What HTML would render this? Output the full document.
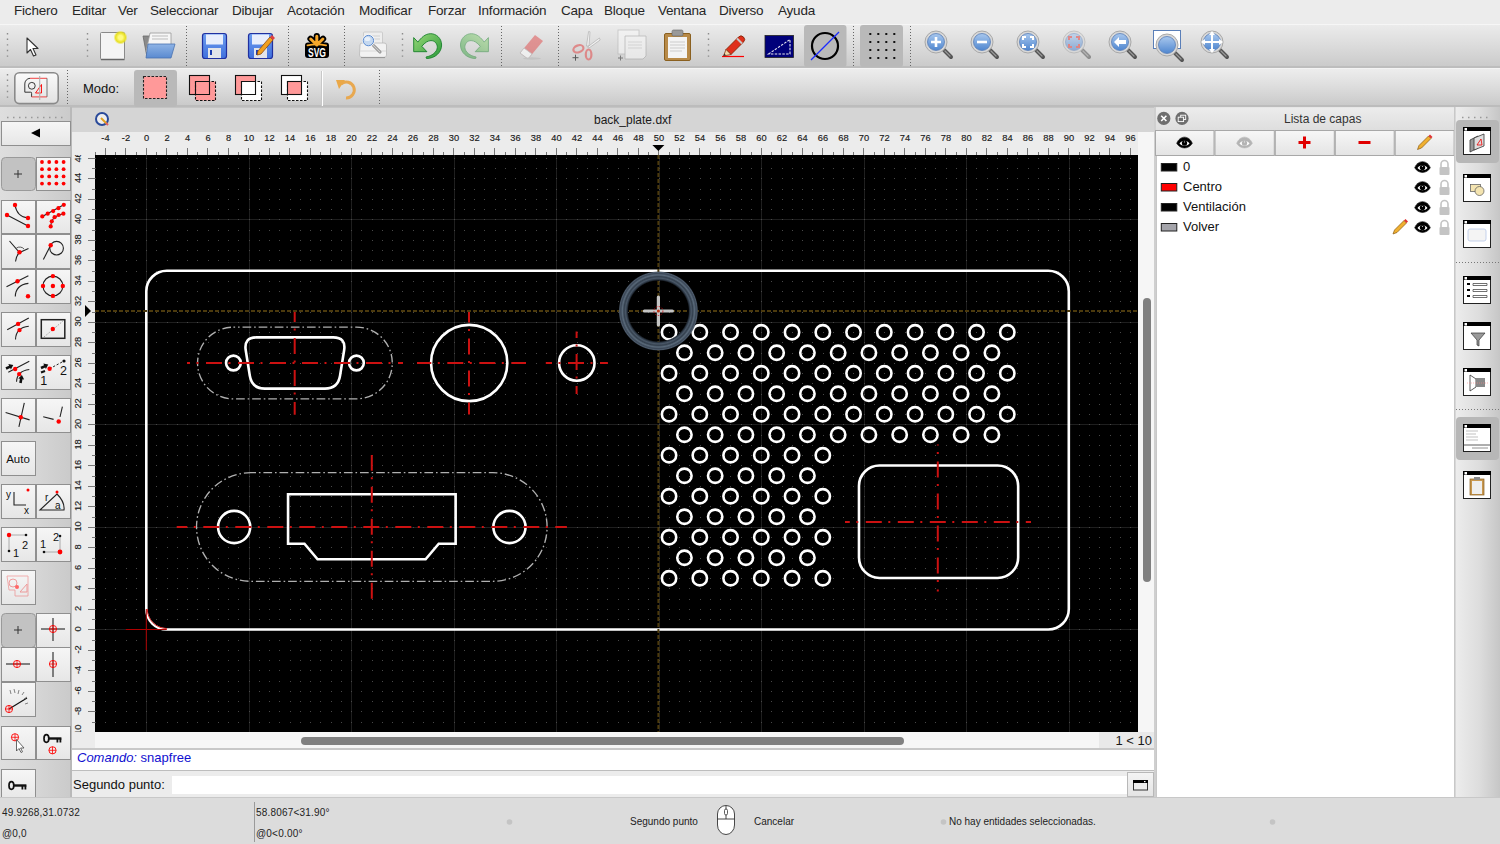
<!DOCTYPE html>
<html><head><meta charset="utf-8"><style>
*{margin:0;padding:0;box-sizing:border-box}
html,body{width:1500px;height:844px;overflow:hidden;background:#e6e6e6;font-family:"Liberation Sans", sans-serif;}
.a{position:absolute}
.t{position:absolute;white-space:nowrap;line-height:1}
svg{position:absolute;overflow:visible}
</style></head>
<body>
<div class="a" style="left:0px;top:0px;width:1500px;height:24px;background:#ececec"></div>
<div class="t" style="left:14px;top:3.8px;font-size:13.5px;color:#262626;letter-spacing:-0.2px">Fichero</div>
<div class="t" style="left:72px;top:3.8px;font-size:13.5px;color:#262626;letter-spacing:-0.2px">Editar</div>
<div class="t" style="left:118px;top:3.8px;font-size:13.5px;color:#262626;letter-spacing:-0.2px">Ver</div>
<div class="t" style="left:150px;top:3.8px;font-size:13.5px;color:#262626;letter-spacing:-0.2px">Seleccionar</div>
<div class="t" style="left:232px;top:3.8px;font-size:13.5px;color:#262626;letter-spacing:-0.2px">Dibujar</div>
<div class="t" style="left:287px;top:3.8px;font-size:13.5px;color:#262626;letter-spacing:-0.2px">Acotación</div>
<div class="t" style="left:359px;top:3.8px;font-size:13.5px;color:#262626;letter-spacing:-0.2px">Modificar</div>
<div class="t" style="left:428px;top:3.8px;font-size:13.5px;color:#262626;letter-spacing:-0.2px">Forzar</div>
<div class="t" style="left:478px;top:3.8px;font-size:13.5px;color:#262626;letter-spacing:-0.2px">Información</div>
<div class="t" style="left:561px;top:3.8px;font-size:13.5px;color:#262626;letter-spacing:-0.2px">Capa</div>
<div class="t" style="left:604px;top:3.8px;font-size:13.5px;color:#262626;letter-spacing:-0.2px">Bloque</div>
<div class="t" style="left:658px;top:3.8px;font-size:13.5px;color:#262626;letter-spacing:-0.2px">Ventana</div>
<div class="t" style="left:719px;top:3.8px;font-size:13.5px;color:#262626;letter-spacing:-0.2px">Diverso</div>
<div class="t" style="left:778px;top:3.8px;font-size:13.5px;color:#262626;letter-spacing:-0.2px">Ayuda</div>
<div class="a" style="left:0px;top:24px;width:1500px;height:44px;background:linear-gradient(#ebebeb,#e2e2e2 30%,#cbcbcb);border-top:1px solid #f6f6f6;border-bottom:2px solid #bdbdbd"></div>
<div class="a" style="left:0px;top:68px;width:1500px;height:39px;background:linear-gradient(#ededed,#e0e0e0 40%,#cacaca);border-top:1px solid #f4f4f4;border-bottom:2px solid #bcbcbc"></div>
<svg class="a" style="left:0px;top:0px;" width="1500" height="68" viewBox="0 0 1500 68"><defs><linearGradient id="lensg" x1="0" y1="0" x2="0" y2="1"><stop offset="0" stop-color="#a9c8ee"/><stop offset="1" stop-color="#4f86cf"/></linearGradient><linearGradient id="flop" x1="0" y1="0" x2="0" y2="1"><stop offset="0" stop-color="#6f9ff0"/><stop offset="1" stop-color="#3f6fdc"/></linearGradient><linearGradient id="fold" x1="0" y1="0" x2="0" y2="1"><stop offset="0" stop-color="#8fb4e6"/><stop offset="1" stop-color="#5a8ad0"/></linearGradient><radialGradient id="glow"><stop offset="0.3" stop-color="#fffb80"/><stop offset="0.7" stop-color="#e8e020"/><stop offset="1" stop-color="#e8e020" stop-opacity="0"/></radialGradient></defs><path d="M7.5 33V58" stroke="#8c8c8c" stroke-width="1.4" stroke-dasharray="1.4 4.2"/><path d="M87.5 33V58" stroke="#8c8c8c" stroke-width="1.4" stroke-dasharray="1.4 4.2"/><path d="M186.5 26V66" stroke="#666" stroke-width="1" stroke-dasharray="1 2"/><path d="M288.5 26V66" stroke="#666" stroke-width="1" stroke-dasharray="1 2"/><path d="M344.5 26V66" stroke="#666" stroke-width="1" stroke-dasharray="1 2"/><path d="M501.5 26V66" stroke="#666" stroke-width="1" stroke-dasharray="1 2"/><path d="M558.5 26V66" stroke="#666" stroke-width="1" stroke-dasharray="1 2"/><path d="M853.5 26V66" stroke="#666" stroke-width="1" stroke-dasharray="1 2"/><path d="M910.5 26V66" stroke="#666" stroke-width="1" stroke-dasharray="1 2"/><path d="M402.5 33V58" stroke="#8c8c8c" stroke-width="1.4" stroke-dasharray="1.4 4.2"/><path d="M708.5 33V58" stroke="#8c8c8c" stroke-width="1.4" stroke-dasharray="1.4 4.2"/><path d="M27 38L27 53L30.5 49.5L33.5 56L36 55L33 48.5L38 48.5Z" fill="#fff" stroke="#333" stroke-width="1.1" stroke-linejoin="round"/><rect x="100.5" y="32.5" width="24" height="27" rx="1" fill="#f4f4f4" stroke="#8a8a8a"/><path d="M101 59.5H124.5" stroke="#666" stroke-width="1.5"/><circle cx="120.5" cy="37.5" r="7" fill="url(#glow)"/><path d="M143 36H152L154 38V57H147Z" fill="#8a8a8a" stroke="#6a6a6a" stroke-width="0.8"/><path d="M150 33H171V52H146Z" fill="#f6f6f6" stroke="#999" stroke-width="0.8"/><path d="M152 36H168M152 39H168" stroke="#bbb" stroke-width="1"/><path d="M148 44H175L171 58H146Z" fill="url(#fold)" stroke="#4a72b0" stroke-width="0.8"/><rect x="202.5" y="33.5" width="24" height="25" rx="2.5" fill="url(#flop)" stroke="#2030a0" stroke-width="1.2"/><rect x="206" y="34.5" width="17" height="10" fill="#e8eefc"/><rect x="208" y="48" width="13" height="10" fill="#e2e4ea"/><rect x="210" y="50" width="2" height="5" fill="#1f3fb0"/><rect x="248.5" y="33.5" width="24" height="25" rx="2.5" fill="url(#flop)" stroke="#2030a0" stroke-width="1.2"/><rect x="252" y="34.5" width="17" height="10" fill="#e8eefc"/><rect x="254" y="48" width="13" height="10" fill="#e2e4ea"/><rect x="256" y="50" width="2" height="5" fill="#1f3fb0"/><path d="M258 51L270 37L273 40L261 54L257 55Z" fill="#f0a020" stroke="#8a4a10" stroke-width="0.8"/><path d="M270 37L272 35L275 38L273 40Z" fill="#e04040"/><g stroke="#000" stroke-linecap="round" fill="none"><path d="M316.8 45V36M316.8 45L310.5 38.8M316.8 45L323.1 38.8" stroke-width="6.2"/></g><rect x="305" y="42.5" width="24" height="15.5" rx="3" fill="#000"/><g stroke="#f7a82a" stroke-linecap="round" fill="none"><path d="M316.8 45V36.2M316.8 45L310.7 39M316.8 45L322.9 39" stroke-width="3"/><path d="M307.5 45.3Q316.8 43.5 326.1 45.3" stroke-width="1.8"/></g><text x="308" y="56.6" textLength="18" lengthAdjust="spacingAndGlyphs" font-family='"Liberation Sans", sans-serif' font-weight="bold" font-size="13" fill="#fff">SVG</text><rect x="363.5" y="32" width="19" height="14" rx="1" fill="#eeeeee" stroke="#c4c4c4" stroke-width="0.8"/><path d="M371 36H380M371 39H380" stroke="#d0d0d0" stroke-width="1"/><path d="M360 45Q360 43 362 43H384Q386.5 43 386.5 45V55Q386.5 57.5 384 57.5H362Q359.5 57.5 359.5 55Z" fill="#f2f2f2" stroke="#b8b8b8" stroke-width="0.8"/><path d="M360 51H386" stroke="#d8d8d8" stroke-width="1"/><path d="M361 57.5H385" stroke="#999" stroke-width="1.2"/><path d="M373.5 45.5L380 52" stroke="#888" stroke-width="3" stroke-linecap="round"/><path d="M373.5 45.5L380 52" stroke="#ccc" stroke-width="1.2" stroke-linecap="round"/><circle cx="368.4" cy="40.6" r="6.3" fill="#fafafa"/><circle cx="368.4" cy="40.6" r="5.2" fill="#c4d8f0" stroke="#5a8ad0" stroke-width="1"/><ellipse cx="367.5" cy="39" rx="3" ry="2" fill="#e8f0fa"/><defs><linearGradient id="ug" x1="0" y1="0" x2="1" y2="1"><stop offset="0" stop-color="#98d878"/><stop offset="1" stop-color="#2a9a3a"/></linearGradient></defs><path d="M413.7 37.6V51.7H426.9L421.8 46.3C425 42.5 428 40.6 431 40.6C435 40.6 437.5 44 437.3 47.5C437 52 432 56 426 57L426.5 58.5C435 58.5 441.6 52.5 441.6 45C441.6 38 436 33.7 430.8 33.7C425 33.7 421 38 417.9 42.1Z" fill="url(#ug)" stroke="#17802a" stroke-width="0.9" stroke-linejoin="round"/><g opacity="0.5" transform="translate(902.1 0) scale(-1 1)"><path d="M413.7 37.6V51.7H426.9L421.8 46.3C425 42.5 428 40.6 431 40.6C435 40.6 437.5 44 437.3 47.5C437 52 432 56 426 57L426.5 58.5C435 58.5 441.6 52.5 441.6 45C441.6 38 436 33.7 430.8 33.7C425 33.7 421 38 417.9 42.1Z" fill="url(#ug)" stroke="#17802a" stroke-width="0.9" stroke-linejoin="round"/></g><g opacity="0.6"><path d="M520 53L535 35L543 41L528 59Z" fill="#e06060"/><path d="M520 53L524 48L532 54L528 59Z" fill="#fff" stroke="#aaa" stroke-width="0.8"/><ellipse cx="532" cy="58.5" rx="9" ry="1.2" fill="#bbb"/></g><g opacity="0.75"><path d="M586.5 46L588.6 31.5L590 31.8L589 46ZM587.5 47L599.4 38L600.2 40L589 48Z" fill="#f8f8f8" stroke="#a0a0a0" stroke-width="0.7"/><ellipse cx="578.4" cy="48.8" rx="5.2" ry="3.4" transform="rotate(-20 578.4 48.8)" fill="none" stroke="#e07070" stroke-width="2.2"/><ellipse cx="588.6" cy="54.5" rx="2.8" ry="5" fill="none" stroke="#e07070" stroke-width="2.2"/><path d="M572.5 57.7H578.5M575.5 54.7V60.7" stroke="#333" stroke-width="1"/></g><g opacity="0.55"><rect x="618" y="30" width="21" height="24" fill="#fafafa" stroke="#aaa" stroke-width="0.8"/><path d="M625 36H646V56L643 59H625Z" fill="#fafafa" stroke="#999" stroke-width="0.8"/><path d="M628 42H642M628 45H642M628 48H642" stroke="#ccc"/><path d="M618 58H623M620.5 55.5V60.5" stroke="#333" stroke-width="1"/></g><rect x="664.5" y="33.5" width="26" height="27" rx="1.5" fill="#b88a48" stroke="#8a6020"/><rect x="668" y="37" width="19" height="21" fill="#f4f4f4"/><path d="M670 42H685M670 45H685M670 48H685M670 51H682" stroke="#ccc"/><rect x="672" y="30" width="11" height="6" rx="1.5" fill="#999" stroke="#666" stroke-width="0.6"/><path d="M722 56.5H744" stroke="#f00" stroke-width="1.2"/><path d="M726 49.5L738.5 37Q741 34.5 743.5 37Q746 39.5 743.5 42L731 54.5Z" fill="#e0301c" stroke="#7a2000" stroke-width="0.8" stroke-linejoin="round"/><path d="M737 38.5L742 43.5" stroke="#c8c8c8" stroke-width="2"/><path d="M726 49.5L723.5 56L731 54.5Z" fill="#f0d8a8" stroke="#7a2000" stroke-width="0.7" stroke-linejoin="round"/><path d="M723.5 56L724.3 53.6L726 55.2Z" fill="#333"/><rect x="765" y="35.5" width="28.5" height="22" fill="#00007a" stroke="#222" stroke-width="0.8"/><path d="M768.5 54L790 39.5V54Z" fill="none" stroke="#e8e8f0" stroke-width="1.1" stroke-dasharray="2.5 1.3"/><rect x="804" y="25" width="42.5" height="42" rx="3" fill="#b9b9b9"/><circle cx="825" cy="46" r="13" fill="none" stroke="#000" stroke-width="2.2"/><path d="M811 60L839 32" stroke="#1a2aff" stroke-width="1.2"/><rect x="860" y="25" width="43" height="42" rx="3" fill="#b9b9b9"/><g fill="#111"><rect x="869.3" y="33" width="2" height="2"/><rect x="877.3" y="33" width="2" height="2"/><rect x="885.3" y="33" width="2" height="2"/><rect x="893.3" y="33" width="2" height="2"/><rect x="869.3" y="41" width="2" height="2"/><rect x="877.3" y="41" width="2" height="2"/><rect x="885.3" y="41" width="2" height="2"/><rect x="893.3" y="41" width="2" height="2"/><rect x="869.3" y="49" width="2" height="2"/><rect x="877.3" y="49" width="2" height="2"/><rect x="885.3" y="49" width="2" height="2"/><rect x="893.3" y="49" width="2" height="2"/><rect x="869.3" y="57" width="2" height="2"/><rect x="877.3" y="57" width="2" height="2"/><rect x="885.3" y="57" width="2" height="2"/><rect x="893.3" y="57" width="2" height="2"/></g><g><path d="M944 50L951 57" stroke="#555" stroke-width="4" stroke-linecap="round"/><path d="M945 51L950 56" stroke="#999" stroke-width="1.2" stroke-linecap="round"/><circle cx="936" cy="42" r="11" fill="#d8d8d8" stroke="#a8a8a8" stroke-width="1"/><circle cx="936" cy="42" r="8.5" fill="url(#lensg)" stroke="#5a7fb8" stroke-width="0.8"/><path d="M931 42H941M936 37V47" stroke="#fff" stroke-width="2.6"/></g><g><path d="M990 50L997 57" stroke="#555" stroke-width="4" stroke-linecap="round"/><path d="M991 51L996 56" stroke="#999" stroke-width="1.2" stroke-linecap="round"/><circle cx="982" cy="42" r="11" fill="#d8d8d8" stroke="#a8a8a8" stroke-width="1"/><circle cx="982" cy="42" r="8.5" fill="url(#lensg)" stroke="#5a7fb8" stroke-width="0.8"/><path d="M977 42H987" stroke="#fff" stroke-width="2.6"/></g><g><path d="M1036 50L1043 57" stroke="#555" stroke-width="4" stroke-linecap="round"/><path d="M1037 51L1042 56" stroke="#999" stroke-width="1.2" stroke-linecap="round"/><circle cx="1028" cy="42" r="11" fill="#d8d8d8" stroke="#a8a8a8" stroke-width="1"/><circle cx="1028" cy="42" r="8.5" fill="url(#lensg)" stroke="#5a7fb8" stroke-width="0.8"/><path d="M1023 40V37H1026M1030 37H1033V40M1033 44V47H1030M1026 47H1023V44" stroke="#fff" stroke-width="2" fill="none"/></g><g opacity="0.55"><path d="M1082 50L1089 57" stroke="#555" stroke-width="4" stroke-linecap="round"/><path d="M1083 51L1088 56" stroke="#999" stroke-width="1.2" stroke-linecap="round"/><circle cx="1074" cy="42" r="11" fill="#d8d8d8" stroke="#a8a8a8" stroke-width="1"/><circle cx="1074" cy="42" r="8.5" fill="url(#lensg)" stroke="#5a7fb8" stroke-width="0.8"/><path d="M1069 40V37H1072M1076 37H1079V40M1079 44V47H1076M1072 47H1069V44" stroke="#e04040" stroke-width="2" fill="none"/></g><g><path d="M1128 50L1135 57" stroke="#555" stroke-width="4" stroke-linecap="round"/><path d="M1129 51L1134 56" stroke="#999" stroke-width="1.2" stroke-linecap="round"/><circle cx="1120" cy="42" r="11" fill="#d8d8d8" stroke="#a8a8a8" stroke-width="1"/><circle cx="1120" cy="42" r="8.5" fill="url(#lensg)" stroke="#5a7fb8" stroke-width="0.8"/><path d="M1114 42L1119 37V40H1126V44H1119V47Z" fill="#fff"/></g><rect x="1153.5" y="30.5" width="27" height="18" fill="#fff" stroke="#5a7fb8"/><g><path d="M1175 53L1182 60" stroke="#555" stroke-width="4" stroke-linecap="round"/><path d="M1176 54L1181 59" stroke="#999" stroke-width="1.2" stroke-linecap="round"/><circle cx="1167" cy="45" r="11" fill="#d8d8d8" stroke="#a8a8a8" stroke-width="1"/><circle cx="1167" cy="45" r="8.5" fill="url(#lensg)" stroke="#5a7fb8" stroke-width="0.8"/></g><g><path d="M1220 50L1227 57" stroke="#555" stroke-width="4" stroke-linecap="round"/><path d="M1221 51L1226 56" stroke="#999" stroke-width="1.2" stroke-linecap="round"/><circle cx="1212" cy="42" r="11" fill="#d8d8d8" stroke="#a8a8a8" stroke-width="1"/><circle cx="1212" cy="42" r="8.5" fill="url(#lensg)" stroke="#5a7fb8" stroke-width="0.8"/><path d="M1212 32V52M1202 42H1222" stroke="#fff" stroke-width="2"/><path d="M1212 31L1209 35H1215ZM1212 53L1209 49H1215ZM1201 42L1205 39V45ZM1223 42L1219 39V45Z" fill="#fff"/></g></svg>
<svg class="a" style="left:0px;top:0px;" width="1500" height="110" viewBox="0 0 1500 110"><path d="M7.5 74V102" stroke="#8c8c8c" stroke-width="1.4" stroke-dasharray="1.4 4.2"/><path d="M67.5 70V106" stroke="#666" stroke-width="1" stroke-dasharray="1 2"/><path d="M322.5 71V106" stroke="#fff" stroke-width="1"/><path d="M321.5 71V106" stroke="#c8c8c8" stroke-width="1"/><path d="M379.5 70V106" stroke="#666" stroke-width="1" stroke-dasharray="1 2"/><defs><linearGradient id="tgb" x1="0" y1="0" x2="0" y2="1"><stop offset="0" stop-color="#fafafa"/><stop offset="1" stop-color="#e2e2e2"/></linearGradient></defs><rect x="14.8" y="72.8" width="43.4" height="30.8" rx="4.5" fill="url(#tgb)" stroke="#8a8a8a" stroke-width="1.6"/><path d="M30 78.3A5.5 5.5 0 0 0 24.8 84V92.2H30.5A1 1 0 0 1 31.6 93.3V96.9" fill="none" stroke="#222" stroke-width="0.9"/><path d="M30 78.3H47M31.6 96.9H47" stroke="#f03030" stroke-width="0.9"/><path d="M47 78.3V96.9" stroke="#666" stroke-width="0.9"/><circle cx="31.8" cy="85.8" r="3.4" fill="none" stroke="#222" stroke-width="0.9"/><path d="M35.5 93L41.5 84.5V93Z" fill="none" stroke="#f00" stroke-width="0.9"/><path d="M39.7 76V100" stroke="#b0b0b0" stroke-width="1.1"/><text x="83" y="93" font-family='"Liberation Sans", sans-serif' font-size="13" fill="#111">Modo:</text><rect x="134" y="70" width="43" height="37" rx="3" fill="#b9b9b9"/><rect x="143.5" y="76.5" width="23" height="22" fill="#f99" stroke="#222" stroke-width="1.1" stroke-dasharray="2.5 1.5"/><rect x="189.5" y="75.5" width="20" height="19" fill="#f99" stroke="#111" stroke-width="1.1"/><rect x="195.5" y="81.5" width="20" height="19" fill="#f99" stroke="#111" stroke-width="1.1" stroke-dasharray="2.5 1.5"/><path d="M195.5 81.5H209.5V94.5H195.5Z" fill="none" stroke="#111" stroke-width="1.1"/><rect x="235.5" y="75.5" width="20" height="19" fill="#f99" stroke="#111" stroke-width="1.1"/><rect x="241.5" y="81.5" width="20" height="19" fill="#fff" stroke="#111" stroke-width="1.1" stroke-dasharray="2.5 1.5"/><path d="M241.5 81.5H255.5V94.5H241.5Z" fill="#fff" stroke="#111" stroke-width="1.1"/><rect x="281.5" y="75.5" width="20" height="19" fill="#fff" stroke="#111" stroke-width="1.1"/><rect x="287.5" y="81.5" width="20" height="19" fill="#fff" stroke="#111" stroke-width="1.1" stroke-dasharray="2.5 1.5"/><rect x="287.5" y="81.5" width="14" height="13" fill="#f99" stroke="#111" stroke-width="1.1"/><path d="M341 84A8 8 0 1 1 346 98" fill="none" stroke="#e8a850" stroke-width="3"/><path d="M336 80L345 80L339 89Z" fill="#eaa848"/></svg>
<div class="a" style="left:0px;top:107px;width:72px;height:690px;background:linear-gradient(90deg,#dedede 0%,#d6d6d6 50%,#cacaca 100%)"></div>
<div class="a" style="left:70px;top:107px;width:2px;height:690px;background:#b9b9b9"></div>
<svg class="a" style="left:0px;top:0px;" width="75" height="800" viewBox="0 0 75 800"><defs><linearGradient id="btng" x1="0" y1="0" x2="0" y2="1"><stop offset="0" stop-color="#f6f6f6"/><stop offset="1" stop-color="#e6e6e6"/></linearGradient></defs><path d="M7 117.5H64" stroke="#999" stroke-width="1.5" stroke-dasharray="1.5 4.5"/><rect x="1.5" y="121.5" width="69" height="24" fill="url(#btng)" stroke="#8f8f8f"/><path d="M31 133L40 128.5V137.5Z" fill="#000"/><rect x="1.5" y="157.5" width="34" height="33" rx="4" fill="#c2c2c2" stroke="#9a9a9a"/><path d="M14 174H22M18 170V178" stroke="#333" stroke-width="1"/><rect x="36.5" y="157.5" width="34" height="33" fill="url(#btng)" stroke="#8f8f8f"/><circle cx="42.0" cy="162.0" r="1.9" fill="#f00"/><circle cx="49.2" cy="162.0" r="1.9" fill="#f00"/><circle cx="56.4" cy="162.0" r="1.9" fill="#f00"/><circle cx="63.6" cy="162.0" r="1.9" fill="#f00"/><circle cx="42.0" cy="169.2" r="1.9" fill="#f00"/><circle cx="49.2" cy="169.2" r="1.9" fill="#f00"/><circle cx="56.4" cy="169.2" r="1.9" fill="#f00"/><circle cx="63.6" cy="169.2" r="1.9" fill="#f00"/><circle cx="42.0" cy="176.4" r="1.9" fill="#f00"/><circle cx="49.2" cy="176.4" r="1.9" fill="#f00"/><circle cx="56.4" cy="176.4" r="1.9" fill="#f00"/><circle cx="63.6" cy="176.4" r="1.9" fill="#f00"/><circle cx="42.0" cy="183.6" r="1.9" fill="#f00"/><circle cx="49.2" cy="183.6" r="1.9" fill="#f00"/><circle cx="56.4" cy="183.6" r="1.9" fill="#f00"/><circle cx="63.6" cy="183.6" r="1.9" fill="#f00"/><rect x="1.5" y="200.5" width="34" height="33" fill="url(#btng)" stroke="#8f8f8f"/><path d="M15 205Q17 217 28 218M7 215L28 226" stroke="#222" stroke-width="1.1" fill="none"/><circle cx="15" cy="205" r="2.2" fill="#f00"/><circle cx="28" cy="218" r="2.2" fill="#f00"/><circle cx="7" cy="215" r="2.2" fill="#f00"/><circle cx="28" cy="226" r="2.2" fill="#f00"/><rect x="36.5" y="200.5" width="34" height="33" fill="url(#btng)" stroke="#8f8f8f"/><path d="M42.3 216.4L63.8 204.8M50.7 226.4Q51 218 58.7 215L63.4 213.7" stroke="#222" stroke-width="1.1" fill="none"/><circle cx="42.3" cy="216.4" r="2.1" fill="#f00"/><circle cx="47.7" cy="213.7" r="2.1" fill="#f00"/><circle cx="53.2" cy="211.1" r="2.1" fill="#f00"/><circle cx="58.4" cy="208.2" r="2.1" fill="#f00"/><circle cx="63.8" cy="204.8" r="2.1" fill="#f00"/><circle cx="50.7" cy="226.4" r="2.1" fill="#f00"/><circle cx="51.8" cy="221.3" r="2.1" fill="#f00"/><circle cx="54.6" cy="217.2" r="2.1" fill="#f00"/><circle cx="58.7" cy="215" r="2.1" fill="#f00"/><circle cx="63.4" cy="213.7" r="2.1" fill="#f00"/><rect x="1.5" y="234.5" width="34" height="34" fill="url(#btng)" stroke="#8f8f8f"/><path d="M9.5 241L19.5 252.5L28.5 248.5M19.5 252.5Q16 256 15.5 261.5" stroke="#222" stroke-width="1.1" fill="none"/><path d="M16.5 248A5 4 0 0 1 24 249" stroke="#333" stroke-width="0.8" fill="none"/><circle cx="19.5" cy="252.3" r="2.2" fill="#f00"/><rect x="36.5" y="234.5" width="34" height="34" fill="url(#btng)" stroke="#8f8f8f"/><circle cx="56.6" cy="248.2" r="6.8" stroke="#222" stroke-width="1.1" fill="none"/><path d="M43.4 259.4L50.7 245.2" stroke="#222" stroke-width="1.1" fill="none"/><circle cx="50.7" cy="245.2" r="2.2" fill="#f00"/><rect x="1.5" y="269.5" width="34" height="34" fill="url(#btng)" stroke="#8f8f8f"/><path d="M6.5 286.7L28.4 275.8M15.3 296.6Q15.5 285 28.4 283.4" stroke="#222" stroke-width="1.1" fill="none"/><circle cx="17.5" cy="281.2" r="2.2" fill="#f00"/><circle cx="28" cy="296.2" r="2.2" fill="#f00"/><rect x="36.5" y="269.5" width="34" height="34" fill="url(#btng)" stroke="#8f8f8f"/><circle cx="52.9" cy="286" r="9.9" stroke="#222" stroke-width="1.1" fill="none"/><circle cx="52.9" cy="286" r="2.2" fill="#f00"/><circle cx="52.9" cy="276.1" r="2.2" fill="#f00"/><circle cx="52.9" cy="295.9" r="2.2" fill="#f00"/><circle cx="43" cy="286" r="2.2" fill="#f00"/><circle cx="62.8" cy="286" r="2.2" fill="#f00"/><rect x="1.5" y="312.5" width="34" height="34" fill="url(#btng)" stroke="#8f8f8f"/><path d="M7.2 329.8L28.8 318.1M15.5 339.4Q16 327.5 28.8 326.3" stroke="#222" stroke-width="1.1" fill="none"/><circle cx="18.1" cy="323.9" r="2.2" fill="#f00"/><circle cx="19.5" cy="330.1" r="2.2" fill="#f00"/><rect x="36.5" y="312.5" width="34" height="34" fill="url(#btng)" stroke="#8f8f8f"/><rect x="41.3" y="319.7" width="23.5" height="18.6" stroke="#222" stroke-width="1.5" fill="none"/><path d="M44 337L63 321" stroke="#888" stroke-width="0.8" stroke-dasharray="1.5 1.5"/><circle cx="52.8" cy="329" r="2.2" fill="#f00"/><rect x="1.5" y="355.5" width="34" height="34" fill="url(#btng)" stroke="#8f8f8f"/><path d="M8.3 372.2L29.3 361.3M16.5 381.8Q17 371 29.3 369.5" stroke="#222" stroke-width="1.1" fill="none"/><path d="M0 -1.3H4V-3L8 0L4 3V1.3H0Z" fill="#111" transform="translate(6 368.5) rotate(-25)"/><path d="M0 -1.3H4V-3L8 0L4 3V1.3H0Z" fill="#111" transform="translate(20.5 383) rotate(-80)"/><circle cx="15.2" cy="369" r="2.2" fill="#f00"/><circle cx="19.2" cy="374.1" r="2.2" fill="#f00"/><rect x="36.5" y="355.5" width="34" height="34" fill="url(#btng)" stroke="#8f8f8f"/><path d="M49.6 368.7L64 361" stroke="#222" stroke-width="1" stroke-dasharray="2.2 1.8" fill="none"/><path d="M0 -1.3H4V-3L8 0L4 3V1.3H0Z" fill="#111" transform="translate(41 368) rotate(-25)"/><path d="M41 372.5L45 371" stroke="#111" stroke-width="2.2"/><circle cx="64" cy="361" r="1.6" fill="#111"/><circle cx="49.6" cy="368.7" r="2.2" fill="#f00"/><text x="40.3" y="385" font-family='"Liberation Sans", sans-serif' font-size="12.5" fill="#111">1</text><text x="60" y="375" font-family='"Liberation Sans", sans-serif' font-size="12.5" fill="#111">2</text><rect x="1.5" y="398.5" width="34" height="34" fill="url(#btng)" stroke="#8f8f8f"/><path d="M5.6 412.5L29.6 419.9M24.3 402.9L18.9 426.9" stroke="#222" stroke-width="1.1" fill="none"/><circle cx="20.8" cy="417.3" r="2.2" fill="#f00"/><rect x="36.5" y="398.5" width="34" height="34" fill="url(#btng)" stroke="#8f8f8f"/><path d="M43.2 416.7L53.6 419.4M62.4 406.6L60 417" stroke="#222" stroke-width="1.1" fill="none"/><circle cx="58.7" cy="421.5" r="2.2" fill="#f00"/><rect x="1.5" y="441.5" width="34" height="34" fill="url(#btng)" stroke="#8f8f8f"/><text x="18" y="463" text-anchor="middle" font-family='"Liberation Sans", sans-serif' font-size="11.5" fill="#111">Auto</text><rect x="1.5" y="484.5" width="34" height="34" fill="url(#btng)" stroke="#8f8f8f"/><path d="M14 492V505H26" stroke="#222" stroke-width="1.1" fill="none"/><circle cx="28" cy="490" r="1.5" fill="#f00"/><text x="6" y="498" font-family='"Liberation Sans", sans-serif' font-size="10" fill="#111">y</text><text x="24" y="514" font-family='"Liberation Sans", sans-serif' font-size="10" fill="#111">x</text><rect x="36.5" y="484.5" width="34" height="34" fill="url(#btng)" stroke="#8f8f8f"/><path d="M40 510L57 494Q65 502 64 510Z" stroke="#222" stroke-width="1.1" fill="none"/><circle cx="57" cy="492" r="1.5" fill="#f00"/><text x="45" y="501" font-family='"Liberation Sans", sans-serif' font-size="10" fill="#111">r</text><text x="55" y="509" font-family='"Liberation Sans", sans-serif' font-size="10" fill="#111">a</text><rect x="1.5" y="527.5" width="34" height="34" fill="url(#btng)" stroke="#8f8f8f"/><path d="M9 535H26M9 535V551" stroke="#999" stroke-width="0.8"/><circle cx="9" cy="535" r="2.2" fill="#f00"/><circle cx="26" cy="535" r="1.3" fill="#111"/><circle cx="9" cy="551" r="1.3" fill="#111"/><text x="13" y="557" font-family='"Liberation Sans", sans-serif' font-size="11" fill="#111">1</text><text x="22" y="549" font-family='"Liberation Sans", sans-serif' font-size="11" fill="#111">2</text><rect x="36.5" y="527.5" width="34" height="34" fill="url(#btng)" stroke="#8f8f8f"/><path d="M44 552H60M60 536V552" stroke="#999" stroke-width="0.8"/><circle cx="60" cy="552" r="2.4" fill="#f00"/><circle cx="60" cy="536" r="1.3" fill="#111"/><circle cx="44" cy="552" r="1.3" fill="#111"/><text x="40" y="548" font-family='"Liberation Sans", sans-serif' font-size="11" fill="#111">1</text><text x="53" y="541" font-family='"Liberation Sans", sans-serif' font-size="11" fill="#111">2</text><rect x="1.5" y="570.5" width="34" height="34" fill="url(#btng)" stroke="#8f8f8f"/><g opacity="0.35"><path d="M7 576H28V596H15V590H9Z" fill="none" stroke="#e00" stroke-width="0.8"/><circle cx="13" cy="583" r="4" fill="none" stroke="#e00"/><path d="M20 592L27 584V592Z" fill="none" stroke="#e00"/></g><circle cx="17" cy="587" r="2" fill="#f66"/><rect x="1.5" y="613.5" width="34" height="34" rx="4" fill="#c2c2c2" stroke="#9a9a9a"/><path d="M14 630H22M18 626V634" stroke="#333" stroke-width="1"/><rect x="36.5" y="613.5" width="34" height="34" fill="url(#btng)" stroke="#8f8f8f"/><path d="M41 629H65M53 618V641" stroke="#111" stroke-width="1"/><circle cx="53" cy="629" r="3.6" fill="#fff" fill-opacity="0.01" stroke="#f00" stroke-width="0.9"/><path d="M49.4 629H56.6M53 625.4V632.6" stroke="#f00" stroke-width="0.8"/><rect x="1.5" y="647.5" width="34" height="34" fill="url(#btng)" stroke="#8f8f8f"/><path d="M6 664H30" stroke="#111" stroke-width="1"/><circle cx="17" cy="664" r="3.6" fill="#fff" fill-opacity="0.01" stroke="#f00" stroke-width="0.9"/><path d="M13.4 664H20.6M17 660.4V667.6" stroke="#f00" stroke-width="0.8"/><rect x="36.5" y="647.5" width="34" height="34" fill="url(#btng)" stroke="#8f8f8f"/><path d="M53 652V677" stroke="#111" stroke-width="1"/><circle cx="53" cy="664" r="3.6" fill="#fff" fill-opacity="0.01" stroke="#f00" stroke-width="0.9"/><path d="M49.4 664H56.6M53 660.4V667.6" stroke="#f00" stroke-width="0.8"/><rect x="1.5" y="682.5" width="34" height="34" fill="url(#btng)" stroke="#8f8f8f"/><path d="M9 709L27 698" stroke="#111" stroke-width="1.2"/><path d="M10 690L11 694M14 689L15 693M19 690L18 694M24 692L22 695M27 697L24 699M28 703L25 704" stroke="#666" stroke-width="0.8"/><circle cx="9" cy="709" r="3.6" fill="#fff" fill-opacity="0.01" stroke="#f00" stroke-width="0.9"/><path d="M5.4 709H12.6M9 705.4V712.6" stroke="#f00" stroke-width="0.8"/><rect x="1.5" y="726.5" width="34" height="33" fill="url(#btng)" stroke="#8f8f8f"/><circle cx="15" cy="737.3" r="3.6" fill="none" stroke="#f00" stroke-width="0.9"/><path d="M11.4 737.3H18.6M15 733.6999999999999V740.9" stroke="#f00" stroke-width="0.8"/><path d="M16.5 739.5V751L19 748.5L21 752.5L22.5 751.8L20.6 748H24Z" fill="#fff" stroke="#444" stroke-width="0.8" stroke-linejoin="round"/><rect x="36.5" y="726.5" width="34" height="33" fill="url(#btng)" stroke="#8f8f8f"/><ellipse cx="46.4" cy="738.5" rx="2.4" ry="3.8" fill="none" stroke="#111" stroke-width="1.7"/><path d="M48.8 738.5H61.4" stroke="#111" stroke-width="2.4"/><path d="M57.4 738.5V742.5M60.4 738.5V742.5" stroke="#111" stroke-width="1.8"/><circle cx="52.5" cy="750.3" r="3.6" fill="none" stroke="#f00" stroke-width="0.9"/><path d="M48.9 750.3H56.1M52.5 746.6999999999999V753.9" stroke="#f00" stroke-width="0.8"/><rect x="1.5" y="769.5" width="34" height="33" fill="url(#btng)" stroke="#8f8f8f"/><ellipse cx="11.4" cy="785.5" rx="2.4" ry="3.8" fill="none" stroke="#111" stroke-width="1.7"/><path d="M13.8 785.5H26.4" stroke="#111" stroke-width="2.4"/><path d="M22.4 785.5V789.5M25.4 785.5V789.5" stroke="#111" stroke-width="1.8"/></svg>
<div class="a" style="left:72px;top:107px;width:1082px;height:1px;background:#c4c4c4"></div>
<div class="a" style="left:72px;top:108px;width:1082px;height:24px;background:#d5d5d5"></div>
<div class="t" style="left:594px;top:114px;font-size:12px;color:#1a1a1a;">back_plate.dxf</div>
<svg class="a" style="left:94px;top:111px;" width="16" height="16" viewBox="0 0 16 16"><circle cx="8" cy="8" r="6" fill="#eee" stroke="#2a4a9a" stroke-width="2"/><path d="M7 7L13 13" stroke="#e0a020" stroke-width="2"/><path d="M12 12L14 14" stroke="#e06060" stroke-width="2"/></svg>
<div class="a" style="left:72px;top:132px;width:1082px;height:23px;background:#ececec"></div>
<div class="a" style="left:72px;top:155px;width:23px;height:593px;background:#ececec"></div>
<svg class="a" style="left:72px;top:132px;overflow:hidden" width="1082" height="23" viewBox="0 0 1082 23"><path d="M23.5 20V23M33.5 16V23M43.5 20V23M53.5 16V23M64.5 20V23M74.5 16V23M84.5 20V23M94.5 16V23M105.5 20V23M115.5 16V23M125.5 20V23M135.5 16V23M146.5 20V23M156.5 16V23M166.5 20V23M176.5 16V23M187.5 20V23M197.5 16V23M207.5 20V23M217.5 16V23M228.5 20V23M238.5 16V23M248.5 20V23M258.5 16V23M269.5 20V23M279.5 16V23M289.5 20V23M299.5 16V23M310.5 20V23M320.5 16V23M330.5 20V23M340.5 16V23M351.5 20V23M361.5 16V23M371.5 20V23M381.5 16V23M392.5 20V23M402.5 16V23M412.5 20V23M422.5 16V23M433.5 20V23M443.5 16V23M453.5 20V23M463.5 16V23M474.5 20V23M484.5 16V23M494.5 20V23M504.5 16V23M515.5 20V23M525.5 16V23M535.5 20V23M545.5 16V23M556.5 20V23M566.5 16V23M576.5 20V23M586.5 16V23M597.5 20V23M607.5 16V23M617.5 20V23M627.5 16V23M638.5 20V23M648.5 16V23M658.5 20V23M668.5 16V23M679.5 20V23M689.5 16V23M699.5 20V23M709.5 16V23M720.5 20V23M730.5 16V23M740.5 20V23M750.5 16V23M761.5 20V23M771.5 16V23M781.5 20V23M791.5 16V23M802.5 20V23M812.5 16V23M822.5 20V23M832.5 16V23M843.5 20V23M853.5 16V23M863.5 20V23M873.5 16V23M884.5 20V23M894.5 16V23M904.5 20V23M914.5 16V23M925.5 20V23M935.5 16V23M945.5 20V23M955.5 16V23M966.5 20V23M976.5 16V23M986.5 20V23M996.5 16V23M1007.5 20V23M1017.5 16V23M1027.5 20V23M1037.5 16V23M1048.5 20V23M1058.5 16V23" stroke="#777" stroke-width="1"/>
<g font-family='"Liberation Sans", sans-serif' font-size="9.3" fill="#1a1a1a" stroke="#1a1a1a" stroke-width="0.15"><text x="33.5" y="9" text-anchor="middle">-4</text><text x="54.0" y="9" text-anchor="middle">-2</text><text x="74.5" y="9" text-anchor="middle">0</text><text x="95.0" y="9" text-anchor="middle">2</text><text x="115.5" y="9" text-anchor="middle">4</text><text x="136.0" y="9" text-anchor="middle">6</text><text x="156.5" y="9" text-anchor="middle">8</text><text x="177.0" y="9" text-anchor="middle">10</text><text x="197.5" y="9" text-anchor="middle">12</text><text x="218.0" y="9" text-anchor="middle">14</text><text x="238.5" y="9" text-anchor="middle">16</text><text x="259.0" y="9" text-anchor="middle">18</text><text x="279.5" y="9" text-anchor="middle">20</text><text x="300.0" y="9" text-anchor="middle">22</text><text x="320.5" y="9" text-anchor="middle">24</text><text x="341.0" y="9" text-anchor="middle">26</text><text x="361.5" y="9" text-anchor="middle">28</text><text x="382.0" y="9" text-anchor="middle">30</text><text x="402.5" y="9" text-anchor="middle">32</text><text x="423.0" y="9" text-anchor="middle">34</text><text x="443.5" y="9" text-anchor="middle">36</text><text x="464.0" y="9" text-anchor="middle">38</text><text x="484.5" y="9" text-anchor="middle">40</text><text x="505.0" y="9" text-anchor="middle">42</text><text x="525.5" y="9" text-anchor="middle">44</text><text x="546.0" y="9" text-anchor="middle">46</text><text x="566.5" y="9" text-anchor="middle">48</text><text x="587.0" y="9" text-anchor="middle">50</text><text x="607.5" y="9" text-anchor="middle">52</text><text x="628.0" y="9" text-anchor="middle">54</text><text x="648.5" y="9" text-anchor="middle">56</text><text x="669.0" y="9" text-anchor="middle">58</text><text x="689.5" y="9" text-anchor="middle">60</text><text x="710.0" y="9" text-anchor="middle">62</text><text x="730.5" y="9" text-anchor="middle">64</text><text x="751.0" y="9" text-anchor="middle">66</text><text x="771.5" y="9" text-anchor="middle">68</text><text x="792.0" y="9" text-anchor="middle">70</text><text x="812.5" y="9" text-anchor="middle">72</text><text x="833.0" y="9" text-anchor="middle">74</text><text x="853.5" y="9" text-anchor="middle">76</text><text x="874.0" y="9" text-anchor="middle">78</text><text x="894.5" y="9" text-anchor="middle">80</text><text x="915.0" y="9" text-anchor="middle">82</text><text x="935.5" y="9" text-anchor="middle">84</text><text x="956.0" y="9" text-anchor="middle">86</text><text x="976.5" y="9" text-anchor="middle">88</text><text x="997.0" y="9" text-anchor="middle">90</text><text x="1017.5" y="9" text-anchor="middle">92</text><text x="1038.0" y="9" text-anchor="middle">94</text><text x="1058.5" y="9" text-anchor="middle">96</text></g>
<path d="M580.4 13H592.4L586.4 19Z" fill="#000"/></svg>
<svg class="a" style="left:72px;top:155px;overflow:hidden" width="23" height="577" viewBox="0 0 23 577"><path d="M20 567.5H23M16 556.5H23M20 546.5H23M16 536.5H23M20 526.5H23M16 515.5H23M20 505.5H23M16 495.5H23M20 485.5H23M16 474.5H23M20 464.5H23M16 454.5H23M20 444.5H23M16 433.5H23M20 423.5H23M16 413.5H23M20 403.5H23M16 392.5H23M20 382.5H23M16 372.5H23M20 362.5H23M16 351.5H23M20 341.5H23M16 331.5H23M20 321.5H23M16 310.5H23M20 300.5H23M16 290.5H23M20 280.5H23M16 269.5H23M20 259.5H23M16 249.5H23M20 239.5H23M16 228.5H23M20 218.5H23M16 208.5H23M20 198.5H23M16 187.5H23M20 177.5H23M16 167.5H23M20 157.5H23M16 146.5H23M20 136.5H23M16 126.5H23M20 116.5H23M16 105.5H23M20 95.5H23M16 85.5H23M20 75.5H23M16 64.5H23M20 54.5H23M16 44.5H23M20 34.5H23M16 23.5H23M20 13.5H23M16 3.5H23" stroke="#777" stroke-width="1"/>
<g font-family='"Liberation Sans", sans-serif' font-size="9.3" fill="#1a1a1a" stroke="#1a1a1a" stroke-width="0.15"><text transform="translate(8.8 576.4) rotate(-90)" x="0" y="0" text-anchor="middle">-10</text><text transform="translate(8.8 555.9) rotate(-90)" x="0" y="0" text-anchor="middle">-8</text><text transform="translate(8.8 535.4) rotate(-90)" x="0" y="0" text-anchor="middle">-6</text><text transform="translate(8.8 514.9) rotate(-90)" x="0" y="0" text-anchor="middle">-4</text><text transform="translate(8.8 494.4) rotate(-90)" x="0" y="0" text-anchor="middle">-2</text><text transform="translate(8.8 473.9) rotate(-90)" x="0" y="0" text-anchor="middle">0</text><text transform="translate(8.8 453.4) rotate(-90)" x="0" y="0" text-anchor="middle">2</text><text transform="translate(8.8 432.9) rotate(-90)" x="0" y="0" text-anchor="middle">4</text><text transform="translate(8.8 412.4) rotate(-90)" x="0" y="0" text-anchor="middle">6</text><text transform="translate(8.8 391.9) rotate(-90)" x="0" y="0" text-anchor="middle">8</text><text transform="translate(8.8 371.4) rotate(-90)" x="0" y="0" text-anchor="middle">10</text><text transform="translate(8.8 350.9) rotate(-90)" x="0" y="0" text-anchor="middle">12</text><text transform="translate(8.8 330.4) rotate(-90)" x="0" y="0" text-anchor="middle">14</text><text transform="translate(8.8 309.9) rotate(-90)" x="0" y="0" text-anchor="middle">16</text><text transform="translate(8.8 289.4) rotate(-90)" x="0" y="0" text-anchor="middle">18</text><text transform="translate(8.8 268.9) rotate(-90)" x="0" y="0" text-anchor="middle">20</text><text transform="translate(8.8 248.4) rotate(-90)" x="0" y="0" text-anchor="middle">22</text><text transform="translate(8.8 227.9) rotate(-90)" x="0" y="0" text-anchor="middle">24</text><text transform="translate(8.8 207.4) rotate(-90)" x="0" y="0" text-anchor="middle">26</text><text transform="translate(8.8 186.9) rotate(-90)" x="0" y="0" text-anchor="middle">28</text><text transform="translate(8.8 166.4) rotate(-90)" x="0" y="0" text-anchor="middle">30</text><text transform="translate(8.8 145.9) rotate(-90)" x="0" y="0" text-anchor="middle">32</text><text transform="translate(8.8 125.4) rotate(-90)" x="0" y="0" text-anchor="middle">34</text><text transform="translate(8.8 104.9) rotate(-90)" x="0" y="0" text-anchor="middle">36</text><text transform="translate(8.8 84.4) rotate(-90)" x="0" y="0" text-anchor="middle">38</text><text transform="translate(8.8 63.9) rotate(-90)" x="0" y="0" text-anchor="middle">40</text><text transform="translate(8.8 43.4) rotate(-90)" x="0" y="0" text-anchor="middle">42</text><text transform="translate(8.8 22.9) rotate(-90)" x="0" y="0" text-anchor="middle">44</text><text transform="translate(8.8 2.4) rotate(-90)" x="0" y="0" text-anchor="middle">46</text></g>
<path d="M13 150.0V162.0L19 156.0Z" fill="#000"/></svg>
<svg class="a" style="left:95px;top:155px;overflow:hidden" width="1043" height="577" viewBox="0 0 1043 577"><rect x="0" y="0" width="1043" height="577" fill="#000"/>
<path d="M51.5 0V577M154.5 0V577M256.5 0V577M359.5 0V577M461.5 0V577M564.5 0V577M666.5 0V577M769.5 0V577M871.5 0V577M974.5 0V577M0 474.5H1043M0 372.5H1043M0 269.5H1043M0 167.5H1043M0 64.5H1043" stroke="#1f1f1f" stroke-width="1" fill="none"/>
<path d="M0 567h1v1h-1zM0 556h1v1h-1zM0 546h1v1h-1zM0 536h1v1h-1zM0 526h1v1h-1zM0 515h1v1h-1zM0 505h1v1h-1zM0 495h1v1h-1zM0 485h1v1h-1zM0 474h1v1h-1zM0 464h1v1h-1zM0 454h1v1h-1zM0 444h1v1h-1zM0 433h1v1h-1zM0 423h1v1h-1zM0 413h1v1h-1zM0 403h1v1h-1zM0 392h1v1h-1zM0 382h1v1h-1zM0 372h1v1h-1zM0 362h1v1h-1zM0 351h1v1h-1zM0 341h1v1h-1zM0 331h1v1h-1zM0 321h1v1h-1zM0 310h1v1h-1zM0 300h1v1h-1zM0 290h1v1h-1zM0 280h1v1h-1zM0 269h1v1h-1zM0 259h1v1h-1zM0 249h1v1h-1zM0 239h1v1h-1zM0 228h1v1h-1zM0 218h1v1h-1zM0 208h1v1h-1zM0 198h1v1h-1zM0 187h1v1h-1zM0 177h1v1h-1zM0 167h1v1h-1zM0 157h1v1h-1zM0 146h1v1h-1zM0 136h1v1h-1zM0 126h1v1h-1zM0 116h1v1h-1zM0 105h1v1h-1zM0 95h1v1h-1zM0 85h1v1h-1zM0 75h1v1h-1zM0 64h1v1h-1zM0 54h1v1h-1zM0 44h1v1h-1zM0 34h1v1h-1zM0 23h1v1h-1zM0 13h1v1h-1zM0 3h1v1h-1zM10 567h1v1h-1zM10 556h1v1h-1zM10 546h1v1h-1zM10 536h1v1h-1zM10 526h1v1h-1zM10 515h1v1h-1zM10 505h1v1h-1zM10 495h1v1h-1zM10 485h1v1h-1zM10 474h1v1h-1zM10 464h1v1h-1zM10 454h1v1h-1zM10 444h1v1h-1zM10 433h1v1h-1zM10 423h1v1h-1zM10 413h1v1h-1zM10 403h1v1h-1zM10 392h1v1h-1zM10 382h1v1h-1zM10 372h1v1h-1zM10 362h1v1h-1zM10 351h1v1h-1zM10 341h1v1h-1zM10 331h1v1h-1zM10 321h1v1h-1zM10 310h1v1h-1zM10 300h1v1h-1zM10 290h1v1h-1zM10 280h1v1h-1zM10 269h1v1h-1zM10 259h1v1h-1zM10 249h1v1h-1zM10 239h1v1h-1zM10 228h1v1h-1zM10 218h1v1h-1zM10 208h1v1h-1zM10 198h1v1h-1zM10 187h1v1h-1zM10 177h1v1h-1zM10 167h1v1h-1zM10 157h1v1h-1zM10 146h1v1h-1zM10 136h1v1h-1zM10 126h1v1h-1zM10 116h1v1h-1zM10 105h1v1h-1zM10 95h1v1h-1zM10 85h1v1h-1zM10 75h1v1h-1zM10 64h1v1h-1zM10 54h1v1h-1zM10 44h1v1h-1zM10 34h1v1h-1zM10 23h1v1h-1zM10 13h1v1h-1zM10 3h1v1h-1zM20 567h1v1h-1zM20 556h1v1h-1zM20 546h1v1h-1zM20 536h1v1h-1zM20 526h1v1h-1zM20 515h1v1h-1zM20 505h1v1h-1zM20 495h1v1h-1zM20 485h1v1h-1zM20 474h1v1h-1zM20 464h1v1h-1zM20 454h1v1h-1zM20 444h1v1h-1zM20 433h1v1h-1zM20 423h1v1h-1zM20 413h1v1h-1zM20 403h1v1h-1zM20 392h1v1h-1zM20 382h1v1h-1zM20 372h1v1h-1zM20 362h1v1h-1zM20 351h1v1h-1zM20 341h1v1h-1zM20 331h1v1h-1zM20 321h1v1h-1zM20 310h1v1h-1zM20 300h1v1h-1zM20 290h1v1h-1zM20 280h1v1h-1zM20 269h1v1h-1zM20 259h1v1h-1zM20 249h1v1h-1zM20 239h1v1h-1zM20 228h1v1h-1zM20 218h1v1h-1zM20 208h1v1h-1zM20 198h1v1h-1zM20 187h1v1h-1zM20 177h1v1h-1zM20 167h1v1h-1zM20 157h1v1h-1zM20 146h1v1h-1zM20 136h1v1h-1zM20 126h1v1h-1zM20 116h1v1h-1zM20 105h1v1h-1zM20 95h1v1h-1zM20 85h1v1h-1zM20 75h1v1h-1zM20 64h1v1h-1zM20 54h1v1h-1zM20 44h1v1h-1zM20 34h1v1h-1zM20 23h1v1h-1zM20 13h1v1h-1zM20 3h1v1h-1zM31 567h1v1h-1zM31 556h1v1h-1zM31 546h1v1h-1zM31 536h1v1h-1zM31 526h1v1h-1zM31 515h1v1h-1zM31 505h1v1h-1zM31 495h1v1h-1zM31 485h1v1h-1zM31 474h1v1h-1zM31 464h1v1h-1zM31 454h1v1h-1zM31 444h1v1h-1zM31 433h1v1h-1zM31 423h1v1h-1zM31 413h1v1h-1zM31 403h1v1h-1zM31 392h1v1h-1zM31 382h1v1h-1zM31 372h1v1h-1zM31 362h1v1h-1zM31 351h1v1h-1zM31 341h1v1h-1zM31 331h1v1h-1zM31 321h1v1h-1zM31 310h1v1h-1zM31 300h1v1h-1zM31 290h1v1h-1zM31 280h1v1h-1zM31 269h1v1h-1zM31 259h1v1h-1zM31 249h1v1h-1zM31 239h1v1h-1zM31 228h1v1h-1zM31 218h1v1h-1zM31 208h1v1h-1zM31 198h1v1h-1zM31 187h1v1h-1zM31 177h1v1h-1zM31 167h1v1h-1zM31 157h1v1h-1zM31 146h1v1h-1zM31 136h1v1h-1zM31 126h1v1h-1zM31 116h1v1h-1zM31 105h1v1h-1zM31 95h1v1h-1zM31 85h1v1h-1zM31 75h1v1h-1zM31 64h1v1h-1zM31 54h1v1h-1zM31 44h1v1h-1zM31 34h1v1h-1zM31 23h1v1h-1zM31 13h1v1h-1zM31 3h1v1h-1zM41 567h1v1h-1zM41 556h1v1h-1zM41 546h1v1h-1zM41 536h1v1h-1zM41 526h1v1h-1zM41 515h1v1h-1zM41 505h1v1h-1zM41 495h1v1h-1zM41 485h1v1h-1zM41 474h1v1h-1zM41 464h1v1h-1zM41 454h1v1h-1zM41 444h1v1h-1zM41 433h1v1h-1zM41 423h1v1h-1zM41 413h1v1h-1zM41 403h1v1h-1zM41 392h1v1h-1zM41 382h1v1h-1zM41 372h1v1h-1zM41 362h1v1h-1zM41 351h1v1h-1zM41 341h1v1h-1zM41 331h1v1h-1zM41 321h1v1h-1zM41 310h1v1h-1zM41 300h1v1h-1zM41 290h1v1h-1zM41 280h1v1h-1zM41 269h1v1h-1zM41 259h1v1h-1zM41 249h1v1h-1zM41 239h1v1h-1zM41 228h1v1h-1zM41 218h1v1h-1zM41 208h1v1h-1zM41 198h1v1h-1zM41 187h1v1h-1zM41 177h1v1h-1zM41 167h1v1h-1zM41 157h1v1h-1zM41 146h1v1h-1zM41 136h1v1h-1zM41 126h1v1h-1zM41 116h1v1h-1zM41 105h1v1h-1zM41 95h1v1h-1zM41 85h1v1h-1zM41 75h1v1h-1zM41 64h1v1h-1zM41 54h1v1h-1zM41 44h1v1h-1zM41 34h1v1h-1zM41 23h1v1h-1zM41 13h1v1h-1zM41 3h1v1h-1zM51 567h1v1h-1zM51 556h1v1h-1zM51 546h1v1h-1zM51 536h1v1h-1zM51 526h1v1h-1zM51 515h1v1h-1zM51 505h1v1h-1zM51 495h1v1h-1zM51 485h1v1h-1zM51 474h1v1h-1zM51 464h1v1h-1zM51 454h1v1h-1zM51 444h1v1h-1zM51 433h1v1h-1zM51 423h1v1h-1zM51 413h1v1h-1zM51 403h1v1h-1zM51 392h1v1h-1zM51 382h1v1h-1zM51 372h1v1h-1zM51 362h1v1h-1zM51 351h1v1h-1zM51 341h1v1h-1zM51 331h1v1h-1zM51 321h1v1h-1zM51 310h1v1h-1zM51 300h1v1h-1zM51 290h1v1h-1zM51 280h1v1h-1zM51 269h1v1h-1zM51 259h1v1h-1zM51 249h1v1h-1zM51 239h1v1h-1zM51 228h1v1h-1zM51 218h1v1h-1zM51 208h1v1h-1zM51 198h1v1h-1zM51 187h1v1h-1zM51 177h1v1h-1zM51 167h1v1h-1zM51 157h1v1h-1zM51 146h1v1h-1zM51 136h1v1h-1zM51 126h1v1h-1zM51 116h1v1h-1zM51 105h1v1h-1zM51 95h1v1h-1zM51 85h1v1h-1zM51 75h1v1h-1zM51 64h1v1h-1zM51 54h1v1h-1zM51 44h1v1h-1zM51 34h1v1h-1zM51 23h1v1h-1zM51 13h1v1h-1zM51 3h1v1h-1zM61 567h1v1h-1zM61 556h1v1h-1zM61 546h1v1h-1zM61 536h1v1h-1zM61 526h1v1h-1zM61 515h1v1h-1zM61 505h1v1h-1zM61 495h1v1h-1zM61 485h1v1h-1zM61 474h1v1h-1zM61 464h1v1h-1zM61 454h1v1h-1zM61 444h1v1h-1zM61 433h1v1h-1zM61 423h1v1h-1zM61 413h1v1h-1zM61 403h1v1h-1zM61 392h1v1h-1zM61 382h1v1h-1zM61 372h1v1h-1zM61 362h1v1h-1zM61 351h1v1h-1zM61 341h1v1h-1zM61 331h1v1h-1zM61 321h1v1h-1zM61 310h1v1h-1zM61 300h1v1h-1zM61 290h1v1h-1zM61 280h1v1h-1zM61 269h1v1h-1zM61 259h1v1h-1zM61 249h1v1h-1zM61 239h1v1h-1zM61 228h1v1h-1zM61 218h1v1h-1zM61 208h1v1h-1zM61 198h1v1h-1zM61 187h1v1h-1zM61 177h1v1h-1zM61 167h1v1h-1zM61 157h1v1h-1zM61 146h1v1h-1zM61 136h1v1h-1zM61 126h1v1h-1zM61 116h1v1h-1zM61 105h1v1h-1zM61 95h1v1h-1zM61 85h1v1h-1zM61 75h1v1h-1zM61 64h1v1h-1zM61 54h1v1h-1zM61 44h1v1h-1zM61 34h1v1h-1zM61 23h1v1h-1zM61 13h1v1h-1zM61 3h1v1h-1zM72 567h1v1h-1zM72 556h1v1h-1zM72 546h1v1h-1zM72 536h1v1h-1zM72 526h1v1h-1zM72 515h1v1h-1zM72 505h1v1h-1zM72 495h1v1h-1zM72 485h1v1h-1zM72 474h1v1h-1zM72 464h1v1h-1zM72 454h1v1h-1zM72 444h1v1h-1zM72 433h1v1h-1zM72 423h1v1h-1zM72 413h1v1h-1zM72 403h1v1h-1zM72 392h1v1h-1zM72 382h1v1h-1zM72 372h1v1h-1zM72 362h1v1h-1zM72 351h1v1h-1zM72 341h1v1h-1zM72 331h1v1h-1zM72 321h1v1h-1zM72 310h1v1h-1zM72 300h1v1h-1zM72 290h1v1h-1zM72 280h1v1h-1zM72 269h1v1h-1zM72 259h1v1h-1zM72 249h1v1h-1zM72 239h1v1h-1zM72 228h1v1h-1zM72 218h1v1h-1zM72 208h1v1h-1zM72 198h1v1h-1zM72 187h1v1h-1zM72 177h1v1h-1zM72 167h1v1h-1zM72 157h1v1h-1zM72 146h1v1h-1zM72 136h1v1h-1zM72 126h1v1h-1zM72 116h1v1h-1zM72 105h1v1h-1zM72 95h1v1h-1zM72 85h1v1h-1zM72 75h1v1h-1zM72 64h1v1h-1zM72 54h1v1h-1zM72 44h1v1h-1zM72 34h1v1h-1zM72 23h1v1h-1zM72 13h1v1h-1zM72 3h1v1h-1zM82 567h1v1h-1zM82 556h1v1h-1zM82 546h1v1h-1zM82 536h1v1h-1zM82 526h1v1h-1zM82 515h1v1h-1zM82 505h1v1h-1zM82 495h1v1h-1zM82 485h1v1h-1zM82 474h1v1h-1zM82 464h1v1h-1zM82 454h1v1h-1zM82 444h1v1h-1zM82 433h1v1h-1zM82 423h1v1h-1zM82 413h1v1h-1zM82 403h1v1h-1zM82 392h1v1h-1zM82 382h1v1h-1zM82 372h1v1h-1zM82 362h1v1h-1zM82 351h1v1h-1zM82 341h1v1h-1zM82 331h1v1h-1zM82 321h1v1h-1zM82 310h1v1h-1zM82 300h1v1h-1zM82 290h1v1h-1zM82 280h1v1h-1zM82 269h1v1h-1zM82 259h1v1h-1zM82 249h1v1h-1zM82 239h1v1h-1zM82 228h1v1h-1zM82 218h1v1h-1zM82 208h1v1h-1zM82 198h1v1h-1zM82 187h1v1h-1zM82 177h1v1h-1zM82 167h1v1h-1zM82 157h1v1h-1zM82 146h1v1h-1zM82 136h1v1h-1zM82 126h1v1h-1zM82 116h1v1h-1zM82 105h1v1h-1zM82 95h1v1h-1zM82 85h1v1h-1zM82 75h1v1h-1zM82 64h1v1h-1zM82 54h1v1h-1zM82 44h1v1h-1zM82 34h1v1h-1zM82 23h1v1h-1zM82 13h1v1h-1zM82 3h1v1h-1zM92 567h1v1h-1zM92 556h1v1h-1zM92 546h1v1h-1zM92 536h1v1h-1zM92 526h1v1h-1zM92 515h1v1h-1zM92 505h1v1h-1zM92 495h1v1h-1zM92 485h1v1h-1zM92 474h1v1h-1zM92 464h1v1h-1zM92 454h1v1h-1zM92 444h1v1h-1zM92 433h1v1h-1zM92 423h1v1h-1zM92 413h1v1h-1zM92 403h1v1h-1zM92 392h1v1h-1zM92 382h1v1h-1zM92 372h1v1h-1zM92 362h1v1h-1zM92 351h1v1h-1zM92 341h1v1h-1zM92 331h1v1h-1zM92 321h1v1h-1zM92 310h1v1h-1zM92 300h1v1h-1zM92 290h1v1h-1zM92 280h1v1h-1zM92 269h1v1h-1zM92 259h1v1h-1zM92 249h1v1h-1zM92 239h1v1h-1zM92 228h1v1h-1zM92 218h1v1h-1zM92 208h1v1h-1zM92 198h1v1h-1zM92 187h1v1h-1zM92 177h1v1h-1zM92 167h1v1h-1zM92 157h1v1h-1zM92 146h1v1h-1zM92 136h1v1h-1zM92 126h1v1h-1zM92 116h1v1h-1zM92 105h1v1h-1zM92 95h1v1h-1zM92 85h1v1h-1zM92 75h1v1h-1zM92 64h1v1h-1zM92 54h1v1h-1zM92 44h1v1h-1zM92 34h1v1h-1zM92 23h1v1h-1zM92 13h1v1h-1zM92 3h1v1h-1zM102 567h1v1h-1zM102 556h1v1h-1zM102 546h1v1h-1zM102 536h1v1h-1zM102 526h1v1h-1zM102 515h1v1h-1zM102 505h1v1h-1zM102 495h1v1h-1zM102 485h1v1h-1zM102 474h1v1h-1zM102 464h1v1h-1zM102 454h1v1h-1zM102 444h1v1h-1zM102 433h1v1h-1zM102 423h1v1h-1zM102 413h1v1h-1zM102 403h1v1h-1zM102 392h1v1h-1zM102 382h1v1h-1zM102 372h1v1h-1zM102 362h1v1h-1zM102 351h1v1h-1zM102 341h1v1h-1zM102 331h1v1h-1zM102 321h1v1h-1zM102 310h1v1h-1zM102 300h1v1h-1zM102 290h1v1h-1zM102 280h1v1h-1zM102 269h1v1h-1zM102 259h1v1h-1zM102 249h1v1h-1zM102 239h1v1h-1zM102 228h1v1h-1zM102 218h1v1h-1zM102 208h1v1h-1zM102 198h1v1h-1zM102 187h1v1h-1zM102 177h1v1h-1zM102 167h1v1h-1zM102 157h1v1h-1zM102 146h1v1h-1zM102 136h1v1h-1zM102 126h1v1h-1zM102 116h1v1h-1zM102 105h1v1h-1zM102 95h1v1h-1zM102 85h1v1h-1zM102 75h1v1h-1zM102 64h1v1h-1zM102 54h1v1h-1zM102 44h1v1h-1zM102 34h1v1h-1zM102 23h1v1h-1zM102 13h1v1h-1zM102 3h1v1h-1zM113 567h1v1h-1zM113 556h1v1h-1zM113 546h1v1h-1zM113 536h1v1h-1zM113 526h1v1h-1zM113 515h1v1h-1zM113 505h1v1h-1zM113 495h1v1h-1zM113 485h1v1h-1zM113 474h1v1h-1zM113 464h1v1h-1zM113 454h1v1h-1zM113 444h1v1h-1zM113 433h1v1h-1zM113 423h1v1h-1zM113 413h1v1h-1zM113 403h1v1h-1zM113 392h1v1h-1zM113 382h1v1h-1zM113 372h1v1h-1zM113 362h1v1h-1zM113 351h1v1h-1zM113 341h1v1h-1zM113 331h1v1h-1zM113 321h1v1h-1zM113 310h1v1h-1zM113 300h1v1h-1zM113 290h1v1h-1zM113 280h1v1h-1zM113 269h1v1h-1zM113 259h1v1h-1zM113 249h1v1h-1zM113 239h1v1h-1zM113 228h1v1h-1zM113 218h1v1h-1zM113 208h1v1h-1zM113 198h1v1h-1zM113 187h1v1h-1zM113 177h1v1h-1zM113 167h1v1h-1zM113 157h1v1h-1zM113 146h1v1h-1zM113 136h1v1h-1zM113 126h1v1h-1zM113 116h1v1h-1zM113 105h1v1h-1zM113 95h1v1h-1zM113 85h1v1h-1zM113 75h1v1h-1zM113 64h1v1h-1zM113 54h1v1h-1zM113 44h1v1h-1zM113 34h1v1h-1zM113 23h1v1h-1zM113 13h1v1h-1zM113 3h1v1h-1zM123 567h1v1h-1zM123 556h1v1h-1zM123 546h1v1h-1zM123 536h1v1h-1zM123 526h1v1h-1zM123 515h1v1h-1zM123 505h1v1h-1zM123 495h1v1h-1zM123 485h1v1h-1zM123 474h1v1h-1zM123 464h1v1h-1zM123 454h1v1h-1zM123 444h1v1h-1zM123 433h1v1h-1zM123 423h1v1h-1zM123 413h1v1h-1zM123 403h1v1h-1zM123 392h1v1h-1zM123 382h1v1h-1zM123 372h1v1h-1zM123 362h1v1h-1zM123 351h1v1h-1zM123 341h1v1h-1zM123 331h1v1h-1zM123 321h1v1h-1zM123 310h1v1h-1zM123 300h1v1h-1zM123 290h1v1h-1zM123 280h1v1h-1zM123 269h1v1h-1zM123 259h1v1h-1zM123 249h1v1h-1zM123 239h1v1h-1zM123 228h1v1h-1zM123 218h1v1h-1zM123 208h1v1h-1zM123 198h1v1h-1zM123 187h1v1h-1zM123 177h1v1h-1zM123 167h1v1h-1zM123 157h1v1h-1zM123 146h1v1h-1zM123 136h1v1h-1zM123 126h1v1h-1zM123 116h1v1h-1zM123 105h1v1h-1zM123 95h1v1h-1zM123 85h1v1h-1zM123 75h1v1h-1zM123 64h1v1h-1zM123 54h1v1h-1zM123 44h1v1h-1zM123 34h1v1h-1zM123 23h1v1h-1zM123 13h1v1h-1zM123 3h1v1h-1zM133 567h1v1h-1zM133 556h1v1h-1zM133 546h1v1h-1zM133 536h1v1h-1zM133 526h1v1h-1zM133 515h1v1h-1zM133 505h1v1h-1zM133 495h1v1h-1zM133 485h1v1h-1zM133 474h1v1h-1zM133 464h1v1h-1zM133 454h1v1h-1zM133 444h1v1h-1zM133 433h1v1h-1zM133 423h1v1h-1zM133 413h1v1h-1zM133 403h1v1h-1zM133 392h1v1h-1zM133 382h1v1h-1zM133 372h1v1h-1zM133 362h1v1h-1zM133 351h1v1h-1zM133 341h1v1h-1zM133 331h1v1h-1zM133 321h1v1h-1zM133 310h1v1h-1zM133 300h1v1h-1zM133 290h1v1h-1zM133 280h1v1h-1zM133 269h1v1h-1zM133 259h1v1h-1zM133 249h1v1h-1zM133 239h1v1h-1zM133 228h1v1h-1zM133 218h1v1h-1zM133 208h1v1h-1zM133 198h1v1h-1zM133 187h1v1h-1zM133 177h1v1h-1zM133 167h1v1h-1zM133 157h1v1h-1zM133 146h1v1h-1zM133 136h1v1h-1zM133 126h1v1h-1zM133 116h1v1h-1zM133 105h1v1h-1zM133 95h1v1h-1zM133 85h1v1h-1zM133 75h1v1h-1zM133 64h1v1h-1zM133 54h1v1h-1zM133 44h1v1h-1zM133 34h1v1h-1zM133 23h1v1h-1zM133 13h1v1h-1zM133 3h1v1h-1zM143 567h1v1h-1zM143 556h1v1h-1zM143 546h1v1h-1zM143 536h1v1h-1zM143 526h1v1h-1zM143 515h1v1h-1zM143 505h1v1h-1zM143 495h1v1h-1zM143 485h1v1h-1zM143 474h1v1h-1zM143 464h1v1h-1zM143 454h1v1h-1zM143 444h1v1h-1zM143 433h1v1h-1zM143 423h1v1h-1zM143 413h1v1h-1zM143 403h1v1h-1zM143 392h1v1h-1zM143 382h1v1h-1zM143 372h1v1h-1zM143 362h1v1h-1zM143 351h1v1h-1zM143 341h1v1h-1zM143 331h1v1h-1zM143 321h1v1h-1zM143 310h1v1h-1zM143 300h1v1h-1zM143 290h1v1h-1zM143 280h1v1h-1zM143 269h1v1h-1zM143 259h1v1h-1zM143 249h1v1h-1zM143 239h1v1h-1zM143 228h1v1h-1zM143 218h1v1h-1zM143 208h1v1h-1zM143 198h1v1h-1zM143 187h1v1h-1zM143 177h1v1h-1zM143 167h1v1h-1zM143 157h1v1h-1zM143 146h1v1h-1zM143 136h1v1h-1zM143 126h1v1h-1zM143 116h1v1h-1zM143 105h1v1h-1zM143 95h1v1h-1zM143 85h1v1h-1zM143 75h1v1h-1zM143 64h1v1h-1zM143 54h1v1h-1zM143 44h1v1h-1zM143 34h1v1h-1zM143 23h1v1h-1zM143 13h1v1h-1zM143 3h1v1h-1zM154 567h1v1h-1zM154 556h1v1h-1zM154 546h1v1h-1zM154 536h1v1h-1zM154 526h1v1h-1zM154 515h1v1h-1zM154 505h1v1h-1zM154 495h1v1h-1zM154 485h1v1h-1zM154 474h1v1h-1zM154 464h1v1h-1zM154 454h1v1h-1zM154 444h1v1h-1zM154 433h1v1h-1zM154 423h1v1h-1zM154 413h1v1h-1zM154 403h1v1h-1zM154 392h1v1h-1zM154 382h1v1h-1zM154 372h1v1h-1zM154 362h1v1h-1zM154 351h1v1h-1zM154 341h1v1h-1zM154 331h1v1h-1zM154 321h1v1h-1zM154 310h1v1h-1zM154 300h1v1h-1zM154 290h1v1h-1zM154 280h1v1h-1zM154 269h1v1h-1zM154 259h1v1h-1zM154 249h1v1h-1zM154 239h1v1h-1zM154 228h1v1h-1zM154 218h1v1h-1zM154 208h1v1h-1zM154 198h1v1h-1zM154 187h1v1h-1zM154 177h1v1h-1zM154 167h1v1h-1zM154 157h1v1h-1zM154 146h1v1h-1zM154 136h1v1h-1zM154 126h1v1h-1zM154 116h1v1h-1zM154 105h1v1h-1zM154 95h1v1h-1zM154 85h1v1h-1zM154 75h1v1h-1zM154 64h1v1h-1zM154 54h1v1h-1zM154 44h1v1h-1zM154 34h1v1h-1zM154 23h1v1h-1zM154 13h1v1h-1zM154 3h1v1h-1zM164 567h1v1h-1zM164 556h1v1h-1zM164 546h1v1h-1zM164 536h1v1h-1zM164 526h1v1h-1zM164 515h1v1h-1zM164 505h1v1h-1zM164 495h1v1h-1zM164 485h1v1h-1zM164 474h1v1h-1zM164 464h1v1h-1zM164 454h1v1h-1zM164 444h1v1h-1zM164 433h1v1h-1zM164 423h1v1h-1zM164 413h1v1h-1zM164 403h1v1h-1zM164 392h1v1h-1zM164 382h1v1h-1zM164 372h1v1h-1zM164 362h1v1h-1zM164 351h1v1h-1zM164 341h1v1h-1zM164 331h1v1h-1zM164 321h1v1h-1zM164 310h1v1h-1zM164 300h1v1h-1zM164 290h1v1h-1zM164 280h1v1h-1zM164 269h1v1h-1zM164 259h1v1h-1zM164 249h1v1h-1zM164 239h1v1h-1zM164 228h1v1h-1zM164 218h1v1h-1zM164 208h1v1h-1zM164 198h1v1h-1zM164 187h1v1h-1zM164 177h1v1h-1zM164 167h1v1h-1zM164 157h1v1h-1zM164 146h1v1h-1zM164 136h1v1h-1zM164 126h1v1h-1zM164 116h1v1h-1zM164 105h1v1h-1zM164 95h1v1h-1zM164 85h1v1h-1zM164 75h1v1h-1zM164 64h1v1h-1zM164 54h1v1h-1zM164 44h1v1h-1zM164 34h1v1h-1zM164 23h1v1h-1zM164 13h1v1h-1zM164 3h1v1h-1zM174 567h1v1h-1zM174 556h1v1h-1zM174 546h1v1h-1zM174 536h1v1h-1zM174 526h1v1h-1zM174 515h1v1h-1zM174 505h1v1h-1zM174 495h1v1h-1zM174 485h1v1h-1zM174 474h1v1h-1zM174 464h1v1h-1zM174 454h1v1h-1zM174 444h1v1h-1zM174 433h1v1h-1zM174 423h1v1h-1zM174 413h1v1h-1zM174 403h1v1h-1zM174 392h1v1h-1zM174 382h1v1h-1zM174 372h1v1h-1zM174 362h1v1h-1zM174 351h1v1h-1zM174 341h1v1h-1zM174 331h1v1h-1zM174 321h1v1h-1zM174 310h1v1h-1zM174 300h1v1h-1zM174 290h1v1h-1zM174 280h1v1h-1zM174 269h1v1h-1zM174 259h1v1h-1zM174 249h1v1h-1zM174 239h1v1h-1zM174 228h1v1h-1zM174 218h1v1h-1zM174 208h1v1h-1zM174 198h1v1h-1zM174 187h1v1h-1zM174 177h1v1h-1zM174 167h1v1h-1zM174 157h1v1h-1zM174 146h1v1h-1zM174 136h1v1h-1zM174 126h1v1h-1zM174 116h1v1h-1zM174 105h1v1h-1zM174 95h1v1h-1zM174 85h1v1h-1zM174 75h1v1h-1zM174 64h1v1h-1zM174 54h1v1h-1zM174 44h1v1h-1zM174 34h1v1h-1zM174 23h1v1h-1zM174 13h1v1h-1zM174 3h1v1h-1zM184 567h1v1h-1zM184 556h1v1h-1zM184 546h1v1h-1zM184 536h1v1h-1zM184 526h1v1h-1zM184 515h1v1h-1zM184 505h1v1h-1zM184 495h1v1h-1zM184 485h1v1h-1zM184 474h1v1h-1zM184 464h1v1h-1zM184 454h1v1h-1zM184 444h1v1h-1zM184 433h1v1h-1zM184 423h1v1h-1zM184 413h1v1h-1zM184 403h1v1h-1zM184 392h1v1h-1zM184 382h1v1h-1zM184 372h1v1h-1zM184 362h1v1h-1zM184 351h1v1h-1zM184 341h1v1h-1zM184 331h1v1h-1zM184 321h1v1h-1zM184 310h1v1h-1zM184 300h1v1h-1zM184 290h1v1h-1zM184 280h1v1h-1zM184 269h1v1h-1zM184 259h1v1h-1zM184 249h1v1h-1zM184 239h1v1h-1zM184 228h1v1h-1zM184 218h1v1h-1zM184 208h1v1h-1zM184 198h1v1h-1zM184 187h1v1h-1zM184 177h1v1h-1zM184 167h1v1h-1zM184 157h1v1h-1zM184 146h1v1h-1zM184 136h1v1h-1zM184 126h1v1h-1zM184 116h1v1h-1zM184 105h1v1h-1zM184 95h1v1h-1zM184 85h1v1h-1zM184 75h1v1h-1zM184 64h1v1h-1zM184 54h1v1h-1zM184 44h1v1h-1zM184 34h1v1h-1zM184 23h1v1h-1zM184 13h1v1h-1zM184 3h1v1h-1zM195 567h1v1h-1zM195 556h1v1h-1zM195 546h1v1h-1zM195 536h1v1h-1zM195 526h1v1h-1zM195 515h1v1h-1zM195 505h1v1h-1zM195 495h1v1h-1zM195 485h1v1h-1zM195 474h1v1h-1zM195 464h1v1h-1zM195 454h1v1h-1zM195 444h1v1h-1zM195 433h1v1h-1zM195 423h1v1h-1zM195 413h1v1h-1zM195 403h1v1h-1zM195 392h1v1h-1zM195 382h1v1h-1zM195 372h1v1h-1zM195 362h1v1h-1zM195 351h1v1h-1zM195 341h1v1h-1zM195 331h1v1h-1zM195 321h1v1h-1zM195 310h1v1h-1zM195 300h1v1h-1zM195 290h1v1h-1zM195 280h1v1h-1zM195 269h1v1h-1zM195 259h1v1h-1zM195 249h1v1h-1zM195 239h1v1h-1zM195 228h1v1h-1zM195 218h1v1h-1zM195 208h1v1h-1zM195 198h1v1h-1zM195 187h1v1h-1zM195 177h1v1h-1zM195 167h1v1h-1zM195 157h1v1h-1zM195 146h1v1h-1zM195 136h1v1h-1zM195 126h1v1h-1zM195 116h1v1h-1zM195 105h1v1h-1zM195 95h1v1h-1zM195 85h1v1h-1zM195 75h1v1h-1zM195 64h1v1h-1zM195 54h1v1h-1zM195 44h1v1h-1zM195 34h1v1h-1zM195 23h1v1h-1zM195 13h1v1h-1zM195 3h1v1h-1zM205 567h1v1h-1zM205 556h1v1h-1zM205 546h1v1h-1zM205 536h1v1h-1zM205 526h1v1h-1zM205 515h1v1h-1zM205 505h1v1h-1zM205 495h1v1h-1zM205 485h1v1h-1zM205 474h1v1h-1zM205 464h1v1h-1zM205 454h1v1h-1zM205 444h1v1h-1zM205 433h1v1h-1zM205 423h1v1h-1zM205 413h1v1h-1zM205 403h1v1h-1zM205 392h1v1h-1zM205 382h1v1h-1zM205 372h1v1h-1zM205 362h1v1h-1zM205 351h1v1h-1zM205 341h1v1h-1zM205 331h1v1h-1zM205 321h1v1h-1zM205 310h1v1h-1zM205 300h1v1h-1zM205 290h1v1h-1zM205 280h1v1h-1zM205 269h1v1h-1zM205 259h1v1h-1zM205 249h1v1h-1zM205 239h1v1h-1zM205 228h1v1h-1zM205 218h1v1h-1zM205 208h1v1h-1zM205 198h1v1h-1zM205 187h1v1h-1zM205 177h1v1h-1zM205 167h1v1h-1zM205 157h1v1h-1zM205 146h1v1h-1zM205 136h1v1h-1zM205 126h1v1h-1zM205 116h1v1h-1zM205 105h1v1h-1zM205 95h1v1h-1zM205 85h1v1h-1zM205 75h1v1h-1zM205 64h1v1h-1zM205 54h1v1h-1zM205 44h1v1h-1zM205 34h1v1h-1zM205 23h1v1h-1zM205 13h1v1h-1zM205 3h1v1h-1zM215 567h1v1h-1zM215 556h1v1h-1zM215 546h1v1h-1zM215 536h1v1h-1zM215 526h1v1h-1zM215 515h1v1h-1zM215 505h1v1h-1zM215 495h1v1h-1zM215 485h1v1h-1zM215 474h1v1h-1zM215 464h1v1h-1zM215 454h1v1h-1zM215 444h1v1h-1zM215 433h1v1h-1zM215 423h1v1h-1zM215 413h1v1h-1zM215 403h1v1h-1zM215 392h1v1h-1zM215 382h1v1h-1zM215 372h1v1h-1zM215 362h1v1h-1zM215 351h1v1h-1zM215 341h1v1h-1zM215 331h1v1h-1zM215 321h1v1h-1zM215 310h1v1h-1zM215 300h1v1h-1zM215 290h1v1h-1zM215 280h1v1h-1zM215 269h1v1h-1zM215 259h1v1h-1zM215 249h1v1h-1zM215 239h1v1h-1zM215 228h1v1h-1zM215 218h1v1h-1zM215 208h1v1h-1zM215 198h1v1h-1zM215 187h1v1h-1zM215 177h1v1h-1zM215 167h1v1h-1zM215 157h1v1h-1zM215 146h1v1h-1zM215 136h1v1h-1zM215 126h1v1h-1zM215 116h1v1h-1zM215 105h1v1h-1zM215 95h1v1h-1zM215 85h1v1h-1zM215 75h1v1h-1zM215 64h1v1h-1zM215 54h1v1h-1zM215 44h1v1h-1zM215 34h1v1h-1zM215 23h1v1h-1zM215 13h1v1h-1zM215 3h1v1h-1zM225 567h1v1h-1zM225 556h1v1h-1zM225 546h1v1h-1zM225 536h1v1h-1zM225 526h1v1h-1zM225 515h1v1h-1zM225 505h1v1h-1zM225 495h1v1h-1zM225 485h1v1h-1zM225 474h1v1h-1zM225 464h1v1h-1zM225 454h1v1h-1zM225 444h1v1h-1zM225 433h1v1h-1zM225 423h1v1h-1zM225 413h1v1h-1zM225 403h1v1h-1zM225 392h1v1h-1zM225 382h1v1h-1zM225 372h1v1h-1zM225 362h1v1h-1zM225 351h1v1h-1zM225 341h1v1h-1zM225 331h1v1h-1zM225 321h1v1h-1zM225 310h1v1h-1zM225 300h1v1h-1zM225 290h1v1h-1zM225 280h1v1h-1zM225 269h1v1h-1zM225 259h1v1h-1zM225 249h1v1h-1zM225 239h1v1h-1zM225 228h1v1h-1zM225 218h1v1h-1zM225 208h1v1h-1zM225 198h1v1h-1zM225 187h1v1h-1zM225 177h1v1h-1zM225 167h1v1h-1zM225 157h1v1h-1zM225 146h1v1h-1zM225 136h1v1h-1zM225 126h1v1h-1zM225 116h1v1h-1zM225 105h1v1h-1zM225 95h1v1h-1zM225 85h1v1h-1zM225 75h1v1h-1zM225 64h1v1h-1zM225 54h1v1h-1zM225 44h1v1h-1zM225 34h1v1h-1zM225 23h1v1h-1zM225 13h1v1h-1zM225 3h1v1h-1zM236 567h1v1h-1zM236 556h1v1h-1zM236 546h1v1h-1zM236 536h1v1h-1zM236 526h1v1h-1zM236 515h1v1h-1zM236 505h1v1h-1zM236 495h1v1h-1zM236 485h1v1h-1zM236 474h1v1h-1zM236 464h1v1h-1zM236 454h1v1h-1zM236 444h1v1h-1zM236 433h1v1h-1zM236 423h1v1h-1zM236 413h1v1h-1zM236 403h1v1h-1zM236 392h1v1h-1zM236 382h1v1h-1zM236 372h1v1h-1zM236 362h1v1h-1zM236 351h1v1h-1zM236 341h1v1h-1zM236 331h1v1h-1zM236 321h1v1h-1zM236 310h1v1h-1zM236 300h1v1h-1zM236 290h1v1h-1zM236 280h1v1h-1zM236 269h1v1h-1zM236 259h1v1h-1zM236 249h1v1h-1zM236 239h1v1h-1zM236 228h1v1h-1zM236 218h1v1h-1zM236 208h1v1h-1zM236 198h1v1h-1zM236 187h1v1h-1zM236 177h1v1h-1zM236 167h1v1h-1zM236 157h1v1h-1zM236 146h1v1h-1zM236 136h1v1h-1zM236 126h1v1h-1zM236 116h1v1h-1zM236 105h1v1h-1zM236 95h1v1h-1zM236 85h1v1h-1zM236 75h1v1h-1zM236 64h1v1h-1zM236 54h1v1h-1zM236 44h1v1h-1zM236 34h1v1h-1zM236 23h1v1h-1zM236 13h1v1h-1zM236 3h1v1h-1zM246 567h1v1h-1zM246 556h1v1h-1zM246 546h1v1h-1zM246 536h1v1h-1zM246 526h1v1h-1zM246 515h1v1h-1zM246 505h1v1h-1zM246 495h1v1h-1zM246 485h1v1h-1zM246 474h1v1h-1zM246 464h1v1h-1zM246 454h1v1h-1zM246 444h1v1h-1zM246 433h1v1h-1zM246 423h1v1h-1zM246 413h1v1h-1zM246 403h1v1h-1zM246 392h1v1h-1zM246 382h1v1h-1zM246 372h1v1h-1zM246 362h1v1h-1zM246 351h1v1h-1zM246 341h1v1h-1zM246 331h1v1h-1zM246 321h1v1h-1zM246 310h1v1h-1zM246 300h1v1h-1zM246 290h1v1h-1zM246 280h1v1h-1zM246 269h1v1h-1zM246 259h1v1h-1zM246 249h1v1h-1zM246 239h1v1h-1zM246 228h1v1h-1zM246 218h1v1h-1zM246 208h1v1h-1zM246 198h1v1h-1zM246 187h1v1h-1zM246 177h1v1h-1zM246 167h1v1h-1zM246 157h1v1h-1zM246 146h1v1h-1zM246 136h1v1h-1zM246 126h1v1h-1zM246 116h1v1h-1zM246 105h1v1h-1zM246 95h1v1h-1zM246 85h1v1h-1zM246 75h1v1h-1zM246 64h1v1h-1zM246 54h1v1h-1zM246 44h1v1h-1zM246 34h1v1h-1zM246 23h1v1h-1zM246 13h1v1h-1zM246 3h1v1h-1zM256 567h1v1h-1zM256 556h1v1h-1zM256 546h1v1h-1zM256 536h1v1h-1zM256 526h1v1h-1zM256 515h1v1h-1zM256 505h1v1h-1zM256 495h1v1h-1zM256 485h1v1h-1zM256 474h1v1h-1zM256 464h1v1h-1zM256 454h1v1h-1zM256 444h1v1h-1zM256 433h1v1h-1zM256 423h1v1h-1zM256 413h1v1h-1zM256 403h1v1h-1zM256 392h1v1h-1zM256 382h1v1h-1zM256 372h1v1h-1zM256 362h1v1h-1zM256 351h1v1h-1zM256 341h1v1h-1zM256 331h1v1h-1zM256 321h1v1h-1zM256 310h1v1h-1zM256 300h1v1h-1zM256 290h1v1h-1zM256 280h1v1h-1zM256 269h1v1h-1zM256 259h1v1h-1zM256 249h1v1h-1zM256 239h1v1h-1zM256 228h1v1h-1zM256 218h1v1h-1zM256 208h1v1h-1zM256 198h1v1h-1zM256 187h1v1h-1zM256 177h1v1h-1zM256 167h1v1h-1zM256 157h1v1h-1zM256 146h1v1h-1zM256 136h1v1h-1zM256 126h1v1h-1zM256 116h1v1h-1zM256 105h1v1h-1zM256 95h1v1h-1zM256 85h1v1h-1zM256 75h1v1h-1zM256 64h1v1h-1zM256 54h1v1h-1zM256 44h1v1h-1zM256 34h1v1h-1zM256 23h1v1h-1zM256 13h1v1h-1zM256 3h1v1h-1zM266 567h1v1h-1zM266 556h1v1h-1zM266 546h1v1h-1zM266 536h1v1h-1zM266 526h1v1h-1zM266 515h1v1h-1zM266 505h1v1h-1zM266 495h1v1h-1zM266 485h1v1h-1zM266 474h1v1h-1zM266 464h1v1h-1zM266 454h1v1h-1zM266 444h1v1h-1zM266 433h1v1h-1zM266 423h1v1h-1zM266 413h1v1h-1zM266 403h1v1h-1zM266 392h1v1h-1zM266 382h1v1h-1zM266 372h1v1h-1zM266 362h1v1h-1zM266 351h1v1h-1zM266 341h1v1h-1zM266 331h1v1h-1zM266 321h1v1h-1zM266 310h1v1h-1zM266 300h1v1h-1zM266 290h1v1h-1zM266 280h1v1h-1zM266 269h1v1h-1zM266 259h1v1h-1zM266 249h1v1h-1zM266 239h1v1h-1zM266 228h1v1h-1zM266 218h1v1h-1zM266 208h1v1h-1zM266 198h1v1h-1zM266 187h1v1h-1zM266 177h1v1h-1zM266 167h1v1h-1zM266 157h1v1h-1zM266 146h1v1h-1zM266 136h1v1h-1zM266 126h1v1h-1zM266 116h1v1h-1zM266 105h1v1h-1zM266 95h1v1h-1zM266 85h1v1h-1zM266 75h1v1h-1zM266 64h1v1h-1zM266 54h1v1h-1zM266 44h1v1h-1zM266 34h1v1h-1zM266 23h1v1h-1zM266 13h1v1h-1zM266 3h1v1h-1zM277 567h1v1h-1zM277 556h1v1h-1zM277 546h1v1h-1zM277 536h1v1h-1zM277 526h1v1h-1zM277 515h1v1h-1zM277 505h1v1h-1zM277 495h1v1h-1zM277 485h1v1h-1zM277 474h1v1h-1zM277 464h1v1h-1zM277 454h1v1h-1zM277 444h1v1h-1zM277 433h1v1h-1zM277 423h1v1h-1zM277 413h1v1h-1zM277 403h1v1h-1zM277 392h1v1h-1zM277 382h1v1h-1zM277 372h1v1h-1zM277 362h1v1h-1zM277 351h1v1h-1zM277 341h1v1h-1zM277 331h1v1h-1zM277 321h1v1h-1zM277 310h1v1h-1zM277 300h1v1h-1zM277 290h1v1h-1zM277 280h1v1h-1zM277 269h1v1h-1zM277 259h1v1h-1zM277 249h1v1h-1zM277 239h1v1h-1zM277 228h1v1h-1zM277 218h1v1h-1zM277 208h1v1h-1zM277 198h1v1h-1zM277 187h1v1h-1zM277 177h1v1h-1zM277 167h1v1h-1zM277 157h1v1h-1zM277 146h1v1h-1zM277 136h1v1h-1zM277 126h1v1h-1zM277 116h1v1h-1zM277 105h1v1h-1zM277 95h1v1h-1zM277 85h1v1h-1zM277 75h1v1h-1zM277 64h1v1h-1zM277 54h1v1h-1zM277 44h1v1h-1zM277 34h1v1h-1zM277 23h1v1h-1zM277 13h1v1h-1zM277 3h1v1h-1zM287 567h1v1h-1zM287 556h1v1h-1zM287 546h1v1h-1zM287 536h1v1h-1zM287 526h1v1h-1zM287 515h1v1h-1zM287 505h1v1h-1zM287 495h1v1h-1zM287 485h1v1h-1zM287 474h1v1h-1zM287 464h1v1h-1zM287 454h1v1h-1zM287 444h1v1h-1zM287 433h1v1h-1zM287 423h1v1h-1zM287 413h1v1h-1zM287 403h1v1h-1zM287 392h1v1h-1zM287 382h1v1h-1zM287 372h1v1h-1zM287 362h1v1h-1zM287 351h1v1h-1zM287 341h1v1h-1zM287 331h1v1h-1zM287 321h1v1h-1zM287 310h1v1h-1zM287 300h1v1h-1zM287 290h1v1h-1zM287 280h1v1h-1zM287 269h1v1h-1zM287 259h1v1h-1zM287 249h1v1h-1zM287 239h1v1h-1zM287 228h1v1h-1zM287 218h1v1h-1zM287 208h1v1h-1zM287 198h1v1h-1zM287 187h1v1h-1zM287 177h1v1h-1zM287 167h1v1h-1zM287 157h1v1h-1zM287 146h1v1h-1zM287 136h1v1h-1zM287 126h1v1h-1zM287 116h1v1h-1zM287 105h1v1h-1zM287 95h1v1h-1zM287 85h1v1h-1zM287 75h1v1h-1zM287 64h1v1h-1zM287 54h1v1h-1zM287 44h1v1h-1zM287 34h1v1h-1zM287 23h1v1h-1zM287 13h1v1h-1zM287 3h1v1h-1zM297 567h1v1h-1zM297 556h1v1h-1zM297 546h1v1h-1zM297 536h1v1h-1zM297 526h1v1h-1zM297 515h1v1h-1zM297 505h1v1h-1zM297 495h1v1h-1zM297 485h1v1h-1zM297 474h1v1h-1zM297 464h1v1h-1zM297 454h1v1h-1zM297 444h1v1h-1zM297 433h1v1h-1zM297 423h1v1h-1zM297 413h1v1h-1zM297 403h1v1h-1zM297 392h1v1h-1zM297 382h1v1h-1zM297 372h1v1h-1zM297 362h1v1h-1zM297 351h1v1h-1zM297 341h1v1h-1zM297 331h1v1h-1zM297 321h1v1h-1zM297 310h1v1h-1zM297 300h1v1h-1zM297 290h1v1h-1zM297 280h1v1h-1zM297 269h1v1h-1zM297 259h1v1h-1zM297 249h1v1h-1zM297 239h1v1h-1zM297 228h1v1h-1zM297 218h1v1h-1zM297 208h1v1h-1zM297 198h1v1h-1zM297 187h1v1h-1zM297 177h1v1h-1zM297 167h1v1h-1zM297 157h1v1h-1zM297 146h1v1h-1zM297 136h1v1h-1zM297 126h1v1h-1zM297 116h1v1h-1zM297 105h1v1h-1zM297 95h1v1h-1zM297 85h1v1h-1zM297 75h1v1h-1zM297 64h1v1h-1zM297 54h1v1h-1zM297 44h1v1h-1zM297 34h1v1h-1zM297 23h1v1h-1zM297 13h1v1h-1zM297 3h1v1h-1zM307 567h1v1h-1zM307 556h1v1h-1zM307 546h1v1h-1zM307 536h1v1h-1zM307 526h1v1h-1zM307 515h1v1h-1zM307 505h1v1h-1zM307 495h1v1h-1zM307 485h1v1h-1zM307 474h1v1h-1zM307 464h1v1h-1zM307 454h1v1h-1zM307 444h1v1h-1zM307 433h1v1h-1zM307 423h1v1h-1zM307 413h1v1h-1zM307 403h1v1h-1zM307 392h1v1h-1zM307 382h1v1h-1zM307 372h1v1h-1zM307 362h1v1h-1zM307 351h1v1h-1zM307 341h1v1h-1zM307 331h1v1h-1zM307 321h1v1h-1zM307 310h1v1h-1zM307 300h1v1h-1zM307 290h1v1h-1zM307 280h1v1h-1zM307 269h1v1h-1zM307 259h1v1h-1zM307 249h1v1h-1zM307 239h1v1h-1zM307 228h1v1h-1zM307 218h1v1h-1zM307 208h1v1h-1zM307 198h1v1h-1zM307 187h1v1h-1zM307 177h1v1h-1zM307 167h1v1h-1zM307 157h1v1h-1zM307 146h1v1h-1zM307 136h1v1h-1zM307 126h1v1h-1zM307 116h1v1h-1zM307 105h1v1h-1zM307 95h1v1h-1zM307 85h1v1h-1zM307 75h1v1h-1zM307 64h1v1h-1zM307 54h1v1h-1zM307 44h1v1h-1zM307 34h1v1h-1zM307 23h1v1h-1zM307 13h1v1h-1zM307 3h1v1h-1zM318 567h1v1h-1zM318 556h1v1h-1zM318 546h1v1h-1zM318 536h1v1h-1zM318 526h1v1h-1zM318 515h1v1h-1zM318 505h1v1h-1zM318 495h1v1h-1zM318 485h1v1h-1zM318 474h1v1h-1zM318 464h1v1h-1zM318 454h1v1h-1zM318 444h1v1h-1zM318 433h1v1h-1zM318 423h1v1h-1zM318 413h1v1h-1zM318 403h1v1h-1zM318 392h1v1h-1zM318 382h1v1h-1zM318 372h1v1h-1zM318 362h1v1h-1zM318 351h1v1h-1zM318 341h1v1h-1zM318 331h1v1h-1zM318 321h1v1h-1zM318 310h1v1h-1zM318 300h1v1h-1zM318 290h1v1h-1zM318 280h1v1h-1zM318 269h1v1h-1zM318 259h1v1h-1zM318 249h1v1h-1zM318 239h1v1h-1zM318 228h1v1h-1zM318 218h1v1h-1zM318 208h1v1h-1zM318 198h1v1h-1zM318 187h1v1h-1zM318 177h1v1h-1zM318 167h1v1h-1zM318 157h1v1h-1zM318 146h1v1h-1zM318 136h1v1h-1zM318 126h1v1h-1zM318 116h1v1h-1zM318 105h1v1h-1zM318 95h1v1h-1zM318 85h1v1h-1zM318 75h1v1h-1zM318 64h1v1h-1zM318 54h1v1h-1zM318 44h1v1h-1zM318 34h1v1h-1zM318 23h1v1h-1zM318 13h1v1h-1zM318 3h1v1h-1zM328 567h1v1h-1zM328 556h1v1h-1zM328 546h1v1h-1zM328 536h1v1h-1zM328 526h1v1h-1zM328 515h1v1h-1zM328 505h1v1h-1zM328 495h1v1h-1zM328 485h1v1h-1zM328 474h1v1h-1zM328 464h1v1h-1zM328 454h1v1h-1zM328 444h1v1h-1zM328 433h1v1h-1zM328 423h1v1h-1zM328 413h1v1h-1zM328 403h1v1h-1zM328 392h1v1h-1zM328 382h1v1h-1zM328 372h1v1h-1zM328 362h1v1h-1zM328 351h1v1h-1zM328 341h1v1h-1zM328 331h1v1h-1zM328 321h1v1h-1zM328 310h1v1h-1zM328 300h1v1h-1zM328 290h1v1h-1zM328 280h1v1h-1zM328 269h1v1h-1zM328 259h1v1h-1zM328 249h1v1h-1zM328 239h1v1h-1zM328 228h1v1h-1zM328 218h1v1h-1zM328 208h1v1h-1zM328 198h1v1h-1zM328 187h1v1h-1zM328 177h1v1h-1zM328 167h1v1h-1zM328 157h1v1h-1zM328 146h1v1h-1zM328 136h1v1h-1zM328 126h1v1h-1zM328 116h1v1h-1zM328 105h1v1h-1zM328 95h1v1h-1zM328 85h1v1h-1zM328 75h1v1h-1zM328 64h1v1h-1zM328 54h1v1h-1zM328 44h1v1h-1zM328 34h1v1h-1zM328 23h1v1h-1zM328 13h1v1h-1zM328 3h1v1h-1zM338 567h1v1h-1zM338 556h1v1h-1zM338 546h1v1h-1zM338 536h1v1h-1zM338 526h1v1h-1zM338 515h1v1h-1zM338 505h1v1h-1zM338 495h1v1h-1zM338 485h1v1h-1zM338 474h1v1h-1zM338 464h1v1h-1zM338 454h1v1h-1zM338 444h1v1h-1zM338 433h1v1h-1zM338 423h1v1h-1zM338 413h1v1h-1zM338 403h1v1h-1zM338 392h1v1h-1zM338 382h1v1h-1zM338 372h1v1h-1zM338 362h1v1h-1zM338 351h1v1h-1zM338 341h1v1h-1zM338 331h1v1h-1zM338 321h1v1h-1zM338 310h1v1h-1zM338 300h1v1h-1zM338 290h1v1h-1zM338 280h1v1h-1zM338 269h1v1h-1zM338 259h1v1h-1zM338 249h1v1h-1zM338 239h1v1h-1zM338 228h1v1h-1zM338 218h1v1h-1zM338 208h1v1h-1zM338 198h1v1h-1zM338 187h1v1h-1zM338 177h1v1h-1zM338 167h1v1h-1zM338 157h1v1h-1zM338 146h1v1h-1zM338 136h1v1h-1zM338 126h1v1h-1zM338 116h1v1h-1zM338 105h1v1h-1zM338 95h1v1h-1zM338 85h1v1h-1zM338 75h1v1h-1zM338 64h1v1h-1zM338 54h1v1h-1zM338 44h1v1h-1zM338 34h1v1h-1zM338 23h1v1h-1zM338 13h1v1h-1zM338 3h1v1h-1zM348 567h1v1h-1zM348 556h1v1h-1zM348 546h1v1h-1zM348 536h1v1h-1zM348 526h1v1h-1zM348 515h1v1h-1zM348 505h1v1h-1zM348 495h1v1h-1zM348 485h1v1h-1zM348 474h1v1h-1zM348 464h1v1h-1zM348 454h1v1h-1zM348 444h1v1h-1zM348 433h1v1h-1zM348 423h1v1h-1zM348 413h1v1h-1zM348 403h1v1h-1zM348 392h1v1h-1zM348 382h1v1h-1zM348 372h1v1h-1zM348 362h1v1h-1zM348 351h1v1h-1zM348 341h1v1h-1zM348 331h1v1h-1zM348 321h1v1h-1zM348 310h1v1h-1zM348 300h1v1h-1zM348 290h1v1h-1zM348 280h1v1h-1zM348 269h1v1h-1zM348 259h1v1h-1zM348 249h1v1h-1zM348 239h1v1h-1zM348 228h1v1h-1zM348 218h1v1h-1zM348 208h1v1h-1zM348 198h1v1h-1zM348 187h1v1h-1zM348 177h1v1h-1zM348 167h1v1h-1zM348 157h1v1h-1zM348 146h1v1h-1zM348 136h1v1h-1zM348 126h1v1h-1zM348 116h1v1h-1zM348 105h1v1h-1zM348 95h1v1h-1zM348 85h1v1h-1zM348 75h1v1h-1zM348 64h1v1h-1zM348 54h1v1h-1zM348 44h1v1h-1zM348 34h1v1h-1zM348 23h1v1h-1zM348 13h1v1h-1zM348 3h1v1h-1zM359 567h1v1h-1zM359 556h1v1h-1zM359 546h1v1h-1zM359 536h1v1h-1zM359 526h1v1h-1zM359 515h1v1h-1zM359 505h1v1h-1zM359 495h1v1h-1zM359 485h1v1h-1zM359 474h1v1h-1zM359 464h1v1h-1zM359 454h1v1h-1zM359 444h1v1h-1zM359 433h1v1h-1zM359 423h1v1h-1zM359 413h1v1h-1zM359 403h1v1h-1zM359 392h1v1h-1zM359 382h1v1h-1zM359 372h1v1h-1zM359 362h1v1h-1zM359 351h1v1h-1zM359 341h1v1h-1zM359 331h1v1h-1zM359 321h1v1h-1zM359 310h1v1h-1zM359 300h1v1h-1zM359 290h1v1h-1zM359 280h1v1h-1zM359 269h1v1h-1zM359 259h1v1h-1zM359 249h1v1h-1zM359 239h1v1h-1zM359 228h1v1h-1zM359 218h1v1h-1zM359 208h1v1h-1zM359 198h1v1h-1zM359 187h1v1h-1zM359 177h1v1h-1zM359 167h1v1h-1zM359 157h1v1h-1zM359 146h1v1h-1zM359 136h1v1h-1zM359 126h1v1h-1zM359 116h1v1h-1zM359 105h1v1h-1zM359 95h1v1h-1zM359 85h1v1h-1zM359 75h1v1h-1zM359 64h1v1h-1zM359 54h1v1h-1zM359 44h1v1h-1zM359 34h1v1h-1zM359 23h1v1h-1zM359 13h1v1h-1zM359 3h1v1h-1zM369 567h1v1h-1zM369 556h1v1h-1zM369 546h1v1h-1zM369 536h1v1h-1zM369 526h1v1h-1zM369 515h1v1h-1zM369 505h1v1h-1zM369 495h1v1h-1zM369 485h1v1h-1zM369 474h1v1h-1zM369 464h1v1h-1zM369 454h1v1h-1zM369 444h1v1h-1zM369 433h1v1h-1zM369 423h1v1h-1zM369 413h1v1h-1zM369 403h1v1h-1zM369 392h1v1h-1zM369 382h1v1h-1zM369 372h1v1h-1zM369 362h1v1h-1zM369 351h1v1h-1zM369 341h1v1h-1zM369 331h1v1h-1zM369 321h1v1h-1zM369 310h1v1h-1zM369 300h1v1h-1zM369 290h1v1h-1zM369 280h1v1h-1zM369 269h1v1h-1zM369 259h1v1h-1zM369 249h1v1h-1zM369 239h1v1h-1zM369 228h1v1h-1zM369 218h1v1h-1zM369 208h1v1h-1zM369 198h1v1h-1zM369 187h1v1h-1zM369 177h1v1h-1zM369 167h1v1h-1zM369 157h1v1h-1zM369 146h1v1h-1zM369 136h1v1h-1zM369 126h1v1h-1zM369 116h1v1h-1zM369 105h1v1h-1zM369 95h1v1h-1zM369 85h1v1h-1zM369 75h1v1h-1zM369 64h1v1h-1zM369 54h1v1h-1zM369 44h1v1h-1zM369 34h1v1h-1zM369 23h1v1h-1zM369 13h1v1h-1zM369 3h1v1h-1zM379 567h1v1h-1zM379 556h1v1h-1zM379 546h1v1h-1zM379 536h1v1h-1zM379 526h1v1h-1zM379 515h1v1h-1zM379 505h1v1h-1zM379 495h1v1h-1zM379 485h1v1h-1zM379 474h1v1h-1zM379 464h1v1h-1zM379 454h1v1h-1zM379 444h1v1h-1zM379 433h1v1h-1zM379 423h1v1h-1zM379 413h1v1h-1zM379 403h1v1h-1zM379 392h1v1h-1zM379 382h1v1h-1zM379 372h1v1h-1zM379 362h1v1h-1zM379 351h1v1h-1zM379 341h1v1h-1zM379 331h1v1h-1zM379 321h1v1h-1zM379 310h1v1h-1zM379 300h1v1h-1zM379 290h1v1h-1zM379 280h1v1h-1zM379 269h1v1h-1zM379 259h1v1h-1zM379 249h1v1h-1zM379 239h1v1h-1zM379 228h1v1h-1zM379 218h1v1h-1zM379 208h1v1h-1zM379 198h1v1h-1zM379 187h1v1h-1zM379 177h1v1h-1zM379 167h1v1h-1zM379 157h1v1h-1zM379 146h1v1h-1zM379 136h1v1h-1zM379 126h1v1h-1zM379 116h1v1h-1zM379 105h1v1h-1zM379 95h1v1h-1zM379 85h1v1h-1zM379 75h1v1h-1zM379 64h1v1h-1zM379 54h1v1h-1zM379 44h1v1h-1zM379 34h1v1h-1zM379 23h1v1h-1zM379 13h1v1h-1zM379 3h1v1h-1zM389 567h1v1h-1zM389 556h1v1h-1zM389 546h1v1h-1zM389 536h1v1h-1zM389 526h1v1h-1zM389 515h1v1h-1zM389 505h1v1h-1zM389 495h1v1h-1zM389 485h1v1h-1zM389 474h1v1h-1zM389 464h1v1h-1zM389 454h1v1h-1zM389 444h1v1h-1zM389 433h1v1h-1zM389 423h1v1h-1zM389 413h1v1h-1zM389 403h1v1h-1zM389 392h1v1h-1zM389 382h1v1h-1zM389 372h1v1h-1zM389 362h1v1h-1zM389 351h1v1h-1zM389 341h1v1h-1zM389 331h1v1h-1zM389 321h1v1h-1zM389 310h1v1h-1zM389 300h1v1h-1zM389 290h1v1h-1zM389 280h1v1h-1zM389 269h1v1h-1zM389 259h1v1h-1zM389 249h1v1h-1zM389 239h1v1h-1zM389 228h1v1h-1zM389 218h1v1h-1zM389 208h1v1h-1zM389 198h1v1h-1zM389 187h1v1h-1zM389 177h1v1h-1zM389 167h1v1h-1zM389 157h1v1h-1zM389 146h1v1h-1zM389 136h1v1h-1zM389 126h1v1h-1zM389 116h1v1h-1zM389 105h1v1h-1zM389 95h1v1h-1zM389 85h1v1h-1zM389 75h1v1h-1zM389 64h1v1h-1zM389 54h1v1h-1zM389 44h1v1h-1zM389 34h1v1h-1zM389 23h1v1h-1zM389 13h1v1h-1zM389 3h1v1h-1zM400 567h1v1h-1zM400 556h1v1h-1zM400 546h1v1h-1zM400 536h1v1h-1zM400 526h1v1h-1zM400 515h1v1h-1zM400 505h1v1h-1zM400 495h1v1h-1zM400 485h1v1h-1zM400 474h1v1h-1zM400 464h1v1h-1zM400 454h1v1h-1zM400 444h1v1h-1zM400 433h1v1h-1zM400 423h1v1h-1zM400 413h1v1h-1zM400 403h1v1h-1zM400 392h1v1h-1zM400 382h1v1h-1zM400 372h1v1h-1zM400 362h1v1h-1zM400 351h1v1h-1zM400 341h1v1h-1zM400 331h1v1h-1zM400 321h1v1h-1zM400 310h1v1h-1zM400 300h1v1h-1zM400 290h1v1h-1zM400 280h1v1h-1zM400 269h1v1h-1zM400 259h1v1h-1zM400 249h1v1h-1zM400 239h1v1h-1zM400 228h1v1h-1zM400 218h1v1h-1zM400 208h1v1h-1zM400 198h1v1h-1zM400 187h1v1h-1zM400 177h1v1h-1zM400 167h1v1h-1zM400 157h1v1h-1zM400 146h1v1h-1zM400 136h1v1h-1zM400 126h1v1h-1zM400 116h1v1h-1zM400 105h1v1h-1zM400 95h1v1h-1zM400 85h1v1h-1zM400 75h1v1h-1zM400 64h1v1h-1zM400 54h1v1h-1zM400 44h1v1h-1zM400 34h1v1h-1zM400 23h1v1h-1zM400 13h1v1h-1zM400 3h1v1h-1zM410 567h1v1h-1zM410 556h1v1h-1zM410 546h1v1h-1zM410 536h1v1h-1zM410 526h1v1h-1zM410 515h1v1h-1zM410 505h1v1h-1zM410 495h1v1h-1zM410 485h1v1h-1zM410 474h1v1h-1zM410 464h1v1h-1zM410 454h1v1h-1zM410 444h1v1h-1zM410 433h1v1h-1zM410 423h1v1h-1zM410 413h1v1h-1zM410 403h1v1h-1zM410 392h1v1h-1zM410 382h1v1h-1zM410 372h1v1h-1zM410 362h1v1h-1zM410 351h1v1h-1zM410 341h1v1h-1zM410 331h1v1h-1zM410 321h1v1h-1zM410 310h1v1h-1zM410 300h1v1h-1zM410 290h1v1h-1zM410 280h1v1h-1zM410 269h1v1h-1zM410 259h1v1h-1zM410 249h1v1h-1zM410 239h1v1h-1zM410 228h1v1h-1zM410 218h1v1h-1zM410 208h1v1h-1zM410 198h1v1h-1zM410 187h1v1h-1zM410 177h1v1h-1zM410 167h1v1h-1zM410 157h1v1h-1zM410 146h1v1h-1zM410 136h1v1h-1zM410 126h1v1h-1zM410 116h1v1h-1zM410 105h1v1h-1zM410 95h1v1h-1zM410 85h1v1h-1zM410 75h1v1h-1zM410 64h1v1h-1zM410 54h1v1h-1zM410 44h1v1h-1zM410 34h1v1h-1zM410 23h1v1h-1zM410 13h1v1h-1zM410 3h1v1h-1zM420 567h1v1h-1zM420 556h1v1h-1zM420 546h1v1h-1zM420 536h1v1h-1zM420 526h1v1h-1zM420 515h1v1h-1zM420 505h1v1h-1zM420 495h1v1h-1zM420 485h1v1h-1zM420 474h1v1h-1zM420 464h1v1h-1zM420 454h1v1h-1zM420 444h1v1h-1zM420 433h1v1h-1zM420 423h1v1h-1zM420 413h1v1h-1zM420 403h1v1h-1zM420 392h1v1h-1zM420 382h1v1h-1zM420 372h1v1h-1zM420 362h1v1h-1zM420 351h1v1h-1zM420 341h1v1h-1zM420 331h1v1h-1zM420 321h1v1h-1zM420 310h1v1h-1zM420 300h1v1h-1zM420 290h1v1h-1zM420 280h1v1h-1zM420 269h1v1h-1zM420 259h1v1h-1zM420 249h1v1h-1zM420 239h1v1h-1zM420 228h1v1h-1zM420 218h1v1h-1zM420 208h1v1h-1zM420 198h1v1h-1zM420 187h1v1h-1zM420 177h1v1h-1zM420 167h1v1h-1zM420 157h1v1h-1zM420 146h1v1h-1zM420 136h1v1h-1zM420 126h1v1h-1zM420 116h1v1h-1zM420 105h1v1h-1zM420 95h1v1h-1zM420 85h1v1h-1zM420 75h1v1h-1zM420 64h1v1h-1zM420 54h1v1h-1zM420 44h1v1h-1zM420 34h1v1h-1zM420 23h1v1h-1zM420 13h1v1h-1zM420 3h1v1h-1zM430 567h1v1h-1zM430 556h1v1h-1zM430 546h1v1h-1zM430 536h1v1h-1zM430 526h1v1h-1zM430 515h1v1h-1zM430 505h1v1h-1zM430 495h1v1h-1zM430 485h1v1h-1zM430 474h1v1h-1zM430 464h1v1h-1zM430 454h1v1h-1zM430 444h1v1h-1zM430 433h1v1h-1zM430 423h1v1h-1zM430 413h1v1h-1zM430 403h1v1h-1zM430 392h1v1h-1zM430 382h1v1h-1zM430 372h1v1h-1zM430 362h1v1h-1zM430 351h1v1h-1zM430 341h1v1h-1zM430 331h1v1h-1zM430 321h1v1h-1zM430 310h1v1h-1zM430 300h1v1h-1zM430 290h1v1h-1zM430 280h1v1h-1zM430 269h1v1h-1zM430 259h1v1h-1zM430 249h1v1h-1zM430 239h1v1h-1zM430 228h1v1h-1zM430 218h1v1h-1zM430 208h1v1h-1zM430 198h1v1h-1zM430 187h1v1h-1zM430 177h1v1h-1zM430 167h1v1h-1zM430 157h1v1h-1zM430 146h1v1h-1zM430 136h1v1h-1zM430 126h1v1h-1zM430 116h1v1h-1zM430 105h1v1h-1zM430 95h1v1h-1zM430 85h1v1h-1zM430 75h1v1h-1zM430 64h1v1h-1zM430 54h1v1h-1zM430 44h1v1h-1zM430 34h1v1h-1zM430 23h1v1h-1zM430 13h1v1h-1zM430 3h1v1h-1zM441 567h1v1h-1zM441 556h1v1h-1zM441 546h1v1h-1zM441 536h1v1h-1zM441 526h1v1h-1zM441 515h1v1h-1zM441 505h1v1h-1zM441 495h1v1h-1zM441 485h1v1h-1zM441 474h1v1h-1zM441 464h1v1h-1zM441 454h1v1h-1zM441 444h1v1h-1zM441 433h1v1h-1zM441 423h1v1h-1zM441 413h1v1h-1zM441 403h1v1h-1zM441 392h1v1h-1zM441 382h1v1h-1zM441 372h1v1h-1zM441 362h1v1h-1zM441 351h1v1h-1zM441 341h1v1h-1zM441 331h1v1h-1zM441 321h1v1h-1zM441 310h1v1h-1zM441 300h1v1h-1zM441 290h1v1h-1zM441 280h1v1h-1zM441 269h1v1h-1zM441 259h1v1h-1zM441 249h1v1h-1zM441 239h1v1h-1zM441 228h1v1h-1zM441 218h1v1h-1zM441 208h1v1h-1zM441 198h1v1h-1zM441 187h1v1h-1zM441 177h1v1h-1zM441 167h1v1h-1zM441 157h1v1h-1zM441 146h1v1h-1zM441 136h1v1h-1zM441 126h1v1h-1zM441 116h1v1h-1zM441 105h1v1h-1zM441 95h1v1h-1zM441 85h1v1h-1zM441 75h1v1h-1zM441 64h1v1h-1zM441 54h1v1h-1zM441 44h1v1h-1zM441 34h1v1h-1zM441 23h1v1h-1zM441 13h1v1h-1zM441 3h1v1h-1zM451 567h1v1h-1zM451 556h1v1h-1zM451 546h1v1h-1zM451 536h1v1h-1zM451 526h1v1h-1zM451 515h1v1h-1zM451 505h1v1h-1zM451 495h1v1h-1zM451 485h1v1h-1zM451 474h1v1h-1zM451 464h1v1h-1zM451 454h1v1h-1zM451 444h1v1h-1zM451 433h1v1h-1zM451 423h1v1h-1zM451 413h1v1h-1zM451 403h1v1h-1zM451 392h1v1h-1zM451 382h1v1h-1zM451 372h1v1h-1zM451 362h1v1h-1zM451 351h1v1h-1zM451 341h1v1h-1zM451 331h1v1h-1zM451 321h1v1h-1zM451 310h1v1h-1zM451 300h1v1h-1zM451 290h1v1h-1zM451 280h1v1h-1zM451 269h1v1h-1zM451 259h1v1h-1zM451 249h1v1h-1zM451 239h1v1h-1zM451 228h1v1h-1zM451 218h1v1h-1zM451 208h1v1h-1zM451 198h1v1h-1zM451 187h1v1h-1zM451 177h1v1h-1zM451 167h1v1h-1zM451 157h1v1h-1zM451 146h1v1h-1zM451 136h1v1h-1zM451 126h1v1h-1zM451 116h1v1h-1zM451 105h1v1h-1zM451 95h1v1h-1zM451 85h1v1h-1zM451 75h1v1h-1zM451 64h1v1h-1zM451 54h1v1h-1zM451 44h1v1h-1zM451 34h1v1h-1zM451 23h1v1h-1zM451 13h1v1h-1zM451 3h1v1h-1zM461 567h1v1h-1zM461 556h1v1h-1zM461 546h1v1h-1zM461 536h1v1h-1zM461 526h1v1h-1zM461 515h1v1h-1zM461 505h1v1h-1zM461 495h1v1h-1zM461 485h1v1h-1zM461 474h1v1h-1zM461 464h1v1h-1zM461 454h1v1h-1zM461 444h1v1h-1zM461 433h1v1h-1zM461 423h1v1h-1zM461 413h1v1h-1zM461 403h1v1h-1zM461 392h1v1h-1zM461 382h1v1h-1zM461 372h1v1h-1zM461 362h1v1h-1zM461 351h1v1h-1zM461 341h1v1h-1zM461 331h1v1h-1zM461 321h1v1h-1zM461 310h1v1h-1zM461 300h1v1h-1zM461 290h1v1h-1zM461 280h1v1h-1zM461 269h1v1h-1zM461 259h1v1h-1zM461 249h1v1h-1zM461 239h1v1h-1zM461 228h1v1h-1zM461 218h1v1h-1zM461 208h1v1h-1zM461 198h1v1h-1zM461 187h1v1h-1zM461 177h1v1h-1zM461 167h1v1h-1zM461 157h1v1h-1zM461 146h1v1h-1zM461 136h1v1h-1zM461 126h1v1h-1zM461 116h1v1h-1zM461 105h1v1h-1zM461 95h1v1h-1zM461 85h1v1h-1zM461 75h1v1h-1zM461 64h1v1h-1zM461 54h1v1h-1zM461 44h1v1h-1zM461 34h1v1h-1zM461 23h1v1h-1zM461 13h1v1h-1zM461 3h1v1h-1zM471 567h1v1h-1zM471 556h1v1h-1zM471 546h1v1h-1zM471 536h1v1h-1zM471 526h1v1h-1zM471 515h1v1h-1zM471 505h1v1h-1zM471 495h1v1h-1zM471 485h1v1h-1zM471 474h1v1h-1zM471 464h1v1h-1zM471 454h1v1h-1zM471 444h1v1h-1zM471 433h1v1h-1zM471 423h1v1h-1zM471 413h1v1h-1zM471 403h1v1h-1zM471 392h1v1h-1zM471 382h1v1h-1zM471 372h1v1h-1zM471 362h1v1h-1zM471 351h1v1h-1zM471 341h1v1h-1zM471 331h1v1h-1zM471 321h1v1h-1zM471 310h1v1h-1zM471 300h1v1h-1zM471 290h1v1h-1zM471 280h1v1h-1zM471 269h1v1h-1zM471 259h1v1h-1zM471 249h1v1h-1zM471 239h1v1h-1zM471 228h1v1h-1zM471 218h1v1h-1zM471 208h1v1h-1zM471 198h1v1h-1zM471 187h1v1h-1zM471 177h1v1h-1zM471 167h1v1h-1zM471 157h1v1h-1zM471 146h1v1h-1zM471 136h1v1h-1zM471 126h1v1h-1zM471 116h1v1h-1zM471 105h1v1h-1zM471 95h1v1h-1zM471 85h1v1h-1zM471 75h1v1h-1zM471 64h1v1h-1zM471 54h1v1h-1zM471 44h1v1h-1zM471 34h1v1h-1zM471 23h1v1h-1zM471 13h1v1h-1zM471 3h1v1h-1zM482 567h1v1h-1zM482 556h1v1h-1zM482 546h1v1h-1zM482 536h1v1h-1zM482 526h1v1h-1zM482 515h1v1h-1zM482 505h1v1h-1zM482 495h1v1h-1zM482 485h1v1h-1zM482 474h1v1h-1zM482 464h1v1h-1zM482 454h1v1h-1zM482 444h1v1h-1zM482 433h1v1h-1zM482 423h1v1h-1zM482 413h1v1h-1zM482 403h1v1h-1zM482 392h1v1h-1zM482 382h1v1h-1zM482 372h1v1h-1zM482 362h1v1h-1zM482 351h1v1h-1zM482 341h1v1h-1zM482 331h1v1h-1zM482 321h1v1h-1zM482 310h1v1h-1zM482 300h1v1h-1zM482 290h1v1h-1zM482 280h1v1h-1zM482 269h1v1h-1zM482 259h1v1h-1zM482 249h1v1h-1zM482 239h1v1h-1zM482 228h1v1h-1zM482 218h1v1h-1zM482 208h1v1h-1zM482 198h1v1h-1zM482 187h1v1h-1zM482 177h1v1h-1zM482 167h1v1h-1zM482 157h1v1h-1zM482 146h1v1h-1zM482 136h1v1h-1zM482 126h1v1h-1zM482 116h1v1h-1zM482 105h1v1h-1zM482 95h1v1h-1zM482 85h1v1h-1zM482 75h1v1h-1zM482 64h1v1h-1zM482 54h1v1h-1zM482 44h1v1h-1zM482 34h1v1h-1zM482 23h1v1h-1zM482 13h1v1h-1zM482 3h1v1h-1zM492 567h1v1h-1zM492 556h1v1h-1zM492 546h1v1h-1zM492 536h1v1h-1zM492 526h1v1h-1zM492 515h1v1h-1zM492 505h1v1h-1zM492 495h1v1h-1zM492 485h1v1h-1zM492 474h1v1h-1zM492 464h1v1h-1zM492 454h1v1h-1zM492 444h1v1h-1zM492 433h1v1h-1zM492 423h1v1h-1zM492 413h1v1h-1zM492 403h1v1h-1zM492 392h1v1h-1zM492 382h1v1h-1zM492 372h1v1h-1zM492 362h1v1h-1zM492 351h1v1h-1zM492 341h1v1h-1zM492 331h1v1h-1zM492 321h1v1h-1zM492 310h1v1h-1zM492 300h1v1h-1zM492 290h1v1h-1zM492 280h1v1h-1zM492 269h1v1h-1zM492 259h1v1h-1zM492 249h1v1h-1zM492 239h1v1h-1zM492 228h1v1h-1zM492 218h1v1h-1zM492 208h1v1h-1zM492 198h1v1h-1zM492 187h1v1h-1zM492 177h1v1h-1zM492 167h1v1h-1zM492 157h1v1h-1zM492 146h1v1h-1zM492 136h1v1h-1zM492 126h1v1h-1zM492 116h1v1h-1zM492 105h1v1h-1zM492 95h1v1h-1zM492 85h1v1h-1zM492 75h1v1h-1zM492 64h1v1h-1zM492 54h1v1h-1zM492 44h1v1h-1zM492 34h1v1h-1zM492 23h1v1h-1zM492 13h1v1h-1zM492 3h1v1h-1zM502 567h1v1h-1zM502 556h1v1h-1zM502 546h1v1h-1zM502 536h1v1h-1zM502 526h1v1h-1zM502 515h1v1h-1zM502 505h1v1h-1zM502 495h1v1h-1zM502 485h1v1h-1zM502 474h1v1h-1zM502 464h1v1h-1zM502 454h1v1h-1zM502 444h1v1h-1zM502 433h1v1h-1zM502 423h1v1h-1zM502 413h1v1h-1zM502 403h1v1h-1zM502 392h1v1h-1zM502 382h1v1h-1zM502 372h1v1h-1zM502 362h1v1h-1zM502 351h1v1h-1zM502 341h1v1h-1zM502 331h1v1h-1zM502 321h1v1h-1zM502 310h1v1h-1zM502 300h1v1h-1zM502 290h1v1h-1zM502 280h1v1h-1zM502 269h1v1h-1zM502 259h1v1h-1zM502 249h1v1h-1zM502 239h1v1h-1zM502 228h1v1h-1zM502 218h1v1h-1zM502 208h1v1h-1zM502 198h1v1h-1zM502 187h1v1h-1zM502 177h1v1h-1zM502 167h1v1h-1zM502 157h1v1h-1zM502 146h1v1h-1zM502 136h1v1h-1zM502 126h1v1h-1zM502 116h1v1h-1zM502 105h1v1h-1zM502 95h1v1h-1zM502 85h1v1h-1zM502 75h1v1h-1zM502 64h1v1h-1zM502 54h1v1h-1zM502 44h1v1h-1zM502 34h1v1h-1zM502 23h1v1h-1zM502 13h1v1h-1zM502 3h1v1h-1zM512 567h1v1h-1zM512 556h1v1h-1zM512 546h1v1h-1zM512 536h1v1h-1zM512 526h1v1h-1zM512 515h1v1h-1zM512 505h1v1h-1zM512 495h1v1h-1zM512 485h1v1h-1zM512 474h1v1h-1zM512 464h1v1h-1zM512 454h1v1h-1zM512 444h1v1h-1zM512 433h1v1h-1zM512 423h1v1h-1zM512 413h1v1h-1zM512 403h1v1h-1zM512 392h1v1h-1zM512 382h1v1h-1zM512 372h1v1h-1zM512 362h1v1h-1zM512 351h1v1h-1zM512 341h1v1h-1zM512 331h1v1h-1zM512 321h1v1h-1zM512 310h1v1h-1zM512 300h1v1h-1zM512 290h1v1h-1zM512 280h1v1h-1zM512 269h1v1h-1zM512 259h1v1h-1zM512 249h1v1h-1zM512 239h1v1h-1zM512 228h1v1h-1zM512 218h1v1h-1zM512 208h1v1h-1zM512 198h1v1h-1zM512 187h1v1h-1zM512 177h1v1h-1zM512 167h1v1h-1zM512 157h1v1h-1zM512 146h1v1h-1zM512 136h1v1h-1zM512 126h1v1h-1zM512 116h1v1h-1zM512 105h1v1h-1zM512 95h1v1h-1zM512 85h1v1h-1zM512 75h1v1h-1zM512 64h1v1h-1zM512 54h1v1h-1zM512 44h1v1h-1zM512 34h1v1h-1zM512 23h1v1h-1zM512 13h1v1h-1zM512 3h1v1h-1zM523 567h1v1h-1zM523 556h1v1h-1zM523 546h1v1h-1zM523 536h1v1h-1zM523 526h1v1h-1zM523 515h1v1h-1zM523 505h1v1h-1zM523 495h1v1h-1zM523 485h1v1h-1zM523 474h1v1h-1zM523 464h1v1h-1zM523 454h1v1h-1zM523 444h1v1h-1zM523 433h1v1h-1zM523 423h1v1h-1zM523 413h1v1h-1zM523 403h1v1h-1zM523 392h1v1h-1zM523 382h1v1h-1zM523 372h1v1h-1zM523 362h1v1h-1zM523 351h1v1h-1zM523 341h1v1h-1zM523 331h1v1h-1zM523 321h1v1h-1zM523 310h1v1h-1zM523 300h1v1h-1zM523 290h1v1h-1zM523 280h1v1h-1zM523 269h1v1h-1zM523 259h1v1h-1zM523 249h1v1h-1zM523 239h1v1h-1zM523 228h1v1h-1zM523 218h1v1h-1zM523 208h1v1h-1zM523 198h1v1h-1zM523 187h1v1h-1zM523 177h1v1h-1zM523 167h1v1h-1zM523 157h1v1h-1zM523 146h1v1h-1zM523 136h1v1h-1zM523 126h1v1h-1zM523 116h1v1h-1zM523 105h1v1h-1zM523 95h1v1h-1zM523 85h1v1h-1zM523 75h1v1h-1zM523 64h1v1h-1zM523 54h1v1h-1zM523 44h1v1h-1zM523 34h1v1h-1zM523 23h1v1h-1zM523 13h1v1h-1zM523 3h1v1h-1zM533 567h1v1h-1zM533 556h1v1h-1zM533 546h1v1h-1zM533 536h1v1h-1zM533 526h1v1h-1zM533 515h1v1h-1zM533 505h1v1h-1zM533 495h1v1h-1zM533 485h1v1h-1zM533 474h1v1h-1zM533 464h1v1h-1zM533 454h1v1h-1zM533 444h1v1h-1zM533 433h1v1h-1zM533 423h1v1h-1zM533 413h1v1h-1zM533 403h1v1h-1zM533 392h1v1h-1zM533 382h1v1h-1zM533 372h1v1h-1zM533 362h1v1h-1zM533 351h1v1h-1zM533 341h1v1h-1zM533 331h1v1h-1zM533 321h1v1h-1zM533 310h1v1h-1zM533 300h1v1h-1zM533 290h1v1h-1zM533 280h1v1h-1zM533 269h1v1h-1zM533 259h1v1h-1zM533 249h1v1h-1zM533 239h1v1h-1zM533 228h1v1h-1zM533 218h1v1h-1zM533 208h1v1h-1zM533 198h1v1h-1zM533 187h1v1h-1zM533 177h1v1h-1zM533 167h1v1h-1zM533 157h1v1h-1zM533 146h1v1h-1zM533 136h1v1h-1zM533 126h1v1h-1zM533 116h1v1h-1zM533 105h1v1h-1zM533 95h1v1h-1zM533 85h1v1h-1zM533 75h1v1h-1zM533 64h1v1h-1zM533 54h1v1h-1zM533 44h1v1h-1zM533 34h1v1h-1zM533 23h1v1h-1zM533 13h1v1h-1zM533 3h1v1h-1zM543 567h1v1h-1zM543 556h1v1h-1zM543 546h1v1h-1zM543 536h1v1h-1zM543 526h1v1h-1zM543 515h1v1h-1zM543 505h1v1h-1zM543 495h1v1h-1zM543 485h1v1h-1zM543 474h1v1h-1zM543 464h1v1h-1zM543 454h1v1h-1zM543 444h1v1h-1zM543 433h1v1h-1zM543 423h1v1h-1zM543 413h1v1h-1zM543 403h1v1h-1zM543 392h1v1h-1zM543 382h1v1h-1zM543 372h1v1h-1zM543 362h1v1h-1zM543 351h1v1h-1zM543 341h1v1h-1zM543 331h1v1h-1zM543 321h1v1h-1zM543 310h1v1h-1zM543 300h1v1h-1zM543 290h1v1h-1zM543 280h1v1h-1zM543 269h1v1h-1zM543 259h1v1h-1zM543 249h1v1h-1zM543 239h1v1h-1zM543 228h1v1h-1zM543 218h1v1h-1zM543 208h1v1h-1zM543 198h1v1h-1zM543 187h1v1h-1zM543 177h1v1h-1zM543 167h1v1h-1zM543 157h1v1h-1zM543 146h1v1h-1zM543 136h1v1h-1zM543 126h1v1h-1zM543 116h1v1h-1zM543 105h1v1h-1zM543 95h1v1h-1zM543 85h1v1h-1zM543 75h1v1h-1zM543 64h1v1h-1zM543 54h1v1h-1zM543 44h1v1h-1zM543 34h1v1h-1zM543 23h1v1h-1zM543 13h1v1h-1zM543 3h1v1h-1zM553 567h1v1h-1zM553 556h1v1h-1zM553 546h1v1h-1zM553 536h1v1h-1zM553 526h1v1h-1zM553 515h1v1h-1zM553 505h1v1h-1zM553 495h1v1h-1zM553 485h1v1h-1zM553 474h1v1h-1zM553 464h1v1h-1zM553 454h1v1h-1zM553 444h1v1h-1zM553 433h1v1h-1zM553 423h1v1h-1zM553 413h1v1h-1zM553 403h1v1h-1zM553 392h1v1h-1zM553 382h1v1h-1zM553 372h1v1h-1zM553 362h1v1h-1zM553 351h1v1h-1zM553 341h1v1h-1zM553 331h1v1h-1zM553 321h1v1h-1zM553 310h1v1h-1zM553 300h1v1h-1zM553 290h1v1h-1zM553 280h1v1h-1zM553 269h1v1h-1zM553 259h1v1h-1zM553 249h1v1h-1zM553 239h1v1h-1zM553 228h1v1h-1zM553 218h1v1h-1zM553 208h1v1h-1zM553 198h1v1h-1zM553 187h1v1h-1zM553 177h1v1h-1zM553 167h1v1h-1zM553 157h1v1h-1zM553 146h1v1h-1zM553 136h1v1h-1zM553 126h1v1h-1zM553 116h1v1h-1zM553 105h1v1h-1zM553 95h1v1h-1zM553 85h1v1h-1zM553 75h1v1h-1zM553 64h1v1h-1zM553 54h1v1h-1zM553 44h1v1h-1zM553 34h1v1h-1zM553 23h1v1h-1zM553 13h1v1h-1zM553 3h1v1h-1zM564 567h1v1h-1zM564 556h1v1h-1zM564 546h1v1h-1zM564 536h1v1h-1zM564 526h1v1h-1zM564 515h1v1h-1zM564 505h1v1h-1zM564 495h1v1h-1zM564 485h1v1h-1zM564 474h1v1h-1zM564 464h1v1h-1zM564 454h1v1h-1zM564 444h1v1h-1zM564 433h1v1h-1zM564 423h1v1h-1zM564 413h1v1h-1zM564 403h1v1h-1zM564 392h1v1h-1zM564 382h1v1h-1zM564 372h1v1h-1zM564 362h1v1h-1zM564 351h1v1h-1zM564 341h1v1h-1zM564 331h1v1h-1zM564 321h1v1h-1zM564 310h1v1h-1zM564 300h1v1h-1zM564 290h1v1h-1zM564 280h1v1h-1zM564 269h1v1h-1zM564 259h1v1h-1zM564 249h1v1h-1zM564 239h1v1h-1zM564 228h1v1h-1zM564 218h1v1h-1zM564 208h1v1h-1zM564 198h1v1h-1zM564 187h1v1h-1zM564 177h1v1h-1zM564 167h1v1h-1zM564 157h1v1h-1zM564 146h1v1h-1zM564 136h1v1h-1zM564 126h1v1h-1zM564 116h1v1h-1zM564 105h1v1h-1zM564 95h1v1h-1zM564 85h1v1h-1zM564 75h1v1h-1zM564 64h1v1h-1zM564 54h1v1h-1zM564 44h1v1h-1zM564 34h1v1h-1zM564 23h1v1h-1zM564 13h1v1h-1zM564 3h1v1h-1zM574 567h1v1h-1zM574 556h1v1h-1zM574 546h1v1h-1zM574 536h1v1h-1zM574 526h1v1h-1zM574 515h1v1h-1zM574 505h1v1h-1zM574 495h1v1h-1zM574 485h1v1h-1zM574 474h1v1h-1zM574 464h1v1h-1zM574 454h1v1h-1zM574 444h1v1h-1zM574 433h1v1h-1zM574 423h1v1h-1zM574 413h1v1h-1zM574 403h1v1h-1zM574 392h1v1h-1zM574 382h1v1h-1zM574 372h1v1h-1zM574 362h1v1h-1zM574 351h1v1h-1zM574 341h1v1h-1zM574 331h1v1h-1zM574 321h1v1h-1zM574 310h1v1h-1zM574 300h1v1h-1zM574 290h1v1h-1zM574 280h1v1h-1zM574 269h1v1h-1zM574 259h1v1h-1zM574 249h1v1h-1zM574 239h1v1h-1zM574 228h1v1h-1zM574 218h1v1h-1zM574 208h1v1h-1zM574 198h1v1h-1zM574 187h1v1h-1zM574 177h1v1h-1zM574 167h1v1h-1zM574 157h1v1h-1zM574 146h1v1h-1zM574 136h1v1h-1zM574 126h1v1h-1zM574 116h1v1h-1zM574 105h1v1h-1zM574 95h1v1h-1zM574 85h1v1h-1zM574 75h1v1h-1zM574 64h1v1h-1zM574 54h1v1h-1zM574 44h1v1h-1zM574 34h1v1h-1zM574 23h1v1h-1zM574 13h1v1h-1zM574 3h1v1h-1zM584 567h1v1h-1zM584 556h1v1h-1zM584 546h1v1h-1zM584 536h1v1h-1zM584 526h1v1h-1zM584 515h1v1h-1zM584 505h1v1h-1zM584 495h1v1h-1zM584 485h1v1h-1zM584 474h1v1h-1zM584 464h1v1h-1zM584 454h1v1h-1zM584 444h1v1h-1zM584 433h1v1h-1zM584 423h1v1h-1zM584 413h1v1h-1zM584 403h1v1h-1zM584 392h1v1h-1zM584 382h1v1h-1zM584 372h1v1h-1zM584 362h1v1h-1zM584 351h1v1h-1zM584 341h1v1h-1zM584 331h1v1h-1zM584 321h1v1h-1zM584 310h1v1h-1zM584 300h1v1h-1zM584 290h1v1h-1zM584 280h1v1h-1zM584 269h1v1h-1zM584 259h1v1h-1zM584 249h1v1h-1zM584 239h1v1h-1zM584 228h1v1h-1zM584 218h1v1h-1zM584 208h1v1h-1zM584 198h1v1h-1zM584 187h1v1h-1zM584 177h1v1h-1zM584 167h1v1h-1zM584 157h1v1h-1zM584 146h1v1h-1zM584 136h1v1h-1zM584 126h1v1h-1zM584 116h1v1h-1zM584 105h1v1h-1zM584 95h1v1h-1zM584 85h1v1h-1zM584 75h1v1h-1zM584 64h1v1h-1zM584 54h1v1h-1zM584 44h1v1h-1zM584 34h1v1h-1zM584 23h1v1h-1zM584 13h1v1h-1zM584 3h1v1h-1zM594 567h1v1h-1zM594 556h1v1h-1zM594 546h1v1h-1zM594 536h1v1h-1zM594 526h1v1h-1zM594 515h1v1h-1zM594 505h1v1h-1zM594 495h1v1h-1zM594 485h1v1h-1zM594 474h1v1h-1zM594 464h1v1h-1zM594 454h1v1h-1zM594 444h1v1h-1zM594 433h1v1h-1zM594 423h1v1h-1zM594 413h1v1h-1zM594 403h1v1h-1zM594 392h1v1h-1zM594 382h1v1h-1zM594 372h1v1h-1zM594 362h1v1h-1zM594 351h1v1h-1zM594 341h1v1h-1zM594 331h1v1h-1zM594 321h1v1h-1zM594 310h1v1h-1zM594 300h1v1h-1zM594 290h1v1h-1zM594 280h1v1h-1zM594 269h1v1h-1zM594 259h1v1h-1zM594 249h1v1h-1zM594 239h1v1h-1zM594 228h1v1h-1zM594 218h1v1h-1zM594 208h1v1h-1zM594 198h1v1h-1zM594 187h1v1h-1zM594 177h1v1h-1zM594 167h1v1h-1zM594 157h1v1h-1zM594 146h1v1h-1zM594 136h1v1h-1zM594 126h1v1h-1zM594 116h1v1h-1zM594 105h1v1h-1zM594 95h1v1h-1zM594 85h1v1h-1zM594 75h1v1h-1zM594 64h1v1h-1zM594 54h1v1h-1zM594 44h1v1h-1zM594 34h1v1h-1zM594 23h1v1h-1zM594 13h1v1h-1zM594 3h1v1h-1zM605 567h1v1h-1zM605 556h1v1h-1zM605 546h1v1h-1zM605 536h1v1h-1zM605 526h1v1h-1zM605 515h1v1h-1zM605 505h1v1h-1zM605 495h1v1h-1zM605 485h1v1h-1zM605 474h1v1h-1zM605 464h1v1h-1zM605 454h1v1h-1zM605 444h1v1h-1zM605 433h1v1h-1zM605 423h1v1h-1zM605 413h1v1h-1zM605 403h1v1h-1zM605 392h1v1h-1zM605 382h1v1h-1zM605 372h1v1h-1zM605 362h1v1h-1zM605 351h1v1h-1zM605 341h1v1h-1zM605 331h1v1h-1zM605 321h1v1h-1zM605 310h1v1h-1zM605 300h1v1h-1zM605 290h1v1h-1zM605 280h1v1h-1zM605 269h1v1h-1zM605 259h1v1h-1zM605 249h1v1h-1zM605 239h1v1h-1zM605 228h1v1h-1zM605 218h1v1h-1zM605 208h1v1h-1zM605 198h1v1h-1zM605 187h1v1h-1zM605 177h1v1h-1zM605 167h1v1h-1zM605 157h1v1h-1zM605 146h1v1h-1zM605 136h1v1h-1zM605 126h1v1h-1zM605 116h1v1h-1zM605 105h1v1h-1zM605 95h1v1h-1zM605 85h1v1h-1zM605 75h1v1h-1zM605 64h1v1h-1zM605 54h1v1h-1zM605 44h1v1h-1zM605 34h1v1h-1zM605 23h1v1h-1zM605 13h1v1h-1zM605 3h1v1h-1zM615 567h1v1h-1zM615 556h1v1h-1zM615 546h1v1h-1zM615 536h1v1h-1zM615 526h1v1h-1zM615 515h1v1h-1zM615 505h1v1h-1zM615 495h1v1h-1zM615 485h1v1h-1zM615 474h1v1h-1zM615 464h1v1h-1zM615 454h1v1h-1zM615 444h1v1h-1zM615 433h1v1h-1zM615 423h1v1h-1zM615 413h1v1h-1zM615 403h1v1h-1zM615 392h1v1h-1zM615 382h1v1h-1zM615 372h1v1h-1zM615 362h1v1h-1zM615 351h1v1h-1zM615 341h1v1h-1zM615 331h1v1h-1zM615 321h1v1h-1zM615 310h1v1h-1zM615 300h1v1h-1zM615 290h1v1h-1zM615 280h1v1h-1zM615 269h1v1h-1zM615 259h1v1h-1zM615 249h1v1h-1zM615 239h1v1h-1zM615 228h1v1h-1zM615 218h1v1h-1zM615 208h1v1h-1zM615 198h1v1h-1zM615 187h1v1h-1zM615 177h1v1h-1zM615 167h1v1h-1zM615 157h1v1h-1zM615 146h1v1h-1zM615 136h1v1h-1zM615 126h1v1h-1zM615 116h1v1h-1zM615 105h1v1h-1zM615 95h1v1h-1zM615 85h1v1h-1zM615 75h1v1h-1zM615 64h1v1h-1zM615 54h1v1h-1zM615 44h1v1h-1zM615 34h1v1h-1zM615 23h1v1h-1zM615 13h1v1h-1zM615 3h1v1h-1zM625 567h1v1h-1zM625 556h1v1h-1zM625 546h1v1h-1zM625 536h1v1h-1zM625 526h1v1h-1zM625 515h1v1h-1zM625 505h1v1h-1zM625 495h1v1h-1zM625 485h1v1h-1zM625 474h1v1h-1zM625 464h1v1h-1zM625 454h1v1h-1zM625 444h1v1h-1zM625 433h1v1h-1zM625 423h1v1h-1zM625 413h1v1h-1zM625 403h1v1h-1zM625 392h1v1h-1zM625 382h1v1h-1zM625 372h1v1h-1zM625 362h1v1h-1zM625 351h1v1h-1zM625 341h1v1h-1zM625 331h1v1h-1zM625 321h1v1h-1zM625 310h1v1h-1zM625 300h1v1h-1zM625 290h1v1h-1zM625 280h1v1h-1zM625 269h1v1h-1zM625 259h1v1h-1zM625 249h1v1h-1zM625 239h1v1h-1zM625 228h1v1h-1zM625 218h1v1h-1zM625 208h1v1h-1zM625 198h1v1h-1zM625 187h1v1h-1zM625 177h1v1h-1zM625 167h1v1h-1zM625 157h1v1h-1zM625 146h1v1h-1zM625 136h1v1h-1zM625 126h1v1h-1zM625 116h1v1h-1zM625 105h1v1h-1zM625 95h1v1h-1zM625 85h1v1h-1zM625 75h1v1h-1zM625 64h1v1h-1zM625 54h1v1h-1zM625 44h1v1h-1zM625 34h1v1h-1zM625 23h1v1h-1zM625 13h1v1h-1zM625 3h1v1h-1zM635 567h1v1h-1zM635 556h1v1h-1zM635 546h1v1h-1zM635 536h1v1h-1zM635 526h1v1h-1zM635 515h1v1h-1zM635 505h1v1h-1zM635 495h1v1h-1zM635 485h1v1h-1zM635 474h1v1h-1zM635 464h1v1h-1zM635 454h1v1h-1zM635 444h1v1h-1zM635 433h1v1h-1zM635 423h1v1h-1zM635 413h1v1h-1zM635 403h1v1h-1zM635 392h1v1h-1zM635 382h1v1h-1zM635 372h1v1h-1zM635 362h1v1h-1zM635 351h1v1h-1zM635 341h1v1h-1zM635 331h1v1h-1zM635 321h1v1h-1zM635 310h1v1h-1zM635 300h1v1h-1zM635 290h1v1h-1zM635 280h1v1h-1zM635 269h1v1h-1zM635 259h1v1h-1zM635 249h1v1h-1zM635 239h1v1h-1zM635 228h1v1h-1zM635 218h1v1h-1zM635 208h1v1h-1zM635 198h1v1h-1zM635 187h1v1h-1zM635 177h1v1h-1zM635 167h1v1h-1zM635 157h1v1h-1zM635 146h1v1h-1zM635 136h1v1h-1zM635 126h1v1h-1zM635 116h1v1h-1zM635 105h1v1h-1zM635 95h1v1h-1zM635 85h1v1h-1zM635 75h1v1h-1zM635 64h1v1h-1zM635 54h1v1h-1zM635 44h1v1h-1zM635 34h1v1h-1zM635 23h1v1h-1zM635 13h1v1h-1zM635 3h1v1h-1zM646 567h1v1h-1zM646 556h1v1h-1zM646 546h1v1h-1zM646 536h1v1h-1zM646 526h1v1h-1zM646 515h1v1h-1zM646 505h1v1h-1zM646 495h1v1h-1zM646 485h1v1h-1zM646 474h1v1h-1zM646 464h1v1h-1zM646 454h1v1h-1zM646 444h1v1h-1zM646 433h1v1h-1zM646 423h1v1h-1zM646 413h1v1h-1zM646 403h1v1h-1zM646 392h1v1h-1zM646 382h1v1h-1zM646 372h1v1h-1zM646 362h1v1h-1zM646 351h1v1h-1zM646 341h1v1h-1zM646 331h1v1h-1zM646 321h1v1h-1zM646 310h1v1h-1zM646 300h1v1h-1zM646 290h1v1h-1zM646 280h1v1h-1zM646 269h1v1h-1zM646 259h1v1h-1zM646 249h1v1h-1zM646 239h1v1h-1zM646 228h1v1h-1zM646 218h1v1h-1zM646 208h1v1h-1zM646 198h1v1h-1zM646 187h1v1h-1zM646 177h1v1h-1zM646 167h1v1h-1zM646 157h1v1h-1zM646 146h1v1h-1zM646 136h1v1h-1zM646 126h1v1h-1zM646 116h1v1h-1zM646 105h1v1h-1zM646 95h1v1h-1zM646 85h1v1h-1zM646 75h1v1h-1zM646 64h1v1h-1zM646 54h1v1h-1zM646 44h1v1h-1zM646 34h1v1h-1zM646 23h1v1h-1zM646 13h1v1h-1zM646 3h1v1h-1zM656 567h1v1h-1zM656 556h1v1h-1zM656 546h1v1h-1zM656 536h1v1h-1zM656 526h1v1h-1zM656 515h1v1h-1zM656 505h1v1h-1zM656 495h1v1h-1zM656 485h1v1h-1zM656 474h1v1h-1zM656 464h1v1h-1zM656 454h1v1h-1zM656 444h1v1h-1zM656 433h1v1h-1zM656 423h1v1h-1zM656 413h1v1h-1zM656 403h1v1h-1zM656 392h1v1h-1zM656 382h1v1h-1zM656 372h1v1h-1zM656 362h1v1h-1zM656 351h1v1h-1zM656 341h1v1h-1zM656 331h1v1h-1zM656 321h1v1h-1zM656 310h1v1h-1zM656 300h1v1h-1zM656 290h1v1h-1zM656 280h1v1h-1zM656 269h1v1h-1zM656 259h1v1h-1zM656 249h1v1h-1zM656 239h1v1h-1zM656 228h1v1h-1zM656 218h1v1h-1zM656 208h1v1h-1zM656 198h1v1h-1zM656 187h1v1h-1zM656 177h1v1h-1zM656 167h1v1h-1zM656 157h1v1h-1zM656 146h1v1h-1zM656 136h1v1h-1zM656 126h1v1h-1zM656 116h1v1h-1zM656 105h1v1h-1zM656 95h1v1h-1zM656 85h1v1h-1zM656 75h1v1h-1zM656 64h1v1h-1zM656 54h1v1h-1zM656 44h1v1h-1zM656 34h1v1h-1zM656 23h1v1h-1zM656 13h1v1h-1zM656 3h1v1h-1zM666 567h1v1h-1zM666 556h1v1h-1zM666 546h1v1h-1zM666 536h1v1h-1zM666 526h1v1h-1zM666 515h1v1h-1zM666 505h1v1h-1zM666 495h1v1h-1zM666 485h1v1h-1zM666 474h1v1h-1zM666 464h1v1h-1zM666 454h1v1h-1zM666 444h1v1h-1zM666 433h1v1h-1zM666 423h1v1h-1zM666 413h1v1h-1zM666 403h1v1h-1zM666 392h1v1h-1zM666 382h1v1h-1zM666 372h1v1h-1zM666 362h1v1h-1zM666 351h1v1h-1zM666 341h1v1h-1zM666 331h1v1h-1zM666 321h1v1h-1zM666 310h1v1h-1zM666 300h1v1h-1zM666 290h1v1h-1zM666 280h1v1h-1zM666 269h1v1h-1zM666 259h1v1h-1zM666 249h1v1h-1zM666 239h1v1h-1zM666 228h1v1h-1zM666 218h1v1h-1zM666 208h1v1h-1zM666 198h1v1h-1zM666 187h1v1h-1zM666 177h1v1h-1zM666 167h1v1h-1zM666 157h1v1h-1zM666 146h1v1h-1zM666 136h1v1h-1zM666 126h1v1h-1zM666 116h1v1h-1zM666 105h1v1h-1zM666 95h1v1h-1zM666 85h1v1h-1zM666 75h1v1h-1zM666 64h1v1h-1zM666 54h1v1h-1zM666 44h1v1h-1zM666 34h1v1h-1zM666 23h1v1h-1zM666 13h1v1h-1zM666 3h1v1h-1zM676 567h1v1h-1zM676 556h1v1h-1zM676 546h1v1h-1zM676 536h1v1h-1zM676 526h1v1h-1zM676 515h1v1h-1zM676 505h1v1h-1zM676 495h1v1h-1zM676 485h1v1h-1zM676 474h1v1h-1zM676 464h1v1h-1zM676 454h1v1h-1zM676 444h1v1h-1zM676 433h1v1h-1zM676 423h1v1h-1zM676 413h1v1h-1zM676 403h1v1h-1zM676 392h1v1h-1zM676 382h1v1h-1zM676 372h1v1h-1zM676 362h1v1h-1zM676 351h1v1h-1zM676 341h1v1h-1zM676 331h1v1h-1zM676 321h1v1h-1zM676 310h1v1h-1zM676 300h1v1h-1zM676 290h1v1h-1zM676 280h1v1h-1zM676 269h1v1h-1zM676 259h1v1h-1zM676 249h1v1h-1zM676 239h1v1h-1zM676 228h1v1h-1zM676 218h1v1h-1zM676 208h1v1h-1zM676 198h1v1h-1zM676 187h1v1h-1zM676 177h1v1h-1zM676 167h1v1h-1zM676 157h1v1h-1zM676 146h1v1h-1zM676 136h1v1h-1zM676 126h1v1h-1zM676 116h1v1h-1zM676 105h1v1h-1zM676 95h1v1h-1zM676 85h1v1h-1zM676 75h1v1h-1zM676 64h1v1h-1zM676 54h1v1h-1zM676 44h1v1h-1zM676 34h1v1h-1zM676 23h1v1h-1zM676 13h1v1h-1zM676 3h1v1h-1zM687 567h1v1h-1zM687 556h1v1h-1zM687 546h1v1h-1zM687 536h1v1h-1zM687 526h1v1h-1zM687 515h1v1h-1zM687 505h1v1h-1zM687 495h1v1h-1zM687 485h1v1h-1zM687 474h1v1h-1zM687 464h1v1h-1zM687 454h1v1h-1zM687 444h1v1h-1zM687 433h1v1h-1zM687 423h1v1h-1zM687 413h1v1h-1zM687 403h1v1h-1zM687 392h1v1h-1zM687 382h1v1h-1zM687 372h1v1h-1zM687 362h1v1h-1zM687 351h1v1h-1zM687 341h1v1h-1zM687 331h1v1h-1zM687 321h1v1h-1zM687 310h1v1h-1zM687 300h1v1h-1zM687 290h1v1h-1zM687 280h1v1h-1zM687 269h1v1h-1zM687 259h1v1h-1zM687 249h1v1h-1zM687 239h1v1h-1zM687 228h1v1h-1zM687 218h1v1h-1zM687 208h1v1h-1zM687 198h1v1h-1zM687 187h1v1h-1zM687 177h1v1h-1zM687 167h1v1h-1zM687 157h1v1h-1zM687 146h1v1h-1zM687 136h1v1h-1zM687 126h1v1h-1zM687 116h1v1h-1zM687 105h1v1h-1zM687 95h1v1h-1zM687 85h1v1h-1zM687 75h1v1h-1zM687 64h1v1h-1zM687 54h1v1h-1zM687 44h1v1h-1zM687 34h1v1h-1zM687 23h1v1h-1zM687 13h1v1h-1zM687 3h1v1h-1zM697 567h1v1h-1zM697 556h1v1h-1zM697 546h1v1h-1zM697 536h1v1h-1zM697 526h1v1h-1zM697 515h1v1h-1zM697 505h1v1h-1zM697 495h1v1h-1zM697 485h1v1h-1zM697 474h1v1h-1zM697 464h1v1h-1zM697 454h1v1h-1zM697 444h1v1h-1zM697 433h1v1h-1zM697 423h1v1h-1zM697 413h1v1h-1zM697 403h1v1h-1zM697 392h1v1h-1zM697 382h1v1h-1zM697 372h1v1h-1zM697 362h1v1h-1zM697 351h1v1h-1zM697 341h1v1h-1zM697 331h1v1h-1zM697 321h1v1h-1zM697 310h1v1h-1zM697 300h1v1h-1zM697 290h1v1h-1zM697 280h1v1h-1zM697 269h1v1h-1zM697 259h1v1h-1zM697 249h1v1h-1zM697 239h1v1h-1zM697 228h1v1h-1zM697 218h1v1h-1zM697 208h1v1h-1zM697 198h1v1h-1zM697 187h1v1h-1zM697 177h1v1h-1zM697 167h1v1h-1zM697 157h1v1h-1zM697 146h1v1h-1zM697 136h1v1h-1zM697 126h1v1h-1zM697 116h1v1h-1zM697 105h1v1h-1zM697 95h1v1h-1zM697 85h1v1h-1zM697 75h1v1h-1zM697 64h1v1h-1zM697 54h1v1h-1zM697 44h1v1h-1zM697 34h1v1h-1zM697 23h1v1h-1zM697 13h1v1h-1zM697 3h1v1h-1zM707 567h1v1h-1zM707 556h1v1h-1zM707 546h1v1h-1zM707 536h1v1h-1zM707 526h1v1h-1zM707 515h1v1h-1zM707 505h1v1h-1zM707 495h1v1h-1zM707 485h1v1h-1zM707 474h1v1h-1zM707 464h1v1h-1zM707 454h1v1h-1zM707 444h1v1h-1zM707 433h1v1h-1zM707 423h1v1h-1zM707 413h1v1h-1zM707 403h1v1h-1zM707 392h1v1h-1zM707 382h1v1h-1zM707 372h1v1h-1zM707 362h1v1h-1zM707 351h1v1h-1zM707 341h1v1h-1zM707 331h1v1h-1zM707 321h1v1h-1zM707 310h1v1h-1zM707 300h1v1h-1zM707 290h1v1h-1zM707 280h1v1h-1zM707 269h1v1h-1zM707 259h1v1h-1zM707 249h1v1h-1zM707 239h1v1h-1zM707 228h1v1h-1zM707 218h1v1h-1zM707 208h1v1h-1zM707 198h1v1h-1zM707 187h1v1h-1zM707 177h1v1h-1zM707 167h1v1h-1zM707 157h1v1h-1zM707 146h1v1h-1zM707 136h1v1h-1zM707 126h1v1h-1zM707 116h1v1h-1zM707 105h1v1h-1zM707 95h1v1h-1zM707 85h1v1h-1zM707 75h1v1h-1zM707 64h1v1h-1zM707 54h1v1h-1zM707 44h1v1h-1zM707 34h1v1h-1zM707 23h1v1h-1zM707 13h1v1h-1zM707 3h1v1h-1zM717 567h1v1h-1zM717 556h1v1h-1zM717 546h1v1h-1zM717 536h1v1h-1zM717 526h1v1h-1zM717 515h1v1h-1zM717 505h1v1h-1zM717 495h1v1h-1zM717 485h1v1h-1zM717 474h1v1h-1zM717 464h1v1h-1zM717 454h1v1h-1zM717 444h1v1h-1zM717 433h1v1h-1zM717 423h1v1h-1zM717 413h1v1h-1zM717 403h1v1h-1zM717 392h1v1h-1zM717 382h1v1h-1zM717 372h1v1h-1zM717 362h1v1h-1zM717 351h1v1h-1zM717 341h1v1h-1zM717 331h1v1h-1zM717 321h1v1h-1zM717 310h1v1h-1zM717 300h1v1h-1zM717 290h1v1h-1zM717 280h1v1h-1zM717 269h1v1h-1zM717 259h1v1h-1zM717 249h1v1h-1zM717 239h1v1h-1zM717 228h1v1h-1zM717 218h1v1h-1zM717 208h1v1h-1zM717 198h1v1h-1zM717 187h1v1h-1zM717 177h1v1h-1zM717 167h1v1h-1zM717 157h1v1h-1zM717 146h1v1h-1zM717 136h1v1h-1zM717 126h1v1h-1zM717 116h1v1h-1zM717 105h1v1h-1zM717 95h1v1h-1zM717 85h1v1h-1zM717 75h1v1h-1zM717 64h1v1h-1zM717 54h1v1h-1zM717 44h1v1h-1zM717 34h1v1h-1zM717 23h1v1h-1zM717 13h1v1h-1zM717 3h1v1h-1zM728 567h1v1h-1zM728 556h1v1h-1zM728 546h1v1h-1zM728 536h1v1h-1zM728 526h1v1h-1zM728 515h1v1h-1zM728 505h1v1h-1zM728 495h1v1h-1zM728 485h1v1h-1zM728 474h1v1h-1zM728 464h1v1h-1zM728 454h1v1h-1zM728 444h1v1h-1zM728 433h1v1h-1zM728 423h1v1h-1zM728 413h1v1h-1zM728 403h1v1h-1zM728 392h1v1h-1zM728 382h1v1h-1zM728 372h1v1h-1zM728 362h1v1h-1zM728 351h1v1h-1zM728 341h1v1h-1zM728 331h1v1h-1zM728 321h1v1h-1zM728 310h1v1h-1zM728 300h1v1h-1zM728 290h1v1h-1zM728 280h1v1h-1zM728 269h1v1h-1zM728 259h1v1h-1zM728 249h1v1h-1zM728 239h1v1h-1zM728 228h1v1h-1zM728 218h1v1h-1zM728 208h1v1h-1zM728 198h1v1h-1zM728 187h1v1h-1zM728 177h1v1h-1zM728 167h1v1h-1zM728 157h1v1h-1zM728 146h1v1h-1zM728 136h1v1h-1zM728 126h1v1h-1zM728 116h1v1h-1zM728 105h1v1h-1zM728 95h1v1h-1zM728 85h1v1h-1zM728 75h1v1h-1zM728 64h1v1h-1zM728 54h1v1h-1zM728 44h1v1h-1zM728 34h1v1h-1zM728 23h1v1h-1zM728 13h1v1h-1zM728 3h1v1h-1zM738 567h1v1h-1zM738 556h1v1h-1zM738 546h1v1h-1zM738 536h1v1h-1zM738 526h1v1h-1zM738 515h1v1h-1zM738 505h1v1h-1zM738 495h1v1h-1zM738 485h1v1h-1zM738 474h1v1h-1zM738 464h1v1h-1zM738 454h1v1h-1zM738 444h1v1h-1zM738 433h1v1h-1zM738 423h1v1h-1zM738 413h1v1h-1zM738 403h1v1h-1zM738 392h1v1h-1zM738 382h1v1h-1zM738 372h1v1h-1zM738 362h1v1h-1zM738 351h1v1h-1zM738 341h1v1h-1zM738 331h1v1h-1zM738 321h1v1h-1zM738 310h1v1h-1zM738 300h1v1h-1zM738 290h1v1h-1zM738 280h1v1h-1zM738 269h1v1h-1zM738 259h1v1h-1zM738 249h1v1h-1zM738 239h1v1h-1zM738 228h1v1h-1zM738 218h1v1h-1zM738 208h1v1h-1zM738 198h1v1h-1zM738 187h1v1h-1zM738 177h1v1h-1zM738 167h1v1h-1zM738 157h1v1h-1zM738 146h1v1h-1zM738 136h1v1h-1zM738 126h1v1h-1zM738 116h1v1h-1zM738 105h1v1h-1zM738 95h1v1h-1zM738 85h1v1h-1zM738 75h1v1h-1zM738 64h1v1h-1zM738 54h1v1h-1zM738 44h1v1h-1zM738 34h1v1h-1zM738 23h1v1h-1zM738 13h1v1h-1zM738 3h1v1h-1zM748 567h1v1h-1zM748 556h1v1h-1zM748 546h1v1h-1zM748 536h1v1h-1zM748 526h1v1h-1zM748 515h1v1h-1zM748 505h1v1h-1zM748 495h1v1h-1zM748 485h1v1h-1zM748 474h1v1h-1zM748 464h1v1h-1zM748 454h1v1h-1zM748 444h1v1h-1zM748 433h1v1h-1zM748 423h1v1h-1zM748 413h1v1h-1zM748 403h1v1h-1zM748 392h1v1h-1zM748 382h1v1h-1zM748 372h1v1h-1zM748 362h1v1h-1zM748 351h1v1h-1zM748 341h1v1h-1zM748 331h1v1h-1zM748 321h1v1h-1zM748 310h1v1h-1zM748 300h1v1h-1zM748 290h1v1h-1zM748 280h1v1h-1zM748 269h1v1h-1zM748 259h1v1h-1zM748 249h1v1h-1zM748 239h1v1h-1zM748 228h1v1h-1zM748 218h1v1h-1zM748 208h1v1h-1zM748 198h1v1h-1zM748 187h1v1h-1zM748 177h1v1h-1zM748 167h1v1h-1zM748 157h1v1h-1zM748 146h1v1h-1zM748 136h1v1h-1zM748 126h1v1h-1zM748 116h1v1h-1zM748 105h1v1h-1zM748 95h1v1h-1zM748 85h1v1h-1zM748 75h1v1h-1zM748 64h1v1h-1zM748 54h1v1h-1zM748 44h1v1h-1zM748 34h1v1h-1zM748 23h1v1h-1zM748 13h1v1h-1zM748 3h1v1h-1zM758 567h1v1h-1zM758 556h1v1h-1zM758 546h1v1h-1zM758 536h1v1h-1zM758 526h1v1h-1zM758 515h1v1h-1zM758 505h1v1h-1zM758 495h1v1h-1zM758 485h1v1h-1zM758 474h1v1h-1zM758 464h1v1h-1zM758 454h1v1h-1zM758 444h1v1h-1zM758 433h1v1h-1zM758 423h1v1h-1zM758 413h1v1h-1zM758 403h1v1h-1zM758 392h1v1h-1zM758 382h1v1h-1zM758 372h1v1h-1zM758 362h1v1h-1zM758 351h1v1h-1zM758 341h1v1h-1zM758 331h1v1h-1zM758 321h1v1h-1zM758 310h1v1h-1zM758 300h1v1h-1zM758 290h1v1h-1zM758 280h1v1h-1zM758 269h1v1h-1zM758 259h1v1h-1zM758 249h1v1h-1zM758 239h1v1h-1zM758 228h1v1h-1zM758 218h1v1h-1zM758 208h1v1h-1zM758 198h1v1h-1zM758 187h1v1h-1zM758 177h1v1h-1zM758 167h1v1h-1zM758 157h1v1h-1zM758 146h1v1h-1zM758 136h1v1h-1zM758 126h1v1h-1zM758 116h1v1h-1zM758 105h1v1h-1zM758 95h1v1h-1zM758 85h1v1h-1zM758 75h1v1h-1zM758 64h1v1h-1zM758 54h1v1h-1zM758 44h1v1h-1zM758 34h1v1h-1zM758 23h1v1h-1zM758 13h1v1h-1zM758 3h1v1h-1zM769 567h1v1h-1zM769 556h1v1h-1zM769 546h1v1h-1zM769 536h1v1h-1zM769 526h1v1h-1zM769 515h1v1h-1zM769 505h1v1h-1zM769 495h1v1h-1zM769 485h1v1h-1zM769 474h1v1h-1zM769 464h1v1h-1zM769 454h1v1h-1zM769 444h1v1h-1zM769 433h1v1h-1zM769 423h1v1h-1zM769 413h1v1h-1zM769 403h1v1h-1zM769 392h1v1h-1zM769 382h1v1h-1zM769 372h1v1h-1zM769 362h1v1h-1zM769 351h1v1h-1zM769 341h1v1h-1zM769 331h1v1h-1zM769 321h1v1h-1zM769 310h1v1h-1zM769 300h1v1h-1zM769 290h1v1h-1zM769 280h1v1h-1zM769 269h1v1h-1zM769 259h1v1h-1zM769 249h1v1h-1zM769 239h1v1h-1zM769 228h1v1h-1zM769 218h1v1h-1zM769 208h1v1h-1zM769 198h1v1h-1zM769 187h1v1h-1zM769 177h1v1h-1zM769 167h1v1h-1zM769 157h1v1h-1zM769 146h1v1h-1zM769 136h1v1h-1zM769 126h1v1h-1zM769 116h1v1h-1zM769 105h1v1h-1zM769 95h1v1h-1zM769 85h1v1h-1zM769 75h1v1h-1zM769 64h1v1h-1zM769 54h1v1h-1zM769 44h1v1h-1zM769 34h1v1h-1zM769 23h1v1h-1zM769 13h1v1h-1zM769 3h1v1h-1zM779 567h1v1h-1zM779 556h1v1h-1zM779 546h1v1h-1zM779 536h1v1h-1zM779 526h1v1h-1zM779 515h1v1h-1zM779 505h1v1h-1zM779 495h1v1h-1zM779 485h1v1h-1zM779 474h1v1h-1zM779 464h1v1h-1zM779 454h1v1h-1zM779 444h1v1h-1zM779 433h1v1h-1zM779 423h1v1h-1zM779 413h1v1h-1zM779 403h1v1h-1zM779 392h1v1h-1zM779 382h1v1h-1zM779 372h1v1h-1zM779 362h1v1h-1zM779 351h1v1h-1zM779 341h1v1h-1zM779 331h1v1h-1zM779 321h1v1h-1zM779 310h1v1h-1zM779 300h1v1h-1zM779 290h1v1h-1zM779 280h1v1h-1zM779 269h1v1h-1zM779 259h1v1h-1zM779 249h1v1h-1zM779 239h1v1h-1zM779 228h1v1h-1zM779 218h1v1h-1zM779 208h1v1h-1zM779 198h1v1h-1zM779 187h1v1h-1zM779 177h1v1h-1zM779 167h1v1h-1zM779 157h1v1h-1zM779 146h1v1h-1zM779 136h1v1h-1zM779 126h1v1h-1zM779 116h1v1h-1zM779 105h1v1h-1zM779 95h1v1h-1zM779 85h1v1h-1zM779 75h1v1h-1zM779 64h1v1h-1zM779 54h1v1h-1zM779 44h1v1h-1zM779 34h1v1h-1zM779 23h1v1h-1zM779 13h1v1h-1zM779 3h1v1h-1zM789 567h1v1h-1zM789 556h1v1h-1zM789 546h1v1h-1zM789 536h1v1h-1zM789 526h1v1h-1zM789 515h1v1h-1zM789 505h1v1h-1zM789 495h1v1h-1zM789 485h1v1h-1zM789 474h1v1h-1zM789 464h1v1h-1zM789 454h1v1h-1zM789 444h1v1h-1zM789 433h1v1h-1zM789 423h1v1h-1zM789 413h1v1h-1zM789 403h1v1h-1zM789 392h1v1h-1zM789 382h1v1h-1zM789 372h1v1h-1zM789 362h1v1h-1zM789 351h1v1h-1zM789 341h1v1h-1zM789 331h1v1h-1zM789 321h1v1h-1zM789 310h1v1h-1zM789 300h1v1h-1zM789 290h1v1h-1zM789 280h1v1h-1zM789 269h1v1h-1zM789 259h1v1h-1zM789 249h1v1h-1zM789 239h1v1h-1zM789 228h1v1h-1zM789 218h1v1h-1zM789 208h1v1h-1zM789 198h1v1h-1zM789 187h1v1h-1zM789 177h1v1h-1zM789 167h1v1h-1zM789 157h1v1h-1zM789 146h1v1h-1zM789 136h1v1h-1zM789 126h1v1h-1zM789 116h1v1h-1zM789 105h1v1h-1zM789 95h1v1h-1zM789 85h1v1h-1zM789 75h1v1h-1zM789 64h1v1h-1zM789 54h1v1h-1zM789 44h1v1h-1zM789 34h1v1h-1zM789 23h1v1h-1zM789 13h1v1h-1zM789 3h1v1h-1zM799 567h1v1h-1zM799 556h1v1h-1zM799 546h1v1h-1zM799 536h1v1h-1zM799 526h1v1h-1zM799 515h1v1h-1zM799 505h1v1h-1zM799 495h1v1h-1zM799 485h1v1h-1zM799 474h1v1h-1zM799 464h1v1h-1zM799 454h1v1h-1zM799 444h1v1h-1zM799 433h1v1h-1zM799 423h1v1h-1zM799 413h1v1h-1zM799 403h1v1h-1zM799 392h1v1h-1zM799 382h1v1h-1zM799 372h1v1h-1zM799 362h1v1h-1zM799 351h1v1h-1zM799 341h1v1h-1zM799 331h1v1h-1zM799 321h1v1h-1zM799 310h1v1h-1zM799 300h1v1h-1zM799 290h1v1h-1zM799 280h1v1h-1zM799 269h1v1h-1zM799 259h1v1h-1zM799 249h1v1h-1zM799 239h1v1h-1zM799 228h1v1h-1zM799 218h1v1h-1zM799 208h1v1h-1zM799 198h1v1h-1zM799 187h1v1h-1zM799 177h1v1h-1zM799 167h1v1h-1zM799 157h1v1h-1zM799 146h1v1h-1zM799 136h1v1h-1zM799 126h1v1h-1zM799 116h1v1h-1zM799 105h1v1h-1zM799 95h1v1h-1zM799 85h1v1h-1zM799 75h1v1h-1zM799 64h1v1h-1zM799 54h1v1h-1zM799 44h1v1h-1zM799 34h1v1h-1zM799 23h1v1h-1zM799 13h1v1h-1zM799 3h1v1h-1zM810 567h1v1h-1zM810 556h1v1h-1zM810 546h1v1h-1zM810 536h1v1h-1zM810 526h1v1h-1zM810 515h1v1h-1zM810 505h1v1h-1zM810 495h1v1h-1zM810 485h1v1h-1zM810 474h1v1h-1zM810 464h1v1h-1zM810 454h1v1h-1zM810 444h1v1h-1zM810 433h1v1h-1zM810 423h1v1h-1zM810 413h1v1h-1zM810 403h1v1h-1zM810 392h1v1h-1zM810 382h1v1h-1zM810 372h1v1h-1zM810 362h1v1h-1zM810 351h1v1h-1zM810 341h1v1h-1zM810 331h1v1h-1zM810 321h1v1h-1zM810 310h1v1h-1zM810 300h1v1h-1zM810 290h1v1h-1zM810 280h1v1h-1zM810 269h1v1h-1zM810 259h1v1h-1zM810 249h1v1h-1zM810 239h1v1h-1zM810 228h1v1h-1zM810 218h1v1h-1zM810 208h1v1h-1zM810 198h1v1h-1zM810 187h1v1h-1zM810 177h1v1h-1zM810 167h1v1h-1zM810 157h1v1h-1zM810 146h1v1h-1zM810 136h1v1h-1zM810 126h1v1h-1zM810 116h1v1h-1zM810 105h1v1h-1zM810 95h1v1h-1zM810 85h1v1h-1zM810 75h1v1h-1zM810 64h1v1h-1zM810 54h1v1h-1zM810 44h1v1h-1zM810 34h1v1h-1zM810 23h1v1h-1zM810 13h1v1h-1zM810 3h1v1h-1zM820 567h1v1h-1zM820 556h1v1h-1zM820 546h1v1h-1zM820 536h1v1h-1zM820 526h1v1h-1zM820 515h1v1h-1zM820 505h1v1h-1zM820 495h1v1h-1zM820 485h1v1h-1zM820 474h1v1h-1zM820 464h1v1h-1zM820 454h1v1h-1zM820 444h1v1h-1zM820 433h1v1h-1zM820 423h1v1h-1zM820 413h1v1h-1zM820 403h1v1h-1zM820 392h1v1h-1zM820 382h1v1h-1zM820 372h1v1h-1zM820 362h1v1h-1zM820 351h1v1h-1zM820 341h1v1h-1zM820 331h1v1h-1zM820 321h1v1h-1zM820 310h1v1h-1zM820 300h1v1h-1zM820 290h1v1h-1zM820 280h1v1h-1zM820 269h1v1h-1zM820 259h1v1h-1zM820 249h1v1h-1zM820 239h1v1h-1zM820 228h1v1h-1zM820 218h1v1h-1zM820 208h1v1h-1zM820 198h1v1h-1zM820 187h1v1h-1zM820 177h1v1h-1zM820 167h1v1h-1zM820 157h1v1h-1zM820 146h1v1h-1zM820 136h1v1h-1zM820 126h1v1h-1zM820 116h1v1h-1zM820 105h1v1h-1zM820 95h1v1h-1zM820 85h1v1h-1zM820 75h1v1h-1zM820 64h1v1h-1zM820 54h1v1h-1zM820 44h1v1h-1zM820 34h1v1h-1zM820 23h1v1h-1zM820 13h1v1h-1zM820 3h1v1h-1zM830 567h1v1h-1zM830 556h1v1h-1zM830 546h1v1h-1zM830 536h1v1h-1zM830 526h1v1h-1zM830 515h1v1h-1zM830 505h1v1h-1zM830 495h1v1h-1zM830 485h1v1h-1zM830 474h1v1h-1zM830 464h1v1h-1zM830 454h1v1h-1zM830 444h1v1h-1zM830 433h1v1h-1zM830 423h1v1h-1zM830 413h1v1h-1zM830 403h1v1h-1zM830 392h1v1h-1zM830 382h1v1h-1zM830 372h1v1h-1zM830 362h1v1h-1zM830 351h1v1h-1zM830 341h1v1h-1zM830 331h1v1h-1zM830 321h1v1h-1zM830 310h1v1h-1zM830 300h1v1h-1zM830 290h1v1h-1zM830 280h1v1h-1zM830 269h1v1h-1zM830 259h1v1h-1zM830 249h1v1h-1zM830 239h1v1h-1zM830 228h1v1h-1zM830 218h1v1h-1zM830 208h1v1h-1zM830 198h1v1h-1zM830 187h1v1h-1zM830 177h1v1h-1zM830 167h1v1h-1zM830 157h1v1h-1zM830 146h1v1h-1zM830 136h1v1h-1zM830 126h1v1h-1zM830 116h1v1h-1zM830 105h1v1h-1zM830 95h1v1h-1zM830 85h1v1h-1zM830 75h1v1h-1zM830 64h1v1h-1zM830 54h1v1h-1zM830 44h1v1h-1zM830 34h1v1h-1zM830 23h1v1h-1zM830 13h1v1h-1zM830 3h1v1h-1zM840 567h1v1h-1zM840 556h1v1h-1zM840 546h1v1h-1zM840 536h1v1h-1zM840 526h1v1h-1zM840 515h1v1h-1zM840 505h1v1h-1zM840 495h1v1h-1zM840 485h1v1h-1zM840 474h1v1h-1zM840 464h1v1h-1zM840 454h1v1h-1zM840 444h1v1h-1zM840 433h1v1h-1zM840 423h1v1h-1zM840 413h1v1h-1zM840 403h1v1h-1zM840 392h1v1h-1zM840 382h1v1h-1zM840 372h1v1h-1zM840 362h1v1h-1zM840 351h1v1h-1zM840 341h1v1h-1zM840 331h1v1h-1zM840 321h1v1h-1zM840 310h1v1h-1zM840 300h1v1h-1zM840 290h1v1h-1zM840 280h1v1h-1zM840 269h1v1h-1zM840 259h1v1h-1zM840 249h1v1h-1zM840 239h1v1h-1zM840 228h1v1h-1zM840 218h1v1h-1zM840 208h1v1h-1zM840 198h1v1h-1zM840 187h1v1h-1zM840 177h1v1h-1zM840 167h1v1h-1zM840 157h1v1h-1zM840 146h1v1h-1zM840 136h1v1h-1zM840 126h1v1h-1zM840 116h1v1h-1zM840 105h1v1h-1zM840 95h1v1h-1zM840 85h1v1h-1zM840 75h1v1h-1zM840 64h1v1h-1zM840 54h1v1h-1zM840 44h1v1h-1zM840 34h1v1h-1zM840 23h1v1h-1zM840 13h1v1h-1zM840 3h1v1h-1zM851 567h1v1h-1zM851 556h1v1h-1zM851 546h1v1h-1zM851 536h1v1h-1zM851 526h1v1h-1zM851 515h1v1h-1zM851 505h1v1h-1zM851 495h1v1h-1zM851 485h1v1h-1zM851 474h1v1h-1zM851 464h1v1h-1zM851 454h1v1h-1zM851 444h1v1h-1zM851 433h1v1h-1zM851 423h1v1h-1zM851 413h1v1h-1zM851 403h1v1h-1zM851 392h1v1h-1zM851 382h1v1h-1zM851 372h1v1h-1zM851 362h1v1h-1zM851 351h1v1h-1zM851 341h1v1h-1zM851 331h1v1h-1zM851 321h1v1h-1zM851 310h1v1h-1zM851 300h1v1h-1zM851 290h1v1h-1zM851 280h1v1h-1zM851 269h1v1h-1zM851 259h1v1h-1zM851 249h1v1h-1zM851 239h1v1h-1zM851 228h1v1h-1zM851 218h1v1h-1zM851 208h1v1h-1zM851 198h1v1h-1zM851 187h1v1h-1zM851 177h1v1h-1zM851 167h1v1h-1zM851 157h1v1h-1zM851 146h1v1h-1zM851 136h1v1h-1zM851 126h1v1h-1zM851 116h1v1h-1zM851 105h1v1h-1zM851 95h1v1h-1zM851 85h1v1h-1zM851 75h1v1h-1zM851 64h1v1h-1zM851 54h1v1h-1zM851 44h1v1h-1zM851 34h1v1h-1zM851 23h1v1h-1zM851 13h1v1h-1zM851 3h1v1h-1zM861 567h1v1h-1zM861 556h1v1h-1zM861 546h1v1h-1zM861 536h1v1h-1zM861 526h1v1h-1zM861 515h1v1h-1zM861 505h1v1h-1zM861 495h1v1h-1zM861 485h1v1h-1zM861 474h1v1h-1zM861 464h1v1h-1zM861 454h1v1h-1zM861 444h1v1h-1zM861 433h1v1h-1zM861 423h1v1h-1zM861 413h1v1h-1zM861 403h1v1h-1zM861 392h1v1h-1zM861 382h1v1h-1zM861 372h1v1h-1zM861 362h1v1h-1zM861 351h1v1h-1zM861 341h1v1h-1zM861 331h1v1h-1zM861 321h1v1h-1zM861 310h1v1h-1zM861 300h1v1h-1zM861 290h1v1h-1zM861 280h1v1h-1zM861 269h1v1h-1zM861 259h1v1h-1zM861 249h1v1h-1zM861 239h1v1h-1zM861 228h1v1h-1zM861 218h1v1h-1zM861 208h1v1h-1zM861 198h1v1h-1zM861 187h1v1h-1zM861 177h1v1h-1zM861 167h1v1h-1zM861 157h1v1h-1zM861 146h1v1h-1zM861 136h1v1h-1zM861 126h1v1h-1zM861 116h1v1h-1zM861 105h1v1h-1zM861 95h1v1h-1zM861 85h1v1h-1zM861 75h1v1h-1zM861 64h1v1h-1zM861 54h1v1h-1zM861 44h1v1h-1zM861 34h1v1h-1zM861 23h1v1h-1zM861 13h1v1h-1zM861 3h1v1h-1zM871 567h1v1h-1zM871 556h1v1h-1zM871 546h1v1h-1zM871 536h1v1h-1zM871 526h1v1h-1zM871 515h1v1h-1zM871 505h1v1h-1zM871 495h1v1h-1zM871 485h1v1h-1zM871 474h1v1h-1zM871 464h1v1h-1zM871 454h1v1h-1zM871 444h1v1h-1zM871 433h1v1h-1zM871 423h1v1h-1zM871 413h1v1h-1zM871 403h1v1h-1zM871 392h1v1h-1zM871 382h1v1h-1zM871 372h1v1h-1zM871 362h1v1h-1zM871 351h1v1h-1zM871 341h1v1h-1zM871 331h1v1h-1zM871 321h1v1h-1zM871 310h1v1h-1zM871 300h1v1h-1zM871 290h1v1h-1zM871 280h1v1h-1zM871 269h1v1h-1zM871 259h1v1h-1zM871 249h1v1h-1zM871 239h1v1h-1zM871 228h1v1h-1zM871 218h1v1h-1zM871 208h1v1h-1zM871 198h1v1h-1zM871 187h1v1h-1zM871 177h1v1h-1zM871 167h1v1h-1zM871 157h1v1h-1zM871 146h1v1h-1zM871 136h1v1h-1zM871 126h1v1h-1zM871 116h1v1h-1zM871 105h1v1h-1zM871 95h1v1h-1zM871 85h1v1h-1zM871 75h1v1h-1zM871 64h1v1h-1zM871 54h1v1h-1zM871 44h1v1h-1zM871 34h1v1h-1zM871 23h1v1h-1zM871 13h1v1h-1zM871 3h1v1h-1zM881 567h1v1h-1zM881 556h1v1h-1zM881 546h1v1h-1zM881 536h1v1h-1zM881 526h1v1h-1zM881 515h1v1h-1zM881 505h1v1h-1zM881 495h1v1h-1zM881 485h1v1h-1zM881 474h1v1h-1zM881 464h1v1h-1zM881 454h1v1h-1zM881 444h1v1h-1zM881 433h1v1h-1zM881 423h1v1h-1zM881 413h1v1h-1zM881 403h1v1h-1zM881 392h1v1h-1zM881 382h1v1h-1zM881 372h1v1h-1zM881 362h1v1h-1zM881 351h1v1h-1zM881 341h1v1h-1zM881 331h1v1h-1zM881 321h1v1h-1zM881 310h1v1h-1zM881 300h1v1h-1zM881 290h1v1h-1zM881 280h1v1h-1zM881 269h1v1h-1zM881 259h1v1h-1zM881 249h1v1h-1zM881 239h1v1h-1zM881 228h1v1h-1zM881 218h1v1h-1zM881 208h1v1h-1zM881 198h1v1h-1zM881 187h1v1h-1zM881 177h1v1h-1zM881 167h1v1h-1zM881 157h1v1h-1zM881 146h1v1h-1zM881 136h1v1h-1zM881 126h1v1h-1zM881 116h1v1h-1zM881 105h1v1h-1zM881 95h1v1h-1zM881 85h1v1h-1zM881 75h1v1h-1zM881 64h1v1h-1zM881 54h1v1h-1zM881 44h1v1h-1zM881 34h1v1h-1zM881 23h1v1h-1zM881 13h1v1h-1zM881 3h1v1h-1zM892 567h1v1h-1zM892 556h1v1h-1zM892 546h1v1h-1zM892 536h1v1h-1zM892 526h1v1h-1zM892 515h1v1h-1zM892 505h1v1h-1zM892 495h1v1h-1zM892 485h1v1h-1zM892 474h1v1h-1zM892 464h1v1h-1zM892 454h1v1h-1zM892 444h1v1h-1zM892 433h1v1h-1zM892 423h1v1h-1zM892 413h1v1h-1zM892 403h1v1h-1zM892 392h1v1h-1zM892 382h1v1h-1zM892 372h1v1h-1zM892 362h1v1h-1zM892 351h1v1h-1zM892 341h1v1h-1zM892 331h1v1h-1zM892 321h1v1h-1zM892 310h1v1h-1zM892 300h1v1h-1zM892 290h1v1h-1zM892 280h1v1h-1zM892 269h1v1h-1zM892 259h1v1h-1zM892 249h1v1h-1zM892 239h1v1h-1zM892 228h1v1h-1zM892 218h1v1h-1zM892 208h1v1h-1zM892 198h1v1h-1zM892 187h1v1h-1zM892 177h1v1h-1zM892 167h1v1h-1zM892 157h1v1h-1zM892 146h1v1h-1zM892 136h1v1h-1zM892 126h1v1h-1zM892 116h1v1h-1zM892 105h1v1h-1zM892 95h1v1h-1zM892 85h1v1h-1zM892 75h1v1h-1zM892 64h1v1h-1zM892 54h1v1h-1zM892 44h1v1h-1zM892 34h1v1h-1zM892 23h1v1h-1zM892 13h1v1h-1zM892 3h1v1h-1zM902 567h1v1h-1zM902 556h1v1h-1zM902 546h1v1h-1zM902 536h1v1h-1zM902 526h1v1h-1zM902 515h1v1h-1zM902 505h1v1h-1zM902 495h1v1h-1zM902 485h1v1h-1zM902 474h1v1h-1zM902 464h1v1h-1zM902 454h1v1h-1zM902 444h1v1h-1zM902 433h1v1h-1zM902 423h1v1h-1zM902 413h1v1h-1zM902 403h1v1h-1zM902 392h1v1h-1zM902 382h1v1h-1zM902 372h1v1h-1zM902 362h1v1h-1zM902 351h1v1h-1zM902 341h1v1h-1zM902 331h1v1h-1zM902 321h1v1h-1zM902 310h1v1h-1zM902 300h1v1h-1zM902 290h1v1h-1zM902 280h1v1h-1zM902 269h1v1h-1zM902 259h1v1h-1zM902 249h1v1h-1zM902 239h1v1h-1zM902 228h1v1h-1zM902 218h1v1h-1zM902 208h1v1h-1zM902 198h1v1h-1zM902 187h1v1h-1zM902 177h1v1h-1zM902 167h1v1h-1zM902 157h1v1h-1zM902 146h1v1h-1zM902 136h1v1h-1zM902 126h1v1h-1zM902 116h1v1h-1zM902 105h1v1h-1zM902 95h1v1h-1zM902 85h1v1h-1zM902 75h1v1h-1zM902 64h1v1h-1zM902 54h1v1h-1zM902 44h1v1h-1zM902 34h1v1h-1zM902 23h1v1h-1zM902 13h1v1h-1zM902 3h1v1h-1zM912 567h1v1h-1zM912 556h1v1h-1zM912 546h1v1h-1zM912 536h1v1h-1zM912 526h1v1h-1zM912 515h1v1h-1zM912 505h1v1h-1zM912 495h1v1h-1zM912 485h1v1h-1zM912 474h1v1h-1zM912 464h1v1h-1zM912 454h1v1h-1zM912 444h1v1h-1zM912 433h1v1h-1zM912 423h1v1h-1zM912 413h1v1h-1zM912 403h1v1h-1zM912 392h1v1h-1zM912 382h1v1h-1zM912 372h1v1h-1zM912 362h1v1h-1zM912 351h1v1h-1zM912 341h1v1h-1zM912 331h1v1h-1zM912 321h1v1h-1zM912 310h1v1h-1zM912 300h1v1h-1zM912 290h1v1h-1zM912 280h1v1h-1zM912 269h1v1h-1zM912 259h1v1h-1zM912 249h1v1h-1zM912 239h1v1h-1zM912 228h1v1h-1zM912 218h1v1h-1zM912 208h1v1h-1zM912 198h1v1h-1zM912 187h1v1h-1zM912 177h1v1h-1zM912 167h1v1h-1zM912 157h1v1h-1zM912 146h1v1h-1zM912 136h1v1h-1zM912 126h1v1h-1zM912 116h1v1h-1zM912 105h1v1h-1zM912 95h1v1h-1zM912 85h1v1h-1zM912 75h1v1h-1zM912 64h1v1h-1zM912 54h1v1h-1zM912 44h1v1h-1zM912 34h1v1h-1zM912 23h1v1h-1zM912 13h1v1h-1zM912 3h1v1h-1zM922 567h1v1h-1zM922 556h1v1h-1zM922 546h1v1h-1zM922 536h1v1h-1zM922 526h1v1h-1zM922 515h1v1h-1zM922 505h1v1h-1zM922 495h1v1h-1zM922 485h1v1h-1zM922 474h1v1h-1zM922 464h1v1h-1zM922 454h1v1h-1zM922 444h1v1h-1zM922 433h1v1h-1zM922 423h1v1h-1zM922 413h1v1h-1zM922 403h1v1h-1zM922 392h1v1h-1zM922 382h1v1h-1zM922 372h1v1h-1zM922 362h1v1h-1zM922 351h1v1h-1zM922 341h1v1h-1zM922 331h1v1h-1zM922 321h1v1h-1zM922 310h1v1h-1zM922 300h1v1h-1zM922 290h1v1h-1zM922 280h1v1h-1zM922 269h1v1h-1zM922 259h1v1h-1zM922 249h1v1h-1zM922 239h1v1h-1zM922 228h1v1h-1zM922 218h1v1h-1zM922 208h1v1h-1zM922 198h1v1h-1zM922 187h1v1h-1zM922 177h1v1h-1zM922 167h1v1h-1zM922 157h1v1h-1zM922 146h1v1h-1zM922 136h1v1h-1zM922 126h1v1h-1zM922 116h1v1h-1zM922 105h1v1h-1zM922 95h1v1h-1zM922 85h1v1h-1zM922 75h1v1h-1zM922 64h1v1h-1zM922 54h1v1h-1zM922 44h1v1h-1zM922 34h1v1h-1zM922 23h1v1h-1zM922 13h1v1h-1zM922 3h1v1h-1zM933 567h1v1h-1zM933 556h1v1h-1zM933 546h1v1h-1zM933 536h1v1h-1zM933 526h1v1h-1zM933 515h1v1h-1zM933 505h1v1h-1zM933 495h1v1h-1zM933 485h1v1h-1zM933 474h1v1h-1zM933 464h1v1h-1zM933 454h1v1h-1zM933 444h1v1h-1zM933 433h1v1h-1zM933 423h1v1h-1zM933 413h1v1h-1zM933 403h1v1h-1zM933 392h1v1h-1zM933 382h1v1h-1zM933 372h1v1h-1zM933 362h1v1h-1zM933 351h1v1h-1zM933 341h1v1h-1zM933 331h1v1h-1zM933 321h1v1h-1zM933 310h1v1h-1zM933 300h1v1h-1zM933 290h1v1h-1zM933 280h1v1h-1zM933 269h1v1h-1zM933 259h1v1h-1zM933 249h1v1h-1zM933 239h1v1h-1zM933 228h1v1h-1zM933 218h1v1h-1zM933 208h1v1h-1zM933 198h1v1h-1zM933 187h1v1h-1zM933 177h1v1h-1zM933 167h1v1h-1zM933 157h1v1h-1zM933 146h1v1h-1zM933 136h1v1h-1zM933 126h1v1h-1zM933 116h1v1h-1zM933 105h1v1h-1zM933 95h1v1h-1zM933 85h1v1h-1zM933 75h1v1h-1zM933 64h1v1h-1zM933 54h1v1h-1zM933 44h1v1h-1zM933 34h1v1h-1zM933 23h1v1h-1zM933 13h1v1h-1zM933 3h1v1h-1zM943 567h1v1h-1zM943 556h1v1h-1zM943 546h1v1h-1zM943 536h1v1h-1zM943 526h1v1h-1zM943 515h1v1h-1zM943 505h1v1h-1zM943 495h1v1h-1zM943 485h1v1h-1zM943 474h1v1h-1zM943 464h1v1h-1zM943 454h1v1h-1zM943 444h1v1h-1zM943 433h1v1h-1zM943 423h1v1h-1zM943 413h1v1h-1zM943 403h1v1h-1zM943 392h1v1h-1zM943 382h1v1h-1zM943 372h1v1h-1zM943 362h1v1h-1zM943 351h1v1h-1zM943 341h1v1h-1zM943 331h1v1h-1zM943 321h1v1h-1zM943 310h1v1h-1zM943 300h1v1h-1zM943 290h1v1h-1zM943 280h1v1h-1zM943 269h1v1h-1zM943 259h1v1h-1zM943 249h1v1h-1zM943 239h1v1h-1zM943 228h1v1h-1zM943 218h1v1h-1zM943 208h1v1h-1zM943 198h1v1h-1zM943 187h1v1h-1zM943 177h1v1h-1zM943 167h1v1h-1zM943 157h1v1h-1zM943 146h1v1h-1zM943 136h1v1h-1zM943 126h1v1h-1zM943 116h1v1h-1zM943 105h1v1h-1zM943 95h1v1h-1zM943 85h1v1h-1zM943 75h1v1h-1zM943 64h1v1h-1zM943 54h1v1h-1zM943 44h1v1h-1zM943 34h1v1h-1zM943 23h1v1h-1zM943 13h1v1h-1zM943 3h1v1h-1zM953 567h1v1h-1zM953 556h1v1h-1zM953 546h1v1h-1zM953 536h1v1h-1zM953 526h1v1h-1zM953 515h1v1h-1zM953 505h1v1h-1zM953 495h1v1h-1zM953 485h1v1h-1zM953 474h1v1h-1zM953 464h1v1h-1zM953 454h1v1h-1zM953 444h1v1h-1zM953 433h1v1h-1zM953 423h1v1h-1zM953 413h1v1h-1zM953 403h1v1h-1zM953 392h1v1h-1zM953 382h1v1h-1zM953 372h1v1h-1zM953 362h1v1h-1zM953 351h1v1h-1zM953 341h1v1h-1zM953 331h1v1h-1zM953 321h1v1h-1zM953 310h1v1h-1zM953 300h1v1h-1zM953 290h1v1h-1zM953 280h1v1h-1zM953 269h1v1h-1zM953 259h1v1h-1zM953 249h1v1h-1zM953 239h1v1h-1zM953 228h1v1h-1zM953 218h1v1h-1zM953 208h1v1h-1zM953 198h1v1h-1zM953 187h1v1h-1zM953 177h1v1h-1zM953 167h1v1h-1zM953 157h1v1h-1zM953 146h1v1h-1zM953 136h1v1h-1zM953 126h1v1h-1zM953 116h1v1h-1zM953 105h1v1h-1zM953 95h1v1h-1zM953 85h1v1h-1zM953 75h1v1h-1zM953 64h1v1h-1zM953 54h1v1h-1zM953 44h1v1h-1zM953 34h1v1h-1zM953 23h1v1h-1zM953 13h1v1h-1zM953 3h1v1h-1zM963 567h1v1h-1zM963 556h1v1h-1zM963 546h1v1h-1zM963 536h1v1h-1zM963 526h1v1h-1zM963 515h1v1h-1zM963 505h1v1h-1zM963 495h1v1h-1zM963 485h1v1h-1zM963 474h1v1h-1zM963 464h1v1h-1zM963 454h1v1h-1zM963 444h1v1h-1zM963 433h1v1h-1zM963 423h1v1h-1zM963 413h1v1h-1zM963 403h1v1h-1zM963 392h1v1h-1zM963 382h1v1h-1zM963 372h1v1h-1zM963 362h1v1h-1zM963 351h1v1h-1zM963 341h1v1h-1zM963 331h1v1h-1zM963 321h1v1h-1zM963 310h1v1h-1zM963 300h1v1h-1zM963 290h1v1h-1zM963 280h1v1h-1zM963 269h1v1h-1zM963 259h1v1h-1zM963 249h1v1h-1zM963 239h1v1h-1zM963 228h1v1h-1zM963 218h1v1h-1zM963 208h1v1h-1zM963 198h1v1h-1zM963 187h1v1h-1zM963 177h1v1h-1zM963 167h1v1h-1zM963 157h1v1h-1zM963 146h1v1h-1zM963 136h1v1h-1zM963 126h1v1h-1zM963 116h1v1h-1zM963 105h1v1h-1zM963 95h1v1h-1zM963 85h1v1h-1zM963 75h1v1h-1zM963 64h1v1h-1zM963 54h1v1h-1zM963 44h1v1h-1zM963 34h1v1h-1zM963 23h1v1h-1zM963 13h1v1h-1zM963 3h1v1h-1zM974 567h1v1h-1zM974 556h1v1h-1zM974 546h1v1h-1zM974 536h1v1h-1zM974 526h1v1h-1zM974 515h1v1h-1zM974 505h1v1h-1zM974 495h1v1h-1zM974 485h1v1h-1zM974 474h1v1h-1zM974 464h1v1h-1zM974 454h1v1h-1zM974 444h1v1h-1zM974 433h1v1h-1zM974 423h1v1h-1zM974 413h1v1h-1zM974 403h1v1h-1zM974 392h1v1h-1zM974 382h1v1h-1zM974 372h1v1h-1zM974 362h1v1h-1zM974 351h1v1h-1zM974 341h1v1h-1zM974 331h1v1h-1zM974 321h1v1h-1zM974 310h1v1h-1zM974 300h1v1h-1zM974 290h1v1h-1zM974 280h1v1h-1zM974 269h1v1h-1zM974 259h1v1h-1zM974 249h1v1h-1zM974 239h1v1h-1zM974 228h1v1h-1zM974 218h1v1h-1zM974 208h1v1h-1zM974 198h1v1h-1zM974 187h1v1h-1zM974 177h1v1h-1zM974 167h1v1h-1zM974 157h1v1h-1zM974 146h1v1h-1zM974 136h1v1h-1zM974 126h1v1h-1zM974 116h1v1h-1zM974 105h1v1h-1zM974 95h1v1h-1zM974 85h1v1h-1zM974 75h1v1h-1zM974 64h1v1h-1zM974 54h1v1h-1zM974 44h1v1h-1zM974 34h1v1h-1zM974 23h1v1h-1zM974 13h1v1h-1zM974 3h1v1h-1zM984 567h1v1h-1zM984 556h1v1h-1zM984 546h1v1h-1zM984 536h1v1h-1zM984 526h1v1h-1zM984 515h1v1h-1zM984 505h1v1h-1zM984 495h1v1h-1zM984 485h1v1h-1zM984 474h1v1h-1zM984 464h1v1h-1zM984 454h1v1h-1zM984 444h1v1h-1zM984 433h1v1h-1zM984 423h1v1h-1zM984 413h1v1h-1zM984 403h1v1h-1zM984 392h1v1h-1zM984 382h1v1h-1zM984 372h1v1h-1zM984 362h1v1h-1zM984 351h1v1h-1zM984 341h1v1h-1zM984 331h1v1h-1zM984 321h1v1h-1zM984 310h1v1h-1zM984 300h1v1h-1zM984 290h1v1h-1zM984 280h1v1h-1zM984 269h1v1h-1zM984 259h1v1h-1zM984 249h1v1h-1zM984 239h1v1h-1zM984 228h1v1h-1zM984 218h1v1h-1zM984 208h1v1h-1zM984 198h1v1h-1zM984 187h1v1h-1zM984 177h1v1h-1zM984 167h1v1h-1zM984 157h1v1h-1zM984 146h1v1h-1zM984 136h1v1h-1zM984 126h1v1h-1zM984 116h1v1h-1zM984 105h1v1h-1zM984 95h1v1h-1zM984 85h1v1h-1zM984 75h1v1h-1zM984 64h1v1h-1zM984 54h1v1h-1zM984 44h1v1h-1zM984 34h1v1h-1zM984 23h1v1h-1zM984 13h1v1h-1zM984 3h1v1h-1zM994 567h1v1h-1zM994 556h1v1h-1zM994 546h1v1h-1zM994 536h1v1h-1zM994 526h1v1h-1zM994 515h1v1h-1zM994 505h1v1h-1zM994 495h1v1h-1zM994 485h1v1h-1zM994 474h1v1h-1zM994 464h1v1h-1zM994 454h1v1h-1zM994 444h1v1h-1zM994 433h1v1h-1zM994 423h1v1h-1zM994 413h1v1h-1zM994 403h1v1h-1zM994 392h1v1h-1zM994 382h1v1h-1zM994 372h1v1h-1zM994 362h1v1h-1zM994 351h1v1h-1zM994 341h1v1h-1zM994 331h1v1h-1zM994 321h1v1h-1zM994 310h1v1h-1zM994 300h1v1h-1zM994 290h1v1h-1zM994 280h1v1h-1zM994 269h1v1h-1zM994 259h1v1h-1zM994 249h1v1h-1zM994 239h1v1h-1zM994 228h1v1h-1zM994 218h1v1h-1zM994 208h1v1h-1zM994 198h1v1h-1zM994 187h1v1h-1zM994 177h1v1h-1zM994 167h1v1h-1zM994 157h1v1h-1zM994 146h1v1h-1zM994 136h1v1h-1zM994 126h1v1h-1zM994 116h1v1h-1zM994 105h1v1h-1zM994 95h1v1h-1zM994 85h1v1h-1zM994 75h1v1h-1zM994 64h1v1h-1zM994 54h1v1h-1zM994 44h1v1h-1zM994 34h1v1h-1zM994 23h1v1h-1zM994 13h1v1h-1zM994 3h1v1h-1zM1004 567h1v1h-1zM1004 556h1v1h-1zM1004 546h1v1h-1zM1004 536h1v1h-1zM1004 526h1v1h-1zM1004 515h1v1h-1zM1004 505h1v1h-1zM1004 495h1v1h-1zM1004 485h1v1h-1zM1004 474h1v1h-1zM1004 464h1v1h-1zM1004 454h1v1h-1zM1004 444h1v1h-1zM1004 433h1v1h-1zM1004 423h1v1h-1zM1004 413h1v1h-1zM1004 403h1v1h-1zM1004 392h1v1h-1zM1004 382h1v1h-1zM1004 372h1v1h-1zM1004 362h1v1h-1zM1004 351h1v1h-1zM1004 341h1v1h-1zM1004 331h1v1h-1zM1004 321h1v1h-1zM1004 310h1v1h-1zM1004 300h1v1h-1zM1004 290h1v1h-1zM1004 280h1v1h-1zM1004 269h1v1h-1zM1004 259h1v1h-1zM1004 249h1v1h-1zM1004 239h1v1h-1zM1004 228h1v1h-1zM1004 218h1v1h-1zM1004 208h1v1h-1zM1004 198h1v1h-1zM1004 187h1v1h-1zM1004 177h1v1h-1zM1004 167h1v1h-1zM1004 157h1v1h-1zM1004 146h1v1h-1zM1004 136h1v1h-1zM1004 126h1v1h-1zM1004 116h1v1h-1zM1004 105h1v1h-1zM1004 95h1v1h-1zM1004 85h1v1h-1zM1004 75h1v1h-1zM1004 64h1v1h-1zM1004 54h1v1h-1zM1004 44h1v1h-1zM1004 34h1v1h-1zM1004 23h1v1h-1zM1004 13h1v1h-1zM1004 3h1v1h-1zM1015 567h1v1h-1zM1015 556h1v1h-1zM1015 546h1v1h-1zM1015 536h1v1h-1zM1015 526h1v1h-1zM1015 515h1v1h-1zM1015 505h1v1h-1zM1015 495h1v1h-1zM1015 485h1v1h-1zM1015 474h1v1h-1zM1015 464h1v1h-1zM1015 454h1v1h-1zM1015 444h1v1h-1zM1015 433h1v1h-1zM1015 423h1v1h-1zM1015 413h1v1h-1zM1015 403h1v1h-1zM1015 392h1v1h-1zM1015 382h1v1h-1zM1015 372h1v1h-1zM1015 362h1v1h-1zM1015 351h1v1h-1zM1015 341h1v1h-1zM1015 331h1v1h-1zM1015 321h1v1h-1zM1015 310h1v1h-1zM1015 300h1v1h-1zM1015 290h1v1h-1zM1015 280h1v1h-1zM1015 269h1v1h-1zM1015 259h1v1h-1zM1015 249h1v1h-1zM1015 239h1v1h-1zM1015 228h1v1h-1zM1015 218h1v1h-1zM1015 208h1v1h-1zM1015 198h1v1h-1zM1015 187h1v1h-1zM1015 177h1v1h-1zM1015 167h1v1h-1zM1015 157h1v1h-1zM1015 146h1v1h-1zM1015 136h1v1h-1zM1015 126h1v1h-1zM1015 116h1v1h-1zM1015 105h1v1h-1zM1015 95h1v1h-1zM1015 85h1v1h-1zM1015 75h1v1h-1zM1015 64h1v1h-1zM1015 54h1v1h-1zM1015 44h1v1h-1zM1015 34h1v1h-1zM1015 23h1v1h-1zM1015 13h1v1h-1zM1015 3h1v1h-1zM1025 567h1v1h-1zM1025 556h1v1h-1zM1025 546h1v1h-1zM1025 536h1v1h-1zM1025 526h1v1h-1zM1025 515h1v1h-1zM1025 505h1v1h-1zM1025 495h1v1h-1zM1025 485h1v1h-1zM1025 474h1v1h-1zM1025 464h1v1h-1zM1025 454h1v1h-1zM1025 444h1v1h-1zM1025 433h1v1h-1zM1025 423h1v1h-1zM1025 413h1v1h-1zM1025 403h1v1h-1zM1025 392h1v1h-1zM1025 382h1v1h-1zM1025 372h1v1h-1zM1025 362h1v1h-1zM1025 351h1v1h-1zM1025 341h1v1h-1zM1025 331h1v1h-1zM1025 321h1v1h-1zM1025 310h1v1h-1zM1025 300h1v1h-1zM1025 290h1v1h-1zM1025 280h1v1h-1zM1025 269h1v1h-1zM1025 259h1v1h-1zM1025 249h1v1h-1zM1025 239h1v1h-1zM1025 228h1v1h-1zM1025 218h1v1h-1zM1025 208h1v1h-1zM1025 198h1v1h-1zM1025 187h1v1h-1zM1025 177h1v1h-1zM1025 167h1v1h-1zM1025 157h1v1h-1zM1025 146h1v1h-1zM1025 136h1v1h-1zM1025 126h1v1h-1zM1025 116h1v1h-1zM1025 105h1v1h-1zM1025 95h1v1h-1zM1025 85h1v1h-1zM1025 75h1v1h-1zM1025 64h1v1h-1zM1025 54h1v1h-1zM1025 44h1v1h-1zM1025 34h1v1h-1zM1025 23h1v1h-1zM1025 13h1v1h-1zM1025 3h1v1h-1zM1035 567h1v1h-1zM1035 556h1v1h-1zM1035 546h1v1h-1zM1035 536h1v1h-1zM1035 526h1v1h-1zM1035 515h1v1h-1zM1035 505h1v1h-1zM1035 495h1v1h-1zM1035 485h1v1h-1zM1035 474h1v1h-1zM1035 464h1v1h-1zM1035 454h1v1h-1zM1035 444h1v1h-1zM1035 433h1v1h-1zM1035 423h1v1h-1zM1035 413h1v1h-1zM1035 403h1v1h-1zM1035 392h1v1h-1zM1035 382h1v1h-1zM1035 372h1v1h-1zM1035 362h1v1h-1zM1035 351h1v1h-1zM1035 341h1v1h-1zM1035 331h1v1h-1zM1035 321h1v1h-1zM1035 310h1v1h-1zM1035 300h1v1h-1zM1035 290h1v1h-1zM1035 280h1v1h-1zM1035 269h1v1h-1zM1035 259h1v1h-1zM1035 249h1v1h-1zM1035 239h1v1h-1zM1035 228h1v1h-1zM1035 218h1v1h-1zM1035 208h1v1h-1zM1035 198h1v1h-1zM1035 187h1v1h-1zM1035 177h1v1h-1zM1035 167h1v1h-1zM1035 157h1v1h-1zM1035 146h1v1h-1zM1035 136h1v1h-1zM1035 126h1v1h-1zM1035 116h1v1h-1zM1035 105h1v1h-1zM1035 95h1v1h-1zM1035 85h1v1h-1zM1035 75h1v1h-1zM1035 64h1v1h-1zM1035 54h1v1h-1zM1035 44h1v1h-1zM1035 34h1v1h-1zM1035 23h1v1h-1zM1035 13h1v1h-1zM1035 3h1v1h-1z" fill="#484848"/><rect x="51.30" y="115.75" width="922.50" height="358.75" rx="20.50" stroke="#fff" stroke-width="2.6" fill="none"/>
<path d="M138.43 172.12H261.43A35.88 35.88 0 0 1 261.43 243.88H138.43A35.88 35.88 0 0 1 138.43 172.12Z" stroke="#b0b0b0" stroke-width="1.35" fill="none" stroke-dasharray="8.7 2.9 1.6 2.9" stroke-dashoffset="7.0"/>
<path d="M155.85 317.67H397.75A54.32 54.32 0 0 1 397.75 426.32H155.85A54.32 54.32 0 0 1 155.85 317.67Z" stroke="#b0b0b0" stroke-width="1.35" fill="none" stroke-dasharray="8.7 2.9 1.6 2.9" stroke-dashoffset="3.55"/>
<circle cx="138.43" cy="208.00" r="7.38" stroke="#fff" stroke-width="2.6" fill="none"/>
<circle cx="261.43" cy="208.00" r="7.38" stroke="#fff" stroke-width="2.6" fill="none"/>
<circle cx="374.18" cy="208.00" r="38.13" stroke="#fff" stroke-width="2.6" fill="none"/>
<circle cx="481.80" cy="208.00" r="17.73" stroke="#fff" stroke-width="2.6" fill="none"/>
<circle cx="139.14" cy="372.00" r="16.09" stroke="#fff" stroke-width="2.6" fill="none"/>
<circle cx="414.46" cy="372.00" r="16.09" stroke="#fff" stroke-width="2.6" fill="none"/>
<circle cx="574.05" cy="177.25" r="7.17" stroke="#fff" stroke-width="2.6" fill="none"/>
<circle cx="604.80" cy="177.25" r="7.17" stroke="#fff" stroke-width="2.6" fill="none"/>
<circle cx="635.55" cy="177.25" r="7.17" stroke="#fff" stroke-width="2.6" fill="none"/>
<circle cx="666.30" cy="177.25" r="7.17" stroke="#fff" stroke-width="2.6" fill="none"/>
<circle cx="697.05" cy="177.25" r="7.17" stroke="#fff" stroke-width="2.6" fill="none"/>
<circle cx="727.80" cy="177.25" r="7.17" stroke="#fff" stroke-width="2.6" fill="none"/>
<circle cx="758.55" cy="177.25" r="7.17" stroke="#fff" stroke-width="2.6" fill="none"/>
<circle cx="789.30" cy="177.25" r="7.17" stroke="#fff" stroke-width="2.6" fill="none"/>
<circle cx="820.05" cy="177.25" r="7.17" stroke="#fff" stroke-width="2.6" fill="none"/>
<circle cx="850.80" cy="177.25" r="7.17" stroke="#fff" stroke-width="2.6" fill="none"/>
<circle cx="881.55" cy="177.25" r="7.17" stroke="#fff" stroke-width="2.6" fill="none"/>
<circle cx="912.30" cy="177.25" r="7.17" stroke="#fff" stroke-width="2.6" fill="none"/>
<circle cx="589.42" cy="197.75" r="7.17" stroke="#fff" stroke-width="2.6" fill="none"/>
<circle cx="620.17" cy="197.75" r="7.17" stroke="#fff" stroke-width="2.6" fill="none"/>
<circle cx="650.92" cy="197.75" r="7.17" stroke="#fff" stroke-width="2.6" fill="none"/>
<circle cx="681.67" cy="197.75" r="7.17" stroke="#fff" stroke-width="2.6" fill="none"/>
<circle cx="712.42" cy="197.75" r="7.17" stroke="#fff" stroke-width="2.6" fill="none"/>
<circle cx="743.17" cy="197.75" r="7.17" stroke="#fff" stroke-width="2.6" fill="none"/>
<circle cx="773.92" cy="197.75" r="7.17" stroke="#fff" stroke-width="2.6" fill="none"/>
<circle cx="804.67" cy="197.75" r="7.17" stroke="#fff" stroke-width="2.6" fill="none"/>
<circle cx="835.42" cy="197.75" r="7.17" stroke="#fff" stroke-width="2.6" fill="none"/>
<circle cx="866.17" cy="197.75" r="7.17" stroke="#fff" stroke-width="2.6" fill="none"/>
<circle cx="896.92" cy="197.75" r="7.17" stroke="#fff" stroke-width="2.6" fill="none"/>
<circle cx="574.05" cy="218.25" r="7.17" stroke="#fff" stroke-width="2.6" fill="none"/>
<circle cx="604.80" cy="218.25" r="7.17" stroke="#fff" stroke-width="2.6" fill="none"/>
<circle cx="635.55" cy="218.25" r="7.17" stroke="#fff" stroke-width="2.6" fill="none"/>
<circle cx="666.30" cy="218.25" r="7.17" stroke="#fff" stroke-width="2.6" fill="none"/>
<circle cx="697.05" cy="218.25" r="7.17" stroke="#fff" stroke-width="2.6" fill="none"/>
<circle cx="727.80" cy="218.25" r="7.17" stroke="#fff" stroke-width="2.6" fill="none"/>
<circle cx="758.55" cy="218.25" r="7.17" stroke="#fff" stroke-width="2.6" fill="none"/>
<circle cx="789.30" cy="218.25" r="7.17" stroke="#fff" stroke-width="2.6" fill="none"/>
<circle cx="820.05" cy="218.25" r="7.17" stroke="#fff" stroke-width="2.6" fill="none"/>
<circle cx="850.80" cy="218.25" r="7.17" stroke="#fff" stroke-width="2.6" fill="none"/>
<circle cx="881.55" cy="218.25" r="7.17" stroke="#fff" stroke-width="2.6" fill="none"/>
<circle cx="912.30" cy="218.25" r="7.17" stroke="#fff" stroke-width="2.6" fill="none"/>
<circle cx="589.42" cy="238.75" r="7.17" stroke="#fff" stroke-width="2.6" fill="none"/>
<circle cx="620.17" cy="238.75" r="7.17" stroke="#fff" stroke-width="2.6" fill="none"/>
<circle cx="650.92" cy="238.75" r="7.17" stroke="#fff" stroke-width="2.6" fill="none"/>
<circle cx="681.67" cy="238.75" r="7.17" stroke="#fff" stroke-width="2.6" fill="none"/>
<circle cx="712.42" cy="238.75" r="7.17" stroke="#fff" stroke-width="2.6" fill="none"/>
<circle cx="743.17" cy="238.75" r="7.17" stroke="#fff" stroke-width="2.6" fill="none"/>
<circle cx="773.92" cy="238.75" r="7.17" stroke="#fff" stroke-width="2.6" fill="none"/>
<circle cx="804.67" cy="238.75" r="7.17" stroke="#fff" stroke-width="2.6" fill="none"/>
<circle cx="835.42" cy="238.75" r="7.17" stroke="#fff" stroke-width="2.6" fill="none"/>
<circle cx="866.17" cy="238.75" r="7.17" stroke="#fff" stroke-width="2.6" fill="none"/>
<circle cx="896.92" cy="238.75" r="7.17" stroke="#fff" stroke-width="2.6" fill="none"/>
<circle cx="574.05" cy="259.25" r="7.17" stroke="#fff" stroke-width="2.6" fill="none"/>
<circle cx="604.80" cy="259.25" r="7.17" stroke="#fff" stroke-width="2.6" fill="none"/>
<circle cx="635.55" cy="259.25" r="7.17" stroke="#fff" stroke-width="2.6" fill="none"/>
<circle cx="666.30" cy="259.25" r="7.17" stroke="#fff" stroke-width="2.6" fill="none"/>
<circle cx="697.05" cy="259.25" r="7.17" stroke="#fff" stroke-width="2.6" fill="none"/>
<circle cx="727.80" cy="259.25" r="7.17" stroke="#fff" stroke-width="2.6" fill="none"/>
<circle cx="758.55" cy="259.25" r="7.17" stroke="#fff" stroke-width="2.6" fill="none"/>
<circle cx="789.30" cy="259.25" r="7.17" stroke="#fff" stroke-width="2.6" fill="none"/>
<circle cx="820.05" cy="259.25" r="7.17" stroke="#fff" stroke-width="2.6" fill="none"/>
<circle cx="850.80" cy="259.25" r="7.17" stroke="#fff" stroke-width="2.6" fill="none"/>
<circle cx="881.55" cy="259.25" r="7.17" stroke="#fff" stroke-width="2.6" fill="none"/>
<circle cx="912.30" cy="259.25" r="7.17" stroke="#fff" stroke-width="2.6" fill="none"/>
<circle cx="589.42" cy="279.75" r="7.17" stroke="#fff" stroke-width="2.6" fill="none"/>
<circle cx="620.17" cy="279.75" r="7.17" stroke="#fff" stroke-width="2.6" fill="none"/>
<circle cx="650.92" cy="279.75" r="7.17" stroke="#fff" stroke-width="2.6" fill="none"/>
<circle cx="681.67" cy="279.75" r="7.17" stroke="#fff" stroke-width="2.6" fill="none"/>
<circle cx="712.42" cy="279.75" r="7.17" stroke="#fff" stroke-width="2.6" fill="none"/>
<circle cx="743.17" cy="279.75" r="7.17" stroke="#fff" stroke-width="2.6" fill="none"/>
<circle cx="773.92" cy="279.75" r="7.17" stroke="#fff" stroke-width="2.6" fill="none"/>
<circle cx="804.67" cy="279.75" r="7.17" stroke="#fff" stroke-width="2.6" fill="none"/>
<circle cx="835.42" cy="279.75" r="7.17" stroke="#fff" stroke-width="2.6" fill="none"/>
<circle cx="866.17" cy="279.75" r="7.17" stroke="#fff" stroke-width="2.6" fill="none"/>
<circle cx="896.92" cy="279.75" r="7.17" stroke="#fff" stroke-width="2.6" fill="none"/>
<circle cx="574.05" cy="300.25" r="7.17" stroke="#fff" stroke-width="2.6" fill="none"/>
<circle cx="604.80" cy="300.25" r="7.17" stroke="#fff" stroke-width="2.6" fill="none"/>
<circle cx="635.55" cy="300.25" r="7.17" stroke="#fff" stroke-width="2.6" fill="none"/>
<circle cx="666.30" cy="300.25" r="7.17" stroke="#fff" stroke-width="2.6" fill="none"/>
<circle cx="697.05" cy="300.25" r="7.17" stroke="#fff" stroke-width="2.6" fill="none"/>
<circle cx="727.80" cy="300.25" r="7.17" stroke="#fff" stroke-width="2.6" fill="none"/>
<circle cx="589.42" cy="320.75" r="7.17" stroke="#fff" stroke-width="2.6" fill="none"/>
<circle cx="620.17" cy="320.75" r="7.17" stroke="#fff" stroke-width="2.6" fill="none"/>
<circle cx="650.92" cy="320.75" r="7.17" stroke="#fff" stroke-width="2.6" fill="none"/>
<circle cx="681.67" cy="320.75" r="7.17" stroke="#fff" stroke-width="2.6" fill="none"/>
<circle cx="712.42" cy="320.75" r="7.17" stroke="#fff" stroke-width="2.6" fill="none"/>
<circle cx="574.05" cy="341.25" r="7.17" stroke="#fff" stroke-width="2.6" fill="none"/>
<circle cx="604.80" cy="341.25" r="7.17" stroke="#fff" stroke-width="2.6" fill="none"/>
<circle cx="635.55" cy="341.25" r="7.17" stroke="#fff" stroke-width="2.6" fill="none"/>
<circle cx="666.30" cy="341.25" r="7.17" stroke="#fff" stroke-width="2.6" fill="none"/>
<circle cx="697.05" cy="341.25" r="7.17" stroke="#fff" stroke-width="2.6" fill="none"/>
<circle cx="727.80" cy="341.25" r="7.17" stroke="#fff" stroke-width="2.6" fill="none"/>
<circle cx="589.42" cy="361.75" r="7.17" stroke="#fff" stroke-width="2.6" fill="none"/>
<circle cx="620.17" cy="361.75" r="7.17" stroke="#fff" stroke-width="2.6" fill="none"/>
<circle cx="650.92" cy="361.75" r="7.17" stroke="#fff" stroke-width="2.6" fill="none"/>
<circle cx="681.67" cy="361.75" r="7.17" stroke="#fff" stroke-width="2.6" fill="none"/>
<circle cx="712.42" cy="361.75" r="7.17" stroke="#fff" stroke-width="2.6" fill="none"/>
<circle cx="574.05" cy="382.25" r="7.17" stroke="#fff" stroke-width="2.6" fill="none"/>
<circle cx="604.80" cy="382.25" r="7.17" stroke="#fff" stroke-width="2.6" fill="none"/>
<circle cx="635.55" cy="382.25" r="7.17" stroke="#fff" stroke-width="2.6" fill="none"/>
<circle cx="666.30" cy="382.25" r="7.17" stroke="#fff" stroke-width="2.6" fill="none"/>
<circle cx="697.05" cy="382.25" r="7.17" stroke="#fff" stroke-width="2.6" fill="none"/>
<circle cx="727.80" cy="382.25" r="7.17" stroke="#fff" stroke-width="2.6" fill="none"/>
<circle cx="589.42" cy="402.75" r="7.17" stroke="#fff" stroke-width="2.6" fill="none"/>
<circle cx="620.17" cy="402.75" r="7.17" stroke="#fff" stroke-width="2.6" fill="none"/>
<circle cx="650.92" cy="402.75" r="7.17" stroke="#fff" stroke-width="2.6" fill="none"/>
<circle cx="681.67" cy="402.75" r="7.17" stroke="#fff" stroke-width="2.6" fill="none"/>
<circle cx="712.42" cy="402.75" r="7.17" stroke="#fff" stroke-width="2.6" fill="none"/>
<circle cx="574.05" cy="423.25" r="7.17" stroke="#fff" stroke-width="2.6" fill="none"/>
<circle cx="604.80" cy="423.25" r="7.17" stroke="#fff" stroke-width="2.6" fill="none"/>
<circle cx="635.55" cy="423.25" r="7.17" stroke="#fff" stroke-width="2.6" fill="none"/>
<circle cx="666.30" cy="423.25" r="7.17" stroke="#fff" stroke-width="2.6" fill="none"/>
<circle cx="697.05" cy="423.25" r="7.17" stroke="#fff" stroke-width="2.6" fill="none"/>
<circle cx="727.80" cy="423.25" r="7.17" stroke="#fff" stroke-width="2.6" fill="none"/>
<path d="M150.73 195.21Q148.68 182.38 161.68 182.38L238.18 182.38Q251.18 182.38 249.12 195.21L245.03 220.79Q242.97 233.62 229.97 233.62L169.88 233.62Q156.88 233.62 154.82 220.79Z" stroke="#fff" stroke-width="2.6" fill="none" stroke-linejoin="round"/>
<rect x="763.98" y="310.50" width="159.18" height="112.44" rx="20.50" stroke="#fff" stroke-width="2.6" fill="none"/>
<path d="M193.06 339.20L360.64 339.20L360.64 388.71L343.73 388.71L330.61 404.29L222.58 404.29L209.46 388.71L193.06 388.71Z" stroke="#fff" stroke-width="2.6" fill="none" stroke-linejoin="miter"/>
<path d="M92.00 208.00H308.00" stroke="#cc1111" stroke-width="2" fill="none" stroke-dasharray="16 6.5 2 7.5" stroke-dashoffset="13.00"/>
<path d="M199.70 156.00V259.70" stroke="#cc1111" stroke-width="2" fill="none" stroke-dasharray="16 6.5 2 7.5" stroke-dashoffset="5.00"/>
<path d="M322.00 208.00H431.00" stroke="#cc1111" stroke-width="2" fill="none" stroke-dasharray="16 6.5 2 7.5" stroke-dashoffset="1.70"/>
<path d="M374.00 156.40V259.50" stroke="#cc1111" stroke-width="2" fill="none" stroke-dasharray="16 6.5 2 7.5" stroke-dashoffset="5.00"/>
<path d="M450.80 208.00H512.90" stroke="#cc1111" stroke-width="2" fill="none" stroke-dasharray="16 6.5 2 7.5" stroke-dashoffset="9.80"/>
<path d="M481.60 176.60V239.00" stroke="#cc1111" stroke-width="2" fill="none" stroke-dasharray="16 6.5 2 7.5" stroke-dashoffset="9.60"/>
<path d="M81.70 372.00H471.90" stroke="#cc1111" stroke-width="2" fill="none" stroke-dasharray="16 6.5 2 7.5" stroke-dashoffset="5.40"/>
<path d="M276.80 300.00V444.40" stroke="#cc1111" stroke-width="2" fill="none" stroke-dasharray="16 6.5 2 7.5" stroke-dashoffset="0.30"/>
<path d="M750.00 367.00H936.00" stroke="#cc1111" stroke-width="2" fill="none" stroke-dasharray="16 6.5 2 7.5" stroke-dashoffset="11.20"/>
<path d="M842.80 289.50V436.50" stroke="#cc1111" stroke-width="2" fill="none" stroke-dasharray="16 6.5 2 7.5" stroke-dashoffset="14.90"/>
<path d="M30.80 474.50H71.80M51.30 454.00V495.00" stroke="#b00000" stroke-width="1" fill="none"/>
<path d="M52.30 454.00A19.50 19.50 0 0 0 71.80 473.50" stroke="#d02020" stroke-width="1" fill="none"/>
<path d="M0 156.0H1043M563.4 0V577" stroke="#4c3a0d" stroke-width="2" stroke-dasharray="4 2" fill="none"/>
<defs><radialGradient id="rg" cx="563.4" cy="156.0" r="40" gradientUnits="userSpaceOnUse"><stop offset="0.75" stop-color="#222a34" stop-opacity="0"/><stop offset="0.78" stop-color="#26303c"/><stop offset="0.82" stop-color="#4a5868"/><stop offset="0.86" stop-color="#34404e"/><stop offset="0.90" stop-color="#5a6a7a"/><stop offset="0.94" stop-color="#3c4858"/><stop offset="0.97" stop-color="#4e5c6c"/><stop offset="1" stop-color="#303a46" stop-opacity="0"/></radialGradient></defs>
<circle cx="563.4" cy="156.0" r="40" fill="url(#rg)"/>
<path d="M549.4 156.0H577.4M563.4 142.0V170.0" stroke="#c4c4c4" stroke-width="3.2" stroke-linecap="round"/>
<circle cx="563.4" cy="156.0" r="4.5" stroke="#c00" stroke-width="0.8" stroke-dasharray="1.5 1.5" fill="none"/>
<circle cx="563.4" cy="156.0" r="1.5" fill="#c03010"/></svg>
<div class="a" style="left:1138px;top:132px;width:16px;height:600px;background:#f6f6f6"></div>
<div class="a" style="left:95px;top:732px;width:1004px;height:16px;background:#f6f6f6"></div>
<div class="a" style="left:1099px;top:732px;width:55px;height:16px;background:#e9e9e9"></div>
<div class="t" style="left:1110px;top:734px;font-size:13px;color:#1a1a1a;width:42px;text-align:right">1 &lt; 10</div>
<div class="a" style="left:301px;top:737px;width:603px;height:8px;background:#808080;border-radius:4px"></div>
<div class="a" style="left:1143px;top:298px;width:8px;height:284px;background:#808080;border-radius:4px"></div>
<div class="a" style="left:1154px;top:107px;width:2px;height:690px;background:#cfcfcf"></div>
<div class="a" style="left:72px;top:748px;width:1082px;height:2px;background:#c8c8c8"></div>
<div class="a" style="left:72px;top:750px;width:1082px;height:20px;background:#fff"></div>
<div class="t" style="left:77px;top:751px;font-size:13px;color:#1010d0;"><i>Comando:</i> snapfree</div>
<div class="a" style="left:72px;top:770px;width:1082px;height:1px;background:#bdbdbd"></div>
<div class="a" style="left:72px;top:771px;width:1082px;height:26px;background:#ececec"></div>
<div class="t" style="left:73px;top:778px;font-size:13px;color:#111;">Segundo punto:</div>
<div class="a" style="left:172px;top:776px;width:955px;height:18px;background:#fff"></div>
<div class="a" style="left:1127px;top:772px;width:27px;height:25px;background:linear-gradient(#f4f4f4,#e4e4e4);border:1px solid #b8b8b8"></div>
<svg class="a" style="left:1133px;top:780px;" width="15" height="11" viewBox="0 0 15 11"><rect x="0.5" y="0.5" width="14" height="9.5" fill="#eee" stroke="#333"/><rect x="0" y="0" width="15" height="3" fill="#000"/><rect x="11" y="1" width="1.5" height="1.2" fill="#fff"/></svg>
<div class="a" style="left:1156px;top:108px;width:298px;height:22px;background:linear-gradient(#ececec,#dedede)"></div>
<div class="t" style="left:1284px;top:113px;font-size:12px;color:#333;">Lista de capas</div>
<svg class="a" style="left:1156px;top:108px;" width="40" height="22" viewBox="0 0 40 22"><circle cx="7.8" cy="10.4" r="6.6" fill="#6e6e6e"/><path d="M5.2 7.8L10.4 13M10.4 7.8L5.2 13" stroke="#fff" stroke-width="1.6"/><circle cx="26" cy="10.4" r="6.6" fill="#6e6e6e"/><rect x="24.7" y="7.2" width="5" height="4.3" fill="none" stroke="#fff" stroke-width="0.9"/><rect x="22.2" y="9.2" width="5.4" height="4.4" fill="#6e6e6e" stroke="#fff" stroke-width="0.9"/></svg>
<svg class="a" style="left:1155px;top:130px;" width="300" height="27" viewBox="0 0 300 27"><defs><linearGradient id="lbg" x1="0" y1="0" x2="0" y2="1"><stop offset="0" stop-color="#f7f7f7"/><stop offset="1" stop-color="#e4e4e4"/></linearGradient></defs><rect x="0.5" y="0.5" width="58.5" height="25" fill="url(#lbg)" stroke="#a8a8a8"/><rect x="60.0" y="0.5" width="59.3" height="25" fill="url(#lbg)" stroke="#a8a8a8"/><rect x="120.3" y="0.5" width="59.000000000000014" height="25" fill="url(#lbg)" stroke="#a8a8a8"/><rect x="180.3" y="0.5" width="58.89999999999998" height="25" fill="url(#lbg)" stroke="#a8a8a8"/><rect x="240.2" y="0.5" width="58.900000000000034" height="25" fill="url(#lbg)" stroke="#a8a8a8"/><path d="M21.7 13.3C25.0 5.1 34.0 5.1 37.3 13.3C33.7 19.5 25.3 19.5 21.7 13.3Z" fill="#000" stroke="#000" stroke-width="0.6"/><path d="M24.5 13.5C27.0 9.9 32.0 9.9 34.5 13.5C32.0 16.4 27.0 16.4 24.5 13.5Z" fill="#fff"/><circle cx="29.5" cy="13.1" r="2.7" fill="#000"/><circle cx="29.5" cy="11.9" r="0.6" fill="#fff" opacity="0.7"/><path d="M81.7 13.3C85.0 5.1 94.0 5.1 97.3 13.3C93.7 19.5 85.3 19.5 81.7 13.3Z" fill="#b4b4b4" stroke="#b4b4b4" stroke-width="0.6"/><path d="M84.5 13.5C87.0 9.9 92.0 9.9 94.5 13.5C92.0 16.4 87.0 16.4 84.5 13.5Z" fill="#fff"/><circle cx="89.5" cy="13.1" r="2.7" fill="#b4b4b4"/><circle cx="89.5" cy="11.9" r="0.6" fill="#fff" opacity="0.7"/><path d="M143.5 12.5H155.5M149.5 6.5V18.5" stroke="#e00000" stroke-width="3"/><path d="M203.5 12.5H215.5" stroke="#e00000" stroke-width="3"/><path d="M262.5 19.5L264.0 15.5L273.5 6.0L276.0 8.5L266.5 18.0Z" fill="#f0b030" stroke="#8a5a10" stroke-width="0.7"/><path d="M273.5 6.0L275.0 4.5L277.5 7.0L276.0 8.5Z" fill="#e03030"/></svg>
<div class="a" style="left:1156px;top:156px;width:298px;height:641px;background:#fff;border-left:1px solid #c8c8c8"></div>
<svg class="a" style="left:1155px;top:156px;" width="300" height="100" viewBox="0 0 300 100"><rect x="6.3" y="7.5" width="15.5" height="7.5" fill="#000" stroke="#222" stroke-width="1"/><path d="M259.7 11.8C263.0 3.5999999999999996 272.0 3.5999999999999996 275.3 11.8C271.7 18 263.3 18 259.7 11.8Z" fill="#000" stroke="#000" stroke-width="0.6"/><path d="M262.5 12C265.0 8.4 270.0 8.4 272.5 12C270.0 14.9 265.0 14.9 262.5 12Z" fill="#fff"/><circle cx="267.5" cy="11.6" r="2.7" fill="#000"/><circle cx="267.5" cy="10.4" r="0.6" fill="#fff" opacity="0.7"/><path d="M286.0 11V8A3.5 3.5 0 0 1 293.0 8V11" fill="none" stroke="#c4c4c4" stroke-width="1.6"/><rect x="284.5" y="11" width="10" height="8" rx="1" fill="#c4c4c4"/><rect x="6.3" y="27.5" width="15.5" height="7.5" fill="#f00" stroke="#222" stroke-width="1"/><path d="M259.7 31.8C263.0 23.6 272.0 23.6 275.3 31.8C271.7 38 263.3 38 259.7 31.8Z" fill="#000" stroke="#000" stroke-width="0.6"/><path d="M262.5 32C265.0 28.4 270.0 28.4 272.5 32C270.0 34.9 265.0 34.9 262.5 32Z" fill="#fff"/><circle cx="267.5" cy="31.6" r="2.7" fill="#000"/><circle cx="267.5" cy="30.4" r="0.6" fill="#fff" opacity="0.7"/><path d="M286.0 31V28A3.5 3.5 0 0 1 293.0 28V31" fill="none" stroke="#c4c4c4" stroke-width="1.6"/><rect x="284.5" y="31" width="10" height="8" rx="1" fill="#c4c4c4"/><rect x="6.3" y="47.5" width="15.5" height="7.5" fill="#000" stroke="#222" stroke-width="1"/><path d="M259.7 51.8C263.0 43.6 272.0 43.6 275.3 51.8C271.7 58 263.3 58 259.7 51.8Z" fill="#000" stroke="#000" stroke-width="0.6"/><path d="M262.5 52C265.0 48.4 270.0 48.4 272.5 52C270.0 54.9 265.0 54.9 262.5 52Z" fill="#fff"/><circle cx="267.5" cy="51.6" r="2.7" fill="#000"/><circle cx="267.5" cy="50.4" r="0.6" fill="#fff" opacity="0.7"/><path d="M286.0 51V48A3.5 3.5 0 0 1 293.0 48V51" fill="none" stroke="#c4c4c4" stroke-width="1.6"/><rect x="284.5" y="51" width="10" height="8" rx="1" fill="#c4c4c4"/><rect x="6.3" y="67.5" width="15.5" height="7.5" fill="#a4a4aa" stroke="#222" stroke-width="1"/><path d="M259.7 71.8C263.0 63.6 272.0 63.6 275.3 71.8C271.7 78 263.3 78 259.7 71.8Z" fill="#000" stroke="#000" stroke-width="0.6"/><path d="M262.5 72C265.0 68.4 270.0 68.4 272.5 72C270.0 74.9 265.0 74.9 262.5 72Z" fill="#fff"/><circle cx="267.5" cy="71.6" r="2.7" fill="#000"/><circle cx="267.5" cy="70.4" r="0.6" fill="#fff" opacity="0.7"/><path d="M286.0 71V68A3.5 3.5 0 0 1 293.0 68V71" fill="none" stroke="#c4c4c4" stroke-width="1.6"/><rect x="284.5" y="71" width="10" height="8" rx="1" fill="#c4c4c4"/><path d="M238 78L239.5 74L249 64.5L251.5 67L242 76.5Z" fill="#f0b030" stroke="#8a5a10" stroke-width="0.7"/><path d="M249 64.5L250.5 63L253 65.5L251.5 67Z" fill="#e03030"/></svg><div class="t" style="left:1183px;top:160px;font-size:13px;color:#111;">0</div><div class="t" style="left:1183px;top:180px;font-size:13px;color:#111;">Centro</div><div class="t" style="left:1183px;top:200px;font-size:13px;color:#111;">Ventilación</div><div class="t" style="left:1183px;top:220px;font-size:13px;color:#111;">Volver</div>
<div class="a" style="left:1454px;top:107px;width:46px;height:690px;background:linear-gradient(90deg,#c8c8c8 0%,#c8c8c8 2%,#ececec 5%,#dddddd 55%,#c6c6c6 100%)"></div>
<svg class="a" style="left:0px;top:0px;" width="1500" height="800" viewBox="0 0 1500 800"><path d="M1462 117.5H1490" stroke="#999" stroke-width="1.5" stroke-dasharray="1.5 4.5"/><rect x="1456" y="120" width="43" height="43" rx="4" fill="#b7b7b7"/><rect x="1463.5" y="127.5" width="27" height="27" fill="#fff" stroke="#222"/><rect x="1463" y="127" width="28" height="4" fill="#000"/><rect x="1464.5" y="128" width="2.5" height="2.5" fill="#fff"/><path d="M1470 140L1478 136V148L1470 152Z" fill="#999" stroke="#333" stroke-width="0.8"/><path d="M1474 138L1484 134V146L1474 150Z" fill="#ddd" stroke="#333" stroke-width="0.8"/><path d="M1477 145L1481 139L1482 145Z" fill="none" stroke="#e00" stroke-width="0.8"/><rect x="1463.5" y="174.5" width="27" height="27" fill="#fff" stroke="#222"/><rect x="1463" y="174" width="28" height="4" fill="#000"/><rect x="1464.5" y="175" width="2.5" height="2.5" fill="#fff"/><rect x="1470.5" y="184.5" width="10" height="7" fill="#f4e4b0" stroke="#555" stroke-width="0.7"/><circle cx="1479.5" cy="191" r="4.5" fill="#f4e4b0" stroke="#555" stroke-width="0.7"/><rect x="1463.5" y="220.5" width="27" height="27" fill="#fff" stroke="#222"/><rect x="1463" y="220" width="28" height="4" fill="#000"/><rect x="1464.5" y="221" width="2.5" height="2.5" fill="#fff"/><rect x="1468" y="229" width="18" height="12" rx="2" fill="#f4f4f4" stroke="#b8c8e8" stroke-width="0.8"/><path d="M1456 262.5H1500" stroke="#777" stroke-width="1" stroke-dasharray="1 2"/><rect x="1463.5" y="276.5" width="27" height="27" fill="#fff" stroke="#222"/><rect x="1463" y="276" width="28" height="4" fill="#000"/><rect x="1464.5" y="277" width="2.5" height="2.5" fill="#fff"/><path d="M1467 283h3v2h-3zM1467 289h3v2h-3zM1467 295h3v2h-3z" fill="#000"/><path d="M1473 283.5h14v2h-14zM1473 289.5h14v2h-14zM1473 295.5h14v2h-14z" fill="none" stroke="#333" stroke-width="0.7"/><rect x="1463.5" y="322.5" width="27" height="27" fill="#fff" stroke="#222"/><rect x="1463" y="322" width="28" height="4" fill="#000"/><rect x="1464.5" y="323" width="2.5" height="2.5" fill="#fff"/><path d="M1471 333H1485L1479 340V346L1477 345V340Z" fill="#999" stroke="#333" stroke-width="0.7"/><rect x="1463.5" y="368.5" width="27" height="27" fill="#fff" stroke="#222"/><rect x="1463" y="368" width="28" height="4" fill="#000"/><rect x="1464.5" y="369" width="2.5" height="2.5" fill="#fff"/><path d="M1470 375L1476 379V387L1470 391Z" fill="#fff" stroke="#333" stroke-width="0.8"/><rect x="1476" y="378" width="9" height="9" fill="#888"/><path d="M1467 383H1489" stroke="#f88" stroke-width="0.6" stroke-dasharray="1 1"/><path d="M1456 409.5H1500" stroke="#777" stroke-width="1" stroke-dasharray="1 2"/><rect x="1456" y="417" width="43" height="43" rx="4" fill="#b7b7b7"/><rect x="1463.5" y="424.5" width="27" height="27" fill="#fff" stroke="#222"/><rect x="1463" y="424" width="28" height="4" fill="#000"/><rect x="1464.5" y="425" width="2.5" height="2.5" fill="#fff"/><path d="M1466 431h12M1466 434h10M1466 437h12M1466 440h12" stroke="#999" stroke-width="0.6"/><path d="M1463 445H1491" stroke="#333" stroke-width="0.8"/><path d="M1472 448h16" stroke="#777" stroke-width="0.8"/><rect x="1463.5" y="471.5" width="27" height="27" fill="#fff" stroke="#222"/><rect x="1463" y="471" width="28" height="4" fill="#000"/><rect x="1464.5" y="472" width="2.5" height="2.5" fill="#fff"/><rect x="1470" y="479" width="14" height="16" fill="#c89850" stroke="#8a6020" stroke-width="0.7"/><rect x="1472" y="481" width="10" height="13" fill="#eee"/><rect x="1474" y="477" width="6" height="3" fill="#888"/></svg>
<div class="a" style="left:0px;top:797px;width:1500px;height:47px;background:#dcdcdc;border-top:1px solid #c8c8c8"></div>
<div class="t" style="left:2px;top:808px;font-size:10px;color:#222;letter-spacing:0.2px">49.9268,31.0732</div>
<div class="t" style="left:2px;top:829px;font-size:10px;color:#222;letter-spacing:0.2px">@0,0</div>
<div class="a" style="left:254px;top:802px;width:1px;height:40px;background:#9a9a9a"></div>
<div class="t" style="left:256px;top:808px;font-size:10px;color:#222;letter-spacing:0.2px">58.8067&lt;31.90°</div>
<div class="t" style="left:256px;top:829px;font-size:10px;color:#222;letter-spacing:0.2px">@0&lt;0.00°</div>
<svg class="a" style="left:0px;top:800px;" width="1500" height="44" viewBox="0 0 1500 44"><circle cx="509.5" cy="22" r="2.8" fill="#c4c4c4"/><circle cx="943.5" cy="22" r="2.8" fill="#c4c4c4"/><circle cx="1272.5" cy="22" r="2.8" fill="#c4c4c4"/><path d="M717.5 14A8.5 8.5 0 0 1 734.5 14V25A8.5 9.5 0 0 1 717.5 25Z" fill="#fff" stroke="#333" stroke-width="0.9"/><path d="M717.5 19H734.5M726 6V19" stroke="#333" stroke-width="0.9"/><rect x="724.5" y="9" width="3" height="6" rx="1.5" fill="#fff" stroke="#333" stroke-width="0.8"/></svg><div class="t" style="left:630px;top:817px;font-size:10px;color:#222;">Segundo punto</div><div class="t" style="left:754px;top:817px;font-size:10px;color:#222;">Cancelar</div><div class="t" style="left:949px;top:817px;font-size:10px;color:#222;">No hay entidades seleccionadas.</div>
</body></html>
